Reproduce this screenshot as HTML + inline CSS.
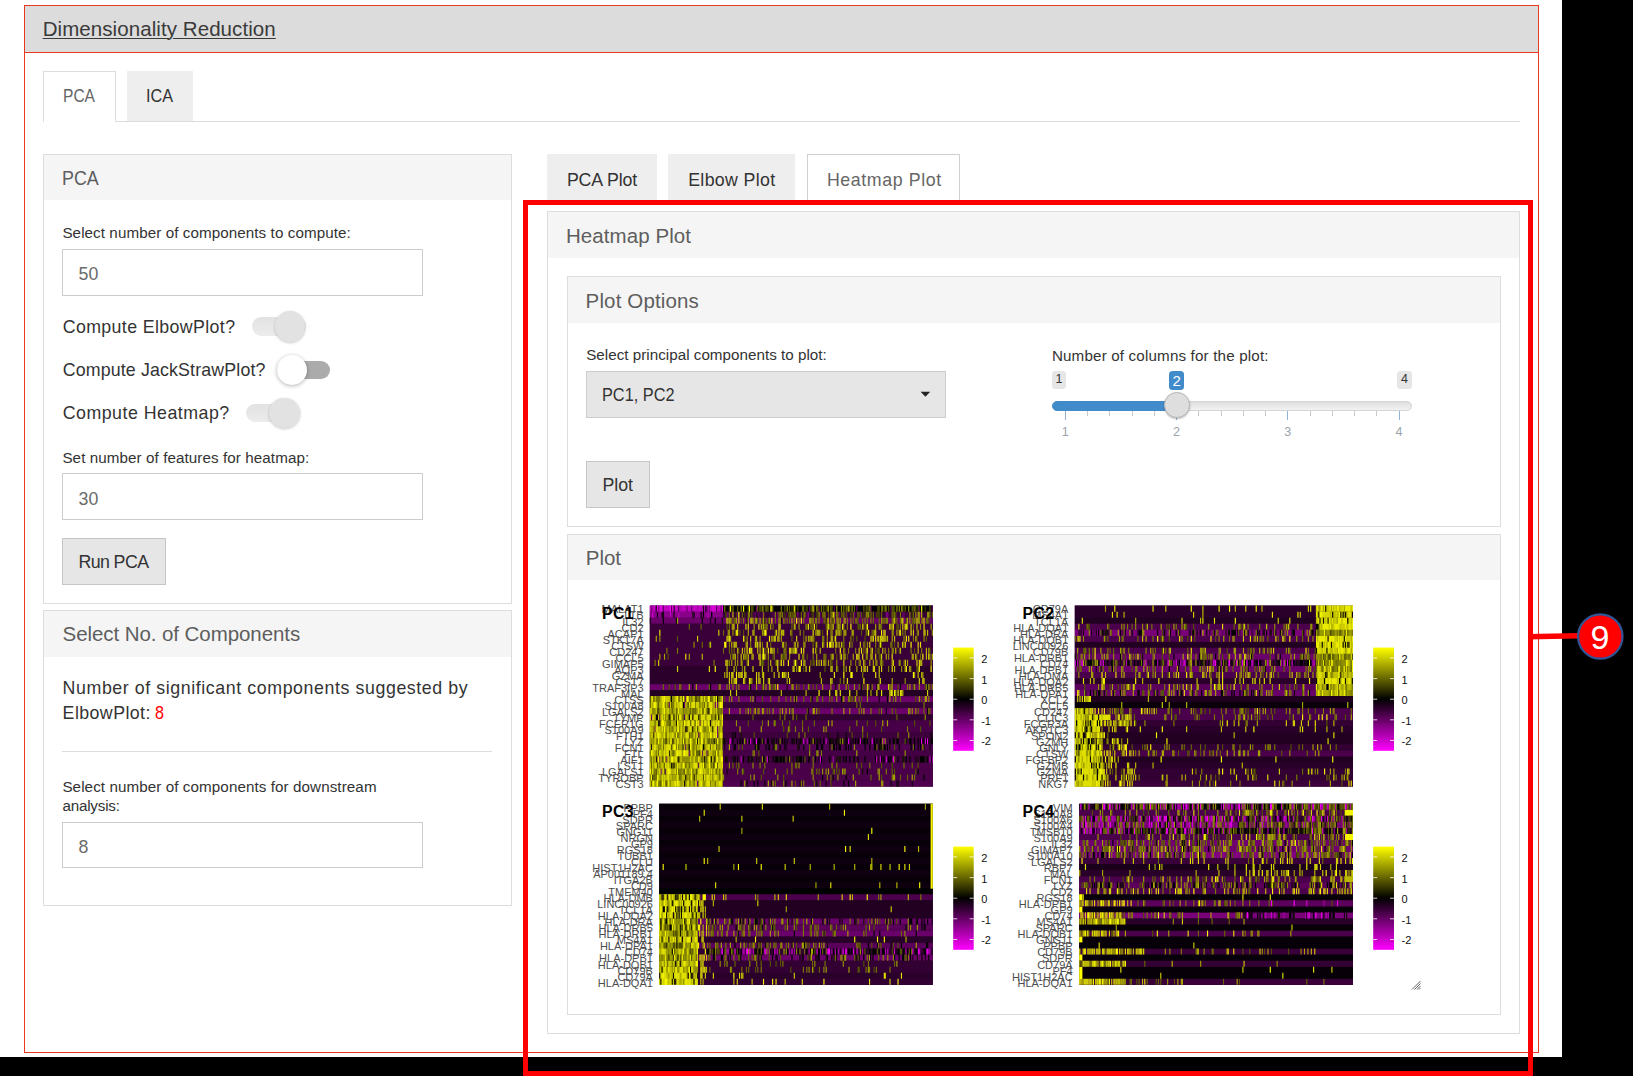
<!DOCTYPE html>
<html><head><meta charset="utf-8"><title>Dimensionality Reduction</title>
<style>
html,body{margin:0;padding:0;background:#fff;}
body{width:1633px;height:1076px;position:relative;overflow:hidden;font-family:"Liberation Sans",sans-serif;}
.a{position:absolute;box-sizing:border-box;}
.t{position:absolute;white-space:pre;margin:0;padding:0;}
.pn{border:1px solid #ddd;background:#fff;}
.ph{background:#f5f5f5;}
.in{border:1px solid #ccc;background:#fff;}
.bt{border:1px solid #c6c6c6;background:#e6e6e6;}
.tab{background:#eee;}
.tabA{background:#fff;border:1px solid #ddd;border-bottom:none;}
</style></head><body>
<div class="a" style="left:1562px;top:0px;width:71px;height:1076px;background:#000"></div>
<div class="a" style="left:0px;top:1057px;width:1633px;height:19px;background:#000"></div>
<div class="a" style="left:24px;top:5px;width:1515px;height:1048px;border:1px solid #e8391f;background:#fff"></div>
<div class="a" style="left:25px;top:6px;width:1513px;height:47px;background:#dcdcdc;border-bottom:1px solid #e8391f"></div>
<div class="a" style="left:43px;top:121px;width:1477px;height:1px;background:#ddd"></div>
<div class="a tabA" style="left:43px;top:71px;width:73px;height:51px;"></div>
<div class="a tab" style="left:127px;top:71px;width:66px;height:50px;"></div>
<div class="a pn" style="left:43px;top:154px;width:469px;height:450px;"></div>
<div class="a ph" style="left:44px;top:155px;width:467px;height:45px;"></div>
<div class="a in" style="left:62px;top:249px;width:361px;height:47px;"></div>
<div class="a" style="left:252px;top:317.3px;width:53.5px;height:18.399999999999977px;border-radius:9.2px;background:linear-gradient(#e2e2e2,#ececec);"></div><div class="a" style="left:275.1px;top:311.3px;width:30.399999999999977px;height:30.399999999999977px;border-radius:50%;background:#e2e2e2;box-shadow:0 1px 3px rgba(0,0,0,0.22);"></div>
<div class="a" style="left:276.5px;top:360.5px;width:53.5px;height:18.399999999999977px;border-radius:9.2px;background:#ababab;"></div><div class="a" style="left:276.5px;top:354.5px;width:30.399999999999977px;height:30.399999999999977px;border-radius:50%;background:#fff;box-shadow:0 1px 4px rgba(0,0,0,0.3);"></div>
<div class="a" style="left:246.2px;top:403.6px;width:53.5px;height:18.399999999999977px;border-radius:9.2px;background:linear-gradient(#e2e2e2,#ececec);"></div><div class="a" style="left:269.3px;top:397.6px;width:30.399999999999977px;height:30.399999999999977px;border-radius:50%;background:#e2e2e2;box-shadow:0 1px 3px rgba(0,0,0,0.22);"></div>
<div class="a in" style="left:62px;top:473px;width:361px;height:47px;"></div>
<div class="a bt" style="left:62px;top:538px;width:104px;height:47px;"></div>
<div class="a pn" style="left:43px;top:610px;width:469px;height:296px;"></div>
<div class="a ph" style="left:44px;top:611px;width:467px;height:46px;"></div>
<div class="a" style="left:62px;top:751px;width:430px;height:1px;background:#ddd"></div>
<div class="a in" style="left:62px;top:822px;width:361px;height:46px;"></div>
<div class="a tab" style="left:547px;top:154px;width:110px;height:48px;"></div>
<div class="a tab" style="left:668px;top:154px;width:127px;height:48px;"></div>
<div class="a tabA" style="left:807px;top:154px;width:153px;height:49px;border-color:#d0d0d0;"></div>
<div class="a pn" style="left:547px;top:211px;width:973px;height:823px;"></div>
<div class="a ph" style="left:548px;top:212px;width:971px;height:46px;"></div>
<div class="a pn" style="left:567px;top:276px;width:934px;height:251px;"></div>
<div class="a ph" style="left:568px;top:277px;width:932px;height:46px;"></div>
<div class="a" style="left:586px;top:371px;width:360px;height:47px;border:1px solid #ccc;background:#e6e6e6"></div>
<svg class="a" style="left:920px;top:391px" width="11" height="7" viewBox="0 0 11 7"><path d="M0.6 0.8 L10.2 0.8 L5.4 5.8 Z" fill="#222"/></svg>
<div class="a bt" style="left:586px;top:461px;width:64px;height:47px;"></div>
<div class="a" style="left:1051.7px;top:400.8px;width:360.0999999999999px;height:10.199999999999989px;border-radius:5px;background:linear-gradient(#dedede,#f2f2f2);border:1px solid #d4d4d4;"></div>
<div class="a" style="left:1051.7px;top:400.8px;width:126.29999999999995px;height:10.199999999999989px;border-radius:5px 0 0 5px;background:#428bca;border:1px solid #428bca;"></div>
<div class="a" style="left:1064.7px;top:411px;width:1.0px;height:9px;background:#8fb3d9"></div><div class="a" style="left:1087.0px;top:411px;width:1.0px;height:4.5px;background:#c8c8c8"></div><div class="a" style="left:1109.2px;top:411px;width:1.0px;height:4.5px;background:#c8c8c8"></div><div class="a" style="left:1131.5px;top:411px;width:1.0px;height:4.5px;background:#c8c8c8"></div><div class="a" style="left:1153.7px;top:411px;width:1.0px;height:4.5px;background:#c8c8c8"></div><div class="a" style="left:1176.0px;top:411px;width:1.0px;height:9px;background:#8fb3d9"></div><div class="a" style="left:1198.2px;top:411px;width:1.0px;height:4.5px;background:#c8c8c8"></div><div class="a" style="left:1220.5px;top:411px;width:1.0px;height:4.5px;background:#c8c8c8"></div><div class="a" style="left:1242.7px;top:411px;width:1.0px;height:4.5px;background:#c8c8c8"></div><div class="a" style="left:1265.0px;top:411px;width:1.0px;height:4.5px;background:#c8c8c8"></div><div class="a" style="left:1287.2px;top:411px;width:1.0px;height:9px;background:#8fb3d9"></div><div class="a" style="left:1309.5px;top:411px;width:1.0px;height:4.5px;background:#c8c8c8"></div><div class="a" style="left:1331.7px;top:411px;width:1.0px;height:4.5px;background:#c8c8c8"></div><div class="a" style="left:1354.0px;top:411px;width:1.0px;height:4.5px;background:#c8c8c8"></div><div class="a" style="left:1376.2px;top:411px;width:1.0px;height:4.5px;background:#c8c8c8"></div><div class="a" style="left:1398.5px;top:411px;width:1.0px;height:9px;background:#8fb3d9"></div>
<div class="a" style="left:1163.8px;top:392.2px;width:25.799999999999955px;height:25.80000000000001px;border-radius:50%;background:#dedede;border:1px solid #b8b8b8;box-shadow:0 1px 2px rgba(0,0,0,0.25);"></div>
<div class="a" style="left:1051.7px;top:371.0px;width:14.399999999999864px;height:17.80000000000001px;border-radius:3.5px;background:#e6e6e6;color:#333;font-size:12.5px;line-height:17.80000000000001px;text-align:center;">1</div>
<div class="a" style="left:1397.4px;top:371.0px;width:14.399999999999864px;height:17.80000000000001px;border-radius:3.5px;background:#e6e6e6;color:#333;font-size:12.5px;line-height:17.80000000000001px;text-align:center;">4</div>
<div class="a" style="left:1169.3px;top:371.1px;width:14.700000000000045px;height:19.0px;border-radius:3.5px;background:#428bca;color:#fff;font-size:15px;line-height:19.0px;text-align:center;">2</div>
<div class="t" style="left:1055.2px;top:425.5px;width:20px;text-align:center;font-size:12.5px;line-height:13px;color:#99a4ac">1</div>
<div class="t" style="left:1166.5px;top:425.5px;width:20px;text-align:center;font-size:12.5px;line-height:13px;color:#99a4ac">2</div>
<div class="t" style="left:1277.7px;top:425.5px;width:20px;text-align:center;font-size:12.5px;line-height:13px;color:#99a4ac">3</div>
<div class="t" style="left:1389.0px;top:425.5px;width:20px;text-align:center;font-size:12.5px;line-height:13px;color:#99a4ac">4</div>
<div class="a pn" style="left:567px;top:534px;width:934px;height:481px;"></div>
<div class="a ph" style="left:568px;top:535px;width:932px;height:45px;"></div>
<svg class="a" style="left:590px;top:596px" width="840" height="400" viewBox="590 596 840 400" font-family="Liberation Sans, sans-serif"><defs><linearGradient id="cb" x1="0" y1="0" x2="0" y2="1"><stop offset="0" stop-color="#ffff00"/><stop offset="0.5" stop-color="#000"/><stop offset="1" stop-color="#ff00ff"/></linearGradient></defs><g font-size="11" fill="#4d4d4d" text-anchor="end"><text x="643.6" y="613.4">MALAT1</text><text x="643.6" y="619.4">LTB</text><text x="643.6" y="625.5">IL32</text><text x="643.6" y="631.5">CD2</text><text x="643.6" y="637.5">ACAP1</text><text x="643.6" y="643.6">STK17A</text><text x="643.6" y="649.6">CTSW</text><text x="643.6" y="655.6">CD247</text><text x="643.6" y="661.7">CCL5</text><text x="643.6" y="667.7">GIMAP5</text><text x="643.6" y="673.7">AQP3</text><text x="643.6" y="679.7">GZMA</text><text x="643.6" y="685.8">CST7</text><text x="643.6" y="691.8">TRAF3IP3</text><text x="643.6" y="697.8">MAL</text><text x="643.6" y="703.9">CTSS</text><text x="643.6" y="709.9">S100A8</text><text x="643.6" y="715.9">LGALS2</text><text x="643.6" y="722.0">TYMP</text><text x="643.6" y="728.0">FCER1G</text><text x="643.6" y="734.0">S100A9</text><text x="643.6" y="740.0">FTH1</text><text x="643.6" y="746.1">LYZ</text><text x="643.6" y="752.1">FCN1</text><text x="643.6" y="758.1">FTL</text><text x="643.6" y="764.2">AIF1</text><text x="643.6" y="770.2">LST1</text><text x="643.6" y="776.2">LGALS1</text><text x="643.6" y="782.3">TYROBP</text><text x="643.6" y="788.3">CST3</text></g><rect x="649.8" y="605.6" width="283.1" height="180.9" fill="#2a0430"/><g transform="translate(649.8 605.6) scale(1.17958 6.03000)"><path fill="#c200c2" d="M0 0h62v1.03h-62z"/><path fill="#000000" d="M62 0h178v1.03h-178z"/><path fill="#8a008a" d="M0 1h62v1.03h-62z"/><path fill="#330033" d="M62 1h178v1.03h-178z"/><path fill="#6b006b" d="M0 2h62v1.03h-62zM0 13h62v1.03h-62zM62 15h178v1.03h-178zM62 17h178v1.03h-178z"/><path fill="#660066" d="M62 2h178v1.03h-178zM62 13h178v1.03h-178z"/><path fill="#3a003a" d="M0 3h62v1.03h-62zM62 3h178v1.03h-178zM0 4h62v1.03h-62zM62 4h178v1.03h-178zM0 5h62v1.03h-62zM62 5h178v1.03h-178zM0 6h62v1.03h-62zM62 6h178v1.03h-178zM0 7h62v1.03h-62zM62 7h178v1.03h-178zM0 8h62v1.03h-62zM62 8h178v1.03h-178zM0 9h62v1.03h-62zM62 9h178v1.03h-178z"/><path fill="#2b002b" d="M0 10h62v1.03h-62zM62 10h178v1.03h-178zM0 11h62v1.03h-62zM62 11h58v1.03h-58zM120 11h120v1.03h-120zM0 12h62v1.03h-62zM62 12h58v1.03h-58zM120 12h120v1.03h-120z"/><path fill="#240024" d="M0 14h62v1.03h-62zM62 14h178v1.03h-178z"/><path fill="#7a7a00" d="M0 15h62v1.03h-62z"/><path fill="#cccc00" d="M0 16h62v1.03h-62z"/><path fill="#380038" d="M62 16h178v1.03h-178z"/><path fill="#8f8f00" d="M0 17h62v1.03h-62zM0 22h62v1.03h-62zM0 25h62v1.03h-62z"/><path fill="#d6d600" d="M0 18h62v1.03h-62z"/><path fill="#300030" d="M62 18h178v1.03h-178z"/><path fill="#c2c200" d="M0 19h62v1.03h-62zM0 21h62v1.03h-62zM0 29h62v1.03h-62z"/><path fill="#470047" d="M62 19h178v1.03h-178zM62 20h178v1.03h-178z"/><path fill="#b8b800" d="M0 20h62v1.03h-62zM0 23h62v1.03h-62zM0 24h62v1.03h-62zM0 28h62v1.03h-62z"/><path fill="#3d003d" d="M62 21h178v1.03h-178z"/><path fill="#420042" d="M62 22h178v1.03h-178zM62 25h178v1.03h-178z"/><path fill="#500050" d="M62 23h178v1.03h-178z"/><path fill="#450045" d="M62 24h178v1.03h-178z"/><path fill="#adad00" d="M0 26h62v1.03h-62zM0 27h62v1.03h-62z"/><path fill="#490049" d="M62 26h178v1.03h-178zM62 27h178v1.03h-178zM62 28h178v1.03h-178z"/><path fill="#4e004e" d="M62 29h178v1.03h-178z"/><path fill="#7a007a" d="M1 0h1v1h-1zM7 0h1v1h-1zM50 0h1v1h-1zM90 0h1v1h-1zM204 0h1v1h-1zM108 1h1v1h-1zM125 1h1v1h-1zM134 1h1v1h-1zM160 1h1v1h-1zM173 1h1v1h-1zM178 1h1v1h-1zM200 1h2v1h-2zM215 1h1v1h-1zM57 16h1v1h-1zM57 21h1v1h-1zM8 25h1v1h-1zM14 25h1v1h-1zM9 27h1v1h-1zM40 29h1v1h-1z"/><path fill="#a300a3" d="M2 0h1v1h-1zM26 0h1v1h-1zM40 0h1v1h-1zM67 22h1v1h-1zM82 22h1v1h-1zM98 22h1v1h-1zM133 22h1v1h-1zM155 25h1v1h-1zM239 25h1v1h-1z"/><path fill="#000000" d="M5 0h1v1h-1zM20 0h1v1h-1zM10 1h1v1h-1zM43 1h1v1h-1zM45 1h1v1h-1zM52 1h1v1h-1zM11 2h1v1h-1zM22 2h1v1h-1zM44 2h1v1h-1zM55 2h1v1h-1zM82 2h1v1h-1zM111 2h1v1h-1zM149 2h1v1h-1zM36 13h1v1h-1zM51 13h1v1h-1zM85 13h1v1h-1zM179 13h1v1h-1zM187 13h1v1h-1zM192 13h1v1h-1zM18 15h1v1h-1zM57 15h1v1h-1zM137 15h1v1h-1zM162 15h1v1h-1zM201 15h1v1h-1zM28 16h1v1h-1zM32 16h1v1h-1zM235 17h1v1h-1zM5 18h2v1h-2zM16 18h1v1h-1zM20 18h1v1h-1zM33 18h1v1h-1zM58 18h1v1h-1zM22 19h1v1h-1zM36 20h1v1h-1zM53 20h1v1h-1zM70 21h1v1h-1zM72 21h1v1h-1zM159 21h1v1h-1zM166 21h1v1h-1zM238 21h1v1h-1zM54 22h1v1h-1zM63 22h1v1h-1zM70 22h1v1h-1zM76 22h1v1h-1zM78 22h1v1h-1zM81 22h1v1h-1zM84 22h1v1h-1zM88 22h1v1h-1zM91 22h3v1h-3zM99 22h2v1h-2zM104 22h1v1h-1zM109 22h1v1h-1zM112 22h1v1h-1zM114 22h1v1h-1zM124 22h1v1h-1zM127 22h1v1h-1zM135 22h1v1h-1zM139 22h1v1h-1zM142 22h1v1h-1zM144 22h1v1h-1zM147 22h1v1h-1zM152 22h2v1h-2zM155 22h1v1h-1zM158 22h1v1h-1zM160 22h1v1h-1zM166 22h1v1h-1zM172 22h1v1h-1zM174 22h1v1h-1zM176 22h2v1h-2zM181 22h2v1h-2zM184 22h1v1h-1zM187 22h1v1h-1zM190 22h1v1h-1zM192 22h1v1h-1zM195 22h1v1h-1zM203 22h1v1h-1zM206 22h1v1h-1zM209 22h2v1h-2zM220 22h2v1h-2zM224 22h1v1h-1zM227 22h1v1h-1zM229 22h1v1h-1zM234 22h1v1h-1zM238 22h2v1h-2zM33 23h1v1h-1zM45 23h1v1h-1zM71 23h2v1h-2zM89 23h1v1h-1zM91 23h2v1h-2zM98 23h1v1h-1zM101 23h1v1h-1zM110 23h1v1h-1zM115 23h1v1h-1zM126 23h1v1h-1zM130 23h1v1h-1zM141 23h2v1h-2zM145 23h2v1h-2zM155 23h2v1h-2zM158 23h1v1h-1zM160 23h2v1h-2zM166 23h1v1h-1zM168 23h1v1h-1zM170 23h1v1h-1zM182 23h1v1h-1zM186 23h1v1h-1zM190 23h2v1h-2zM194 23h1v1h-1zM198 23h2v1h-2zM201 23h1v1h-1zM211 23h1v1h-1zM221 23h1v1h-1zM224 23h1v1h-1zM227 23h1v1h-1zM229 23h1v1h-1zM42 24h1v1h-1zM52 25h1v1h-1zM54 25h1v1h-1zM64 25h1v1h-1zM71 25h1v1h-1zM74 25h1v1h-1zM79 25h1v1h-1zM83 25h1v1h-1zM86 25h1v1h-1zM96 25h1v1h-1zM100 25h1v1h-1zM104 25h1v1h-1zM106 25h3v1h-3zM110 25h2v1h-2zM113 25h1v1h-1zM124 25h1v1h-1zM126 25h3v1h-3zM130 25h1v1h-1zM140 25h1v1h-1zM145 25h1v1h-1zM152 25h1v1h-1zM164 25h1v1h-1zM166 25h1v1h-1zM169 25h1v1h-1zM176 25h1v1h-1zM182 25h1v1h-1zM191 25h1v1h-1zM196 25h1v1h-1zM198 25h1v1h-1zM202 25h1v1h-1zM204 25h1v1h-1zM210 25h1v1h-1zM217 25h1v1h-1zM220 25h1v1h-1zM229 25h4v1h-4zM235 25h1v1h-1zM238 25h1v1h-1zM20 26h1v1h-1zM54 26h1v1h-1zM184 27h1v1h-1zM227 27h1v1h-1zM2 28h1v1h-1zM30 28h1v1h-1zM37 28h1v1h-1zM146 28h1v1h-1zM155 28h1v1h-1zM166 28h1v1h-1zM232 28h1v1h-1zM9 29h1v1h-1zM77 29h1v1h-1zM82 29h1v1h-1zM88 29h1v1h-1zM91 29h1v1h-1zM103 29h1v1h-1zM115 29h1v1h-1zM164 29h1v1h-1zM168 29h1v1h-1zM210 29h1v1h-1z"/><path fill="#f500f5" d="M6 0h1v1h-1zM9 0h1v1h-1zM17 0h1v1h-1zM55 0h1v1h-1zM188 22h1v1h-1zM230 22h1v1h-1zM235 22h1v1h-1zM99 25h1v1h-1zM144 25h1v1h-1zM192 25h1v1h-1zM206 25h1v1h-1z"/><path fill="#660066" d="M11 0h1v1h-1zM31 0h1v1h-1zM35 0h1v1h-1zM48 0h1v1h-1zM135 0h1v1h-1zM143 0h1v1h-1zM175 0h1v1h-1zM187 0h1v1h-1zM228 0h1v1h-1zM239 0h1v1h-1zM65 1h2v1h-2zM74 1h1v1h-1zM89 1h1v1h-1zM92 1h1v1h-1zM95 1h1v1h-1zM105 1h1v1h-1zM115 1h1v1h-1zM133 1h1v1h-1zM144 1h1v1h-1zM214 1h1v1h-1zM226 1h1v1h-1zM229 1h1v1h-1zM30 15h1v1h-1zM16 16h1v1h-1zM29 16h1v1h-1zM55 16h1v1h-1zM1 18h1v1h-1zM4 20h1v1h-1zM57 20h1v1h-1zM41 21h1v1h-1zM30 23h1v1h-1zM33 24h1v1h-1zM44 24h1v1h-1zM48 24h1v1h-1z"/><path fill="#520052" d="M18 0h1v1h-1zM24 0h1v1h-1zM56 0h1v1h-1zM60 0h1v1h-1zM156 0h1v1h-1zM69 1h1v1h-1zM88 1h1v1h-1zM103 1h1v1h-1zM157 1h1v1h-1zM165 1h1v1h-1zM167 1h1v1h-1zM202 1h1v1h-1zM209 1h1v1h-1zM218 1h1v1h-1zM8 18h1v1h-1zM29 18h1v1h-1zM42 19h1v1h-1zM41 26h1v1h-1zM13 27h1v1h-1z"/><path fill="#e000e0" d="M19 0h1v1h-1zM53 0h1v1h-1zM61 0h1v1h-1zM90 22h1v1h-1zM178 22h1v1h-1zM233 22h1v1h-1z"/><path fill="#141400" d="M45 0h1v1h-1zM36 1h1v1h-1zM61 2h1v1h-1zM157 13h1v1h-1zM235 13h1v1h-1zM3 15h1v1h-1zM41 18h1v1h-1zM55 18h1v1h-1zM7 19h1v1h-1zM31 20h1v1h-1zM77 21h1v1h-1zM151 21h1v1h-1zM40 22h1v1h-1zM62 22h1v1h-1zM66 22h1v1h-1zM105 22h1v1h-1zM122 22h1v1h-1zM128 22h1v1h-1zM137 22h1v1h-1zM141 22h1v1h-1zM154 22h1v1h-1zM159 22h1v1h-1zM164 22h1v1h-1zM179 22h1v1h-1zM183 22h1v1h-1zM194 22h1v1h-1zM207 22h1v1h-1zM217 22h1v1h-1zM105 23h1v1h-1zM125 23h1v1h-1zM152 23h1v1h-1zM195 23h2v1h-2zM203 23h1v1h-1zM16 24h1v1h-1zM24 25h1v1h-1zM46 25h1v1h-1zM65 25h1v1h-1zM70 25h1v1h-1zM84 25h1v1h-1zM87 25h1v1h-1zM92 25h1v1h-1zM109 25h1v1h-1zM112 25h1v1h-1zM121 25h1v1h-1zM125 25h1v1h-1zM158 25h1v1h-1zM160 25h2v1h-2zM172 25h1v1h-1zM193 25h1v1h-1zM214 25h2v1h-2zM227 25h1v1h-1zM233 25h1v1h-1zM18 26h1v1h-1zM180 27h1v1h-1zM59 28h1v1h-1zM141 29h1v1h-1z"/><path fill="#140014" d="M47 0h1v1h-1zM6 1h1v1h-1zM11 1h1v1h-1zM20 1h1v1h-1zM37 1h1v1h-1zM0 2h1v1h-1zM51 2h1v1h-1zM97 2h1v1h-1zM116 13h1v1h-1zM212 13h1v1h-1zM89 15h1v1h-1zM123 15h1v1h-1zM194 15h1v1h-1zM49 17h1v1h-1zM134 17h1v1h-1zM200 17h1v1h-1zM36 18h1v1h-1zM8 19h1v1h-1zM51 19h1v1h-1zM30 20h1v1h-1zM3 21h1v1h-1zM19 22h1v1h-1zM74 22h1v1h-1zM96 22h1v1h-1zM103 22h1v1h-1zM107 22h1v1h-1zM116 22h1v1h-1zM120 22h2v1h-2zM126 22h1v1h-1zM157 22h1v1h-1zM162 22h1v1h-1zM167 22h1v1h-1zM170 22h1v1h-1zM231 22h2v1h-2zM236 22h1v1h-1zM1 23h1v1h-1zM63 23h1v1h-1zM100 23h1v1h-1zM104 23h1v1h-1zM114 23h1v1h-1zM165 23h1v1h-1zM232 23h1v1h-1zM237 23h1v1h-1zM5 25h1v1h-1zM72 25h1v1h-1zM90 25h1v1h-1zM97 25h1v1h-1zM114 25h1v1h-1zM117 25h1v1h-1zM134 25h2v1h-2zM143 25h1v1h-1zM173 25h1v1h-1zM203 25h1v1h-1zM225 25h1v1h-1zM65 27h1v1h-1zM29 29h1v1h-1zM97 29h1v1h-1zM127 29h1v1h-1zM149 29h1v1h-1zM204 29h1v1h-1zM209 29h1v1h-1zM222 29h1v1h-1z"/><path fill="#7a7a00" d="M63 0h1v1h-1zM70 0h1v1h-1zM93 0h1v1h-1zM95 0h1v1h-1zM98 0h1v1h-1zM111 0h1v1h-1zM137 0h1v1h-1zM141 0h1v1h-1zM145 0h1v1h-1zM153 0h1v1h-1zM164 0h1v1h-1zM166 0h1v1h-1zM83 1h2v1h-2zM96 1h1v1h-1zM106 1h1v1h-1zM112 1h1v1h-1zM119 1h1v1h-1zM122 1h1v1h-1zM147 1h1v1h-1zM156 1h1v1h-1zM164 1h1v1h-1zM176 1h1v1h-1zM184 1h1v1h-1zM187 1h1v1h-1zM205 1h1v1h-1zM207 1h1v1h-1zM212 1h1v1h-1zM69 2h1v1h-1zM79 2h1v1h-1zM113 2h1v1h-1zM122 2h1v1h-1zM126 2h1v1h-1zM130 2h1v1h-1zM137 2h1v1h-1zM140 2h2v1h-2zM143 2h1v1h-1zM148 2h1v1h-1zM158 2h1v1h-1zM164 2h1v1h-1zM167 2h1v1h-1zM170 2h1v1h-1zM175 2h1v1h-1zM182 2h1v1h-1zM187 2h1v1h-1zM198 2h1v1h-1zM200 2h2v1h-2zM224 2h1v1h-1zM99 3h1v1h-1zM123 3h1v1h-1zM137 3h1v1h-1zM153 3h1v1h-1zM161 3h1v1h-1zM164 3h1v1h-1zM167 3h1v1h-1zM183 3h1v1h-1zM195 3h1v1h-1zM212 3h1v1h-1zM96 4h1v1h-1zM106 4h1v1h-1zM140 4h1v1h-1zM153 4h1v1h-1zM161 4h1v1h-1zM183 4h1v1h-1zM188 4h1v1h-1zM206 4h1v1h-1zM214 4h1v1h-1zM216 4h1v1h-1zM104 5h1v1h-1zM135 5h1v1h-1zM146 5h2v1h-2zM153 5h1v1h-1zM164 5h1v1h-1zM170 5h1v1h-1zM223 5h1v1h-1zM67 6h1v1h-1zM81 6h1v1h-1zM85 6h1v1h-1zM95 6h1v1h-1zM115 6h1v1h-1zM164 6h1v1h-1zM171 6h1v1h-1zM191 6h1v1h-1zM14 7h1v1h-1zM23 7h1v1h-1zM95 7h1v1h-1zM168 7h1v1h-1zM174 7h1v1h-1zM202 7h1v1h-1zM206 7h1v1h-1zM221 7h1v1h-1zM230 7h1v1h-1zM68 8h1v1h-1zM74 8h1v1h-1zM80 8h1v1h-1zM105 8h1v1h-1zM114 8h1v1h-1zM129 8h1v1h-1zM138 8h1v1h-1zM183 8h2v1h-2zM4 9h1v1h-1zM54 9h1v1h-1zM67 9h1v1h-1zM153 9h1v1h-1zM174 9h1v1h-1zM177 9h1v1h-1zM191 9h1v1h-1zM195 9h1v1h-1zM73 10h1v1h-1zM78 10h1v1h-1zM100 10h1v1h-1zM202 10h1v1h-1zM227 10h1v1h-1zM180 11h1v1h-1zM65 13h1v1h-1zM70 13h1v1h-1zM75 13h1v1h-1zM84 13h1v1h-1zM102 13h1v1h-1zM185 13h1v1h-1zM188 13h1v1h-1zM194 13h1v1h-1zM218 13h1v1h-1zM234 13h1v1h-1zM239 13h1v1h-1zM67 15h1v1h-1zM75 15h1v1h-1zM85 15h1v1h-1zM109 15h1v1h-1zM119 15h1v1h-1zM168 15h2v1h-2zM13 16h1v1h-1zM19 16h2v1h-2zM38 16h1v1h-1zM44 16h1v1h-1zM48 16h2v1h-2zM232 16h1v1h-1zM2 17h1v1h-1zM28 17h1v1h-1zM37 17h1v1h-1zM42 17h1v1h-1zM44 17h2v1h-2zM57 17h1v1h-1zM88 17h1v1h-1zM110 17h1v1h-1zM154 17h1v1h-1zM177 17h1v1h-1zM179 17h1v1h-1zM187 17h1v1h-1zM196 17h1v1h-1zM236 17h1v1h-1zM13 18h1v1h-1zM27 18h1v1h-1zM32 18h1v1h-1zM47 18h1v1h-1zM53 18h1v1h-1zM60 18h1v1h-1zM114 18h1v1h-1zM14 19h2v1h-2zM28 19h1v1h-1zM59 19h1v1h-1zM175 19h1v1h-1zM3 20h1v1h-1zM22 20h1v1h-1zM46 20h2v1h-2zM49 20h1v1h-1zM59 20h1v1h-1zM123 20h1v1h-1zM129 20h1v1h-1zM218 20h1v1h-1zM13 21h2v1h-2zM23 21h2v1h-2zM27 21h1v1h-1zM35 21h1v1h-1zM38 21h1v1h-1zM126 21h1v1h-1zM131 21h1v1h-1zM6 22h1v1h-1zM11 22h1v1h-1zM37 22h1v1h-1zM46 22h1v1h-1zM53 22h1v1h-1zM110 22h1v1h-1zM7 23h1v1h-1zM22 23h1v1h-1zM37 23h1v1h-1zM39 23h1v1h-1zM58 23h1v1h-1zM106 23h2v1h-2zM154 23h1v1h-1zM0 24h1v1h-1zM5 24h1v1h-1zM27 24h1v1h-1zM37 24h1v1h-1zM87 24h1v1h-1zM141 24h1v1h-1zM145 24h1v1h-1zM1 25h1v1h-1zM13 25h1v1h-1zM23 25h1v1h-1zM43 25h1v1h-1zM47 25h1v1h-1zM118 25h1v1h-1zM138 25h1v1h-1zM3 26h1v1h-1zM8 26h1v1h-1zM47 26h1v1h-1zM75 26h1v1h-1zM93 26h1v1h-1zM97 26h1v1h-1zM120 26h1v1h-1zM138 26h1v1h-1zM158 26h1v1h-1zM175 26h1v1h-1zM186 26h1v1h-1zM215 26h1v1h-1zM1 27h1v1h-1zM4 27h1v1h-1zM22 27h1v1h-1zM25 27h1v1h-1zM28 27h1v1h-1zM32 27h1v1h-1zM49 27h1v1h-1zM74 27h1v1h-1zM78 27h1v1h-1zM120 27h1v1h-1zM200 27h1v1h-1zM26 28h1v1h-1zM31 28h1v1h-1zM33 28h1v1h-1zM39 28h1v1h-1zM85 28h1v1h-1zM150 28h1v1h-1zM205 28h1v1h-1zM224 28h1v1h-1zM7 29h2v1h-2zM30 29h1v1h-1zM41 29h1v1h-1zM51 29h1v1h-1zM113 29h1v1h-1zM128 29h1v1h-1zM130 29h1v1h-1z"/><path fill="#525200" d="M67 0h1v1h-1zM87 0h1v1h-1zM96 0h1v1h-1zM114 0h1v1h-1zM118 0h1v1h-1zM123 0h1v1h-1zM154 0h1v1h-1zM167 0h1v1h-1zM183 0h1v1h-1zM202 0h1v1h-1zM205 0h2v1h-2zM225 0h1v1h-1zM227 0h1v1h-1zM237 0h1v1h-1zM64 1h1v1h-1zM86 1h1v1h-1zM111 1h1v1h-1zM118 1h1v1h-1zM120 1h2v1h-2zM130 1h1v1h-1zM138 1h1v1h-1zM142 1h1v1h-1zM151 1h1v1h-1zM162 1h2v1h-2zM166 1h1v1h-1zM170 1h1v1h-1zM177 1h1v1h-1zM179 1h1v1h-1zM192 1h1v1h-1zM206 1h1v1h-1zM208 1h1v1h-1zM77 2h1v1h-1zM91 2h1v1h-1zM95 2h1v1h-1zM100 2h1v1h-1zM147 2h1v1h-1zM154 2h2v1h-2zM176 2h1v1h-1zM208 2h1v1h-1zM223 2h1v1h-1zM236 2h1v1h-1zM65 3h1v1h-1zM69 3h1v1h-1zM95 3h1v1h-1zM97 3h1v1h-1zM133 3h1v1h-1zM149 3h1v1h-1zM158 3h1v1h-1zM176 3h2v1h-2zM209 3h1v1h-1zM76 4h1v1h-1zM79 4h1v1h-1zM146 4h1v1h-1zM162 4h1v1h-1zM179 4h1v1h-1zM184 4h1v1h-1zM226 4h1v1h-1zM23 5h1v1h-1zM120 5h1v1h-1zM139 5h1v1h-1zM172 5h1v1h-1zM175 5h1v1h-1zM182 5h1v1h-1zM194 5h1v1h-1zM234 5h1v1h-1zM140 6h1v1h-1zM163 6h1v1h-1zM182 6h1v1h-1zM194 6h1v1h-1zM196 6h1v1h-1zM205 6h1v1h-1zM207 6h1v1h-1zM75 7h1v1h-1zM108 7h1v1h-1zM113 7h1v1h-1zM141 7h1v1h-1zM165 7h1v1h-1zM191 7h1v1h-1zM194 7h1v1h-1zM211 7h1v1h-1zM224 7h1v1h-1zM237 7h1v1h-1zM15 8h1v1h-1zM82 8h1v1h-1zM98 8h1v1h-1zM104 8h1v1h-1zM113 8h1v1h-1zM133 8h1v1h-1zM149 8h1v1h-1zM158 8h1v1h-1zM167 8h1v1h-1zM194 8h2v1h-2zM226 8h1v1h-1zM66 9h1v1h-1zM94 9h1v1h-1zM96 9h1v1h-1zM106 9h1v1h-1zM110 9h1v1h-1zM139 9h1v1h-1zM149 9h1v1h-1zM154 9h1v1h-1zM130 10h1v1h-1zM148 10h1v1h-1zM159 10h1v1h-1zM221 10h1v1h-1zM194 12h1v1h-1zM16 13h1v1h-1zM21 13h1v1h-1zM26 13h1v1h-1zM58 13h1v1h-1zM95 13h1v1h-1zM105 13h1v1h-1zM126 13h1v1h-1zM130 13h1v1h-1zM135 13h1v1h-1zM138 13h1v1h-1zM141 13h1v1h-1zM180 13h1v1h-1zM182 13h1v1h-1zM203 13h1v1h-1zM210 13h1v1h-1zM223 13h1v1h-1zM233 13h1v1h-1zM237 13h1v1h-1zM0 15h1v1h-1zM27 15h1v1h-1zM38 15h2v1h-2zM42 15h1v1h-1zM63 15h1v1h-1zM95 15h1v1h-1zM163 15h1v1h-1zM170 15h1v1h-1zM173 15h1v1h-1zM179 15h1v1h-1zM225 15h1v1h-1zM230 15h1v1h-1zM7 16h1v1h-1zM18 16h1v1h-1zM6 17h2v1h-2zM36 17h1v1h-1zM48 17h1v1h-1zM133 17h1v1h-1zM143 17h1v1h-1zM194 17h1v1h-1zM208 17h1v1h-1zM22 18h1v1h-1zM24 18h1v1h-1zM42 18h1v1h-1zM124 18h1v1h-1zM16 19h1v1h-1zM38 19h1v1h-1zM83 19h1v1h-1zM118 19h1v1h-1zM184 19h1v1h-1zM191 19h1v1h-1zM224 19h1v1h-1zM237 19h1v1h-1zM40 20h1v1h-1zM113 20h1v1h-1zM134 20h1v1h-1zM196 20h1v1h-1zM229 20h1v1h-1zM33 21h1v1h-1zM53 21h1v1h-1zM88 21h1v1h-1zM116 21h1v1h-1zM171 21h1v1h-1zM184 21h1v1h-1zM13 22h2v1h-2zM27 22h1v1h-1zM59 22h1v1h-1zM95 22h1v1h-1zM216 22h1v1h-1zM18 23h1v1h-1zM32 23h1v1h-1zM75 23h1v1h-1zM78 23h1v1h-1zM207 23h1v1h-1zM49 24h1v1h-1zM55 24h1v1h-1zM92 24h1v1h-1zM10 25h1v1h-1zM48 25h1v1h-1zM55 25h1v1h-1zM98 25h1v1h-1zM115 25h1v1h-1zM131 25h1v1h-1zM19 26h1v1h-1zM30 26h1v1h-1zM46 26h1v1h-1zM57 26h1v1h-1zM73 26h1v1h-1zM179 26h1v1h-1zM196 26h1v1h-1zM205 26h1v1h-1zM227 26h1v1h-1zM5 27h1v1h-1zM36 27h1v1h-1zM39 27h1v1h-1zM59 27h1v1h-1zM79 27h1v1h-1zM96 27h1v1h-1zM138 27h1v1h-1zM155 27h1v1h-1zM158 27h1v1h-1zM160 27h1v1h-1zM207 27h1v1h-1zM225 27h1v1h-1zM5 28h1v1h-1zM25 28h1v1h-1zM45 28h1v1h-1zM53 28h1v1h-1zM94 28h1v1h-1zM113 28h1v1h-1zM196 28h1v1h-1zM37 29h1v1h-1zM123 29h1v1h-1zM153 29h1v1h-1z"/><path fill="#f5f500" d="M68 0h1v1h-1zM79 0h1v1h-1zM84 0h1v1h-1zM122 0h1v1h-1zM138 0h1v1h-1zM230 0h1v1h-1zM75 1h1v1h-1zM155 1h1v1h-1zM65 2h1v1h-1zM124 2h1v1h-1zM139 3h1v1h-1zM163 3h1v1h-1zM170 3h1v1h-1zM184 3h1v1h-1zM203 3h1v1h-1zM216 3h1v1h-1zM97 4h2v1h-2zM142 4h1v1h-1zM150 4h1v1h-1zM185 4h1v1h-1zM196 4h1v1h-1zM101 5h1v1h-1zM137 5h1v1h-1zM154 5h1v1h-1zM193 5h1v1h-1zM199 5h1v1h-1zM217 5h1v1h-1zM63 6h2v1h-2zM91 6h1v1h-1zM93 6h1v1h-1zM99 6h1v1h-1zM150 6h1v1h-1zM152 6h2v1h-2zM214 6h1v1h-1zM216 6h1v1h-1zM221 6h1v1h-1zM84 7h1v1h-1zM96 7h1v1h-1zM100 7h1v1h-1zM128 7h1v1h-1zM138 7h1v1h-1zM161 7h1v1h-1zM188 7h1v1h-1zM96 8h1v1h-1zM175 8h1v1h-1zM231 8h1v1h-1zM117 9h1v1h-1zM123 9h1v1h-1zM128 9h1v1h-1zM181 9h1v1h-1zM216 9h1v1h-1zM55 10h1v1h-1zM126 10h2v1h-2zM182 10h1v1h-1zM217 10h1v1h-1zM228 10h1v1h-1zM70 11h1v1h-1zM73 11h1v1h-1zM112 11h1v1h-1zM164 11h1v1h-1zM170 11h2v1h-2zM223 11h1v1h-1zM153 12h1v1h-1zM181 12h1v1h-1zM108 13h1v1h-1zM143 14h1v1h-1zM169 14h1v1h-1zM207 14h1v1h-1zM2 15h1v1h-1zM12 15h1v1h-1zM14 15h1v1h-1zM23 15h1v1h-1zM26 15h1v1h-1zM28 15h1v1h-1zM31 15h2v1h-2zM43 15h1v1h-1zM49 15h2v1h-2zM54 15h1v1h-1zM56 15h1v1h-1zM3 16h2v1h-2zM11 16h1v1h-1zM26 16h1v1h-1zM37 16h1v1h-1zM47 16h1v1h-1zM59 16h2v1h-2zM12 17h1v1h-1zM24 17h1v1h-1zM41 17h1v1h-1zM43 17h1v1h-1zM52 17h1v1h-1zM10 18h1v1h-1zM25 18h1v1h-1zM61 18h1v1h-1zM10 19h2v1h-2zM23 19h1v1h-1zM29 19h1v1h-1zM32 19h1v1h-1zM36 19h1v1h-1zM39 19h1v1h-1zM44 19h1v1h-1zM49 19h1v1h-1zM54 19h1v1h-1zM58 19h1v1h-1zM12 20h1v1h-1zM24 20h1v1h-1zM42 20h2v1h-2zM50 20h1v1h-1zM7 21h1v1h-1zM15 21h1v1h-1zM22 21h1v1h-1zM26 21h1v1h-1zM31 21h1v1h-1zM37 21h1v1h-1zM43 21h1v1h-1zM51 21h1v1h-1zM54 21h1v1h-1zM56 21h1v1h-1zM59 21h1v1h-1zM7 22h1v1h-1zM28 22h1v1h-1zM34 22h1v1h-1zM43 22h2v1h-2zM57 22h1v1h-1zM4 23h1v1h-1zM10 23h1v1h-1zM16 23h1v1h-1zM20 23h2v1h-2zM34 23h1v1h-1zM43 23h1v1h-1zM55 23h1v1h-1zM1 24h1v1h-1zM15 24h1v1h-1zM23 24h1v1h-1zM29 24h1v1h-1zM31 24h1v1h-1zM56 24h1v1h-1zM7 25h1v1h-1zM18 25h2v1h-2zM21 25h1v1h-1zM37 25h1v1h-1zM41 25h1v1h-1zM50 25h1v1h-1zM57 25h1v1h-1zM60 25h2v1h-2zM4 26h1v1h-1zM13 26h1v1h-1zM15 26h1v1h-1zM28 26h1v1h-1zM43 26h1v1h-1zM45 26h1v1h-1zM50 26h1v1h-1zM55 26h2v1h-2zM0 27h1v1h-1zM15 27h2v1h-2zM23 27h1v1h-1zM35 27h1v1h-1zM42 27h2v1h-2zM60 27h1v1h-1zM1 28h1v1h-1zM6 28h1v1h-1zM15 28h1v1h-1zM35 28h1v1h-1zM2 29h2v1h-2zM6 29h1v1h-1zM10 29h1v1h-1zM15 29h1v1h-1zM21 29h1v1h-1zM23 29h1v1h-1zM43 29h1v1h-1zM49 29h1v1h-1zM59 29h1v1h-1z"/><path fill="#666600" d="M74 0h1v1h-1zM83 0h1v1h-1zM86 0h1v1h-1zM91 0h1v1h-1zM99 0h1v1h-1zM129 0h2v1h-2zM142 0h1v1h-1zM147 0h1v1h-1zM150 0h1v1h-1zM169 0h1v1h-1zM173 0h1v1h-1zM181 0h1v1h-1zM193 0h1v1h-1zM196 0h2v1h-2zM200 0h1v1h-1zM214 0h1v1h-1zM216 0h1v1h-1zM222 0h1v1h-1zM224 0h1v1h-1zM67 1h1v1h-1zM78 1h1v1h-1zM109 1h1v1h-1zM123 1h1v1h-1zM128 1h1v1h-1zM146 1h1v1h-1zM153 1h1v1h-1zM159 1h1v1h-1zM172 1h1v1h-1zM189 1h1v1h-1zM196 1h1v1h-1zM223 1h1v1h-1zM237 1h1v1h-1zM239 1h1v1h-1zM71 2h2v1h-2zM98 2h1v1h-1zM106 2h1v1h-1zM114 2h1v1h-1zM116 2h1v1h-1zM118 2h1v1h-1zM160 2h1v1h-1zM172 2h1v1h-1zM174 2h1v1h-1zM180 2h1v1h-1zM184 2h1v1h-1zM189 2h1v1h-1zM194 2h1v1h-1zM197 2h1v1h-1zM199 2h1v1h-1zM205 2h1v1h-1zM209 2h1v1h-1zM212 2h1v1h-1zM217 2h1v1h-1zM222 2h1v1h-1zM225 2h1v1h-1zM230 2h1v1h-1zM234 2h2v1h-2zM33 3h1v1h-1zM43 3h1v1h-1zM67 3h1v1h-1zM104 3h1v1h-1zM120 3h1v1h-1zM136 3h1v1h-1zM138 3h1v1h-1zM141 3h1v1h-1zM152 3h1v1h-1zM178 3h1v1h-1zM181 3h1v1h-1zM196 3h1v1h-1zM210 3h1v1h-1zM223 3h1v1h-1zM62 4h1v1h-1zM72 4h1v1h-1zM120 4h1v1h-1zM130 4h1v1h-1zM144 4h1v1h-1zM157 4h1v1h-1zM166 4h1v1h-1zM189 4h1v1h-1zM80 5h1v1h-1zM130 5h1v1h-1zM156 5h1v1h-1zM200 5h1v1h-1zM226 5h1v1h-1zM44 6h1v1h-1zM50 6h1v1h-1zM102 6h1v1h-1zM138 6h1v1h-1zM215 6h1v1h-1zM62 7h1v1h-1zM67 7h1v1h-1zM69 7h1v1h-1zM71 7h1v1h-1zM98 7h1v1h-1zM115 7h1v1h-1zM120 7h1v1h-1zM157 7h1v1h-1zM181 7h1v1h-1zM193 7h1v1h-1zM112 8h1v1h-1zM147 8h1v1h-1zM153 8h1v1h-1zM229 8h1v1h-1zM78 9h1v1h-1zM82 9h1v1h-1zM95 9h1v1h-1zM100 9h1v1h-1zM124 9h1v1h-1zM136 9h1v1h-1zM138 9h1v1h-1zM182 9h1v1h-1zM197 9h1v1h-1zM212 9h1v1h-1zM215 9h1v1h-1zM226 10h1v1h-1zM161 12h1v1h-1zM11 13h1v1h-1zM50 13h1v1h-1zM73 13h1v1h-1zM104 13h1v1h-1zM124 13h1v1h-1zM168 13h1v1h-1zM177 13h1v1h-1zM51 15h1v1h-1zM58 15h1v1h-1zM102 15h1v1h-1zM115 15h1v1h-1zM130 15h1v1h-1zM136 15h1v1h-1zM141 15h2v1h-2zM146 15h1v1h-1zM152 15h1v1h-1zM154 15h1v1h-1zM171 15h1v1h-1zM177 15h1v1h-1zM206 15h1v1h-1zM212 15h1v1h-1zM0 16h1v1h-1zM15 16h1v1h-1zM42 16h1v1h-1zM46 16h1v1h-1zM175 16h1v1h-1zM178 16h1v1h-1zM19 17h1v1h-1zM22 17h1v1h-1zM34 17h1v1h-1zM38 17h1v1h-1zM50 17h1v1h-1zM58 17h1v1h-1zM60 17h1v1h-1zM81 17h1v1h-1zM85 17h1v1h-1zM91 17h1v1h-1zM99 17h1v1h-1zM101 17h1v1h-1zM120 17h1v1h-1zM205 17h1v1h-1zM227 17h1v1h-1zM232 17h1v1h-1zM237 17h1v1h-1zM15 18h1v1h-1zM17 18h1v1h-1zM28 18h1v1h-1zM52 18h1v1h-1zM87 18h1v1h-1zM110 18h1v1h-1zM132 18h1v1h-1zM209 18h1v1h-1zM4 19h1v1h-1zM17 19h1v1h-1zM34 19h1v1h-1zM95 19h1v1h-1zM106 19h1v1h-1zM112 19h1v1h-1zM129 19h1v1h-1zM139 19h1v1h-1zM16 20h1v1h-1zM19 20h1v1h-1zM25 20h1v1h-1zM61 20h1v1h-1zM118 20h1v1h-1zM169 20h1v1h-1zM21 21h1v1h-1zM36 21h1v1h-1zM42 21h1v1h-1zM58 21h1v1h-1zM180 21h1v1h-1zM210 21h1v1h-1zM16 22h1v1h-1zM29 22h1v1h-1zM42 22h1v1h-1zM49 22h2v1h-2zM52 22h1v1h-1zM56 22h1v1h-1zM61 22h1v1h-1zM161 22h1v1h-1zM11 23h1v1h-1zM24 23h1v1h-1zM27 23h2v1h-2zM36 23h1v1h-1zM46 23h1v1h-1zM51 23h1v1h-1zM56 23h1v1h-1zM59 23h1v1h-1zM61 23h1v1h-1zM90 23h1v1h-1zM135 23h1v1h-1zM192 23h1v1h-1zM197 23h1v1h-1zM223 23h1v1h-1zM7 24h1v1h-1zM19 24h2v1h-2zM36 24h1v1h-1zM39 24h3v1h-3zM58 24h1v1h-1zM3 25h1v1h-1zM44 25h1v1h-1zM207 25h1v1h-1zM1 26h1v1h-1zM6 26h1v1h-1zM12 26h1v1h-1zM33 26h1v1h-1zM52 26h1v1h-1zM70 26h1v1h-1zM123 26h2v1h-2zM222 26h1v1h-1zM3 27h1v1h-1zM12 27h1v1h-1zM24 27h1v1h-1zM26 27h1v1h-1zM29 27h1v1h-1zM53 27h1v1h-1zM56 27h1v1h-1zM116 27h1v1h-1zM141 27h1v1h-1zM143 27h1v1h-1zM156 27h1v1h-1zM164 27h1v1h-1zM177 27h1v1h-1zM205 27h1v1h-1zM3 28h2v1h-2zM9 28h1v1h-1zM153 28h1v1h-1zM187 28h1v1h-1zM212 28h1v1h-1zM218 28h1v1h-1zM1 29h1v1h-1zM13 29h2v1h-2zM55 29h1v1h-1zM106 29h1v1h-1zM139 29h1v1h-1zM144 29h1v1h-1z"/><path fill="#8f8f00" d="M77 0h1v1h-1zM116 0h1v1h-1zM151 0h1v1h-1zM158 0h1v1h-1zM162 0h1v1h-1zM171 0h1v1h-1zM186 0h1v1h-1zM199 0h1v1h-1zM209 0h1v1h-1zM211 0h1v1h-1zM213 0h1v1h-1zM219 0h1v1h-1zM110 1h1v1h-1zM131 1h1v1h-1zM143 1h1v1h-1zM148 1h1v1h-1zM154 1h1v1h-1zM158 1h1v1h-1zM183 1h1v1h-1zM185 1h1v1h-1zM220 1h1v1h-1zM225 1h1v1h-1zM227 1h2v1h-2zM235 1h2v1h-2zM66 2h1v1h-1zM68 2h1v1h-1zM89 2h1v1h-1zM101 2h1v1h-1zM109 2h1v1h-1zM135 2h2v1h-2zM138 2h1v1h-1zM150 2h1v1h-1zM153 2h1v1h-1zM156 2h1v1h-1zM161 2h1v1h-1zM196 2h1v1h-1zM206 2h1v1h-1zM220 2h1v1h-1zM227 2h2v1h-2zM231 2h1v1h-1zM88 3h1v1h-1zM98 3h1v1h-1zM126 3h1v1h-1zM132 3h1v1h-1zM154 3h1v1h-1zM205 3h1v1h-1zM229 3h1v1h-1zM67 4h1v1h-1zM70 4h1v1h-1zM88 4h1v1h-1zM95 4h1v1h-1zM127 4h1v1h-1zM141 4h1v1h-1zM159 4h1v1h-1zM164 4h1v1h-1zM239 4h1v1h-1zM8 5h1v1h-1zM82 5h1v1h-1zM89 5h1v1h-1zM93 5h1v1h-1zM138 5h1v1h-1zM150 5h1v1h-1zM188 5h1v1h-1zM215 5h1v1h-1zM232 5h1v1h-1zM37 6h1v1h-1zM90 6h1v1h-1zM122 6h1v1h-1zM130 6h1v1h-1zM147 6h1v1h-1zM181 6h1v1h-1zM184 6h1v1h-1zM204 6h1v1h-1zM104 7h1v1h-1zM114 7h1v1h-1zM187 7h1v1h-1zM199 7h1v1h-1zM205 7h1v1h-1zM70 8h2v1h-2zM86 8h1v1h-1zM100 8h1v1h-1zM111 8h1v1h-1zM115 8h1v1h-1zM118 8h1v1h-1zM130 8h1v1h-1zM148 8h1v1h-1zM161 8h1v1h-1zM202 8h1v1h-1zM223 8h1v1h-1zM237 8h1v1h-1zM74 9h1v1h-1zM107 9h1v1h-1zM158 9h1v1h-1zM170 9h1v1h-1zM178 9h1v1h-1zM196 9h1v1h-1zM238 9h1v1h-1zM124 10h1v1h-1zM213 10h1v1h-1zM164 12h1v1h-1zM216 12h1v1h-1zM25 13h1v1h-1zM67 13h1v1h-1zM90 13h1v1h-1zM96 13h1v1h-1zM98 13h1v1h-1zM106 13h1v1h-1zM120 13h2v1h-2zM134 13h1v1h-1zM146 13h1v1h-1zM153 13h1v1h-1zM160 13h1v1h-1zM166 13h1v1h-1zM173 13h1v1h-1zM204 13h1v1h-1zM224 13h1v1h-1zM228 13h1v1h-1zM236 13h1v1h-1zM45 15h1v1h-1zM47 15h1v1h-1zM69 15h1v1h-1zM122 15h1v1h-1zM124 15h1v1h-1zM158 15h1v1h-1zM184 15h1v1h-1zM208 15h1v1h-1zM236 15h1v1h-1zM6 16h1v1h-1zM31 16h1v1h-1zM34 16h1v1h-1zM53 16h1v1h-1zM58 16h1v1h-1zM76 17h1v1h-1zM96 17h1v1h-1zM104 17h1v1h-1zM118 17h1v1h-1zM141 17h1v1h-1zM169 17h1v1h-1zM220 17h1v1h-1zM222 17h1v1h-1zM225 17h1v1h-1zM4 18h1v1h-1zM54 18h1v1h-1zM121 18h1v1h-1zM233 18h1v1h-1zM20 19h1v1h-1zM45 19h1v1h-1zM60 19h1v1h-1zM73 19h1v1h-1zM105 19h1v1h-1zM9 20h1v1h-1zM14 20h1v1h-1zM18 20h1v1h-1zM37 20h1v1h-1zM45 20h1v1h-1zM117 20h1v1h-1zM149 20h1v1h-1zM180 20h1v1h-1zM25 21h1v1h-1zM34 21h1v1h-1zM48 21h1v1h-1zM219 21h1v1h-1zM138 22h1v1h-1zM163 22h1v1h-1zM199 22h1v1h-1zM8 23h2v1h-2zM57 23h1v1h-1zM173 23h1v1h-1zM231 23h1v1h-1zM34 24h1v1h-1zM53 24h2v1h-2zM88 24h1v1h-1zM135 24h1v1h-1zM216 24h1v1h-1zM95 25h1v1h-1zM22 26h1v1h-1zM26 26h1v1h-1zM67 26h1v1h-1zM87 26h1v1h-1zM126 26h1v1h-1zM154 26h1v1h-1zM27 27h1v1h-1zM31 27h1v1h-1zM40 27h1v1h-1zM61 27h1v1h-1zM106 27h1v1h-1zM146 27h1v1h-1zM149 27h1v1h-1zM193 27h1v1h-1zM0 28h1v1h-1zM19 28h1v1h-1zM21 28h1v1h-1zM36 28h1v1h-1zM47 28h1v1h-1zM62 28h1v1h-1zM108 28h1v1h-1zM138 28h1v1h-1zM159 28h1v1h-1zM4 29h1v1h-1zM17 29h1v1h-1zM26 29h1v1h-1zM33 29h2v1h-2zM45 29h2v1h-2zM61 29h1v1h-1zM196 29h1v1h-1z"/><path fill="#3d3d00" d="M94 0h1v1h-1zM100 0h1v1h-1zM104 0h1v1h-1zM120 0h1v1h-1zM125 0h1v1h-1zM132 0h2v1h-2zM136 0h1v1h-1zM139 0h1v1h-1zM149 0h1v1h-1zM184 0h2v1h-2zM194 0h1v1h-1zM207 0h1v1h-1zM223 0h1v1h-1zM233 0h1v1h-1zM73 1h1v1h-1zM80 1h1v1h-1zM114 1h1v1h-1zM117 1h1v1h-1zM137 1h1v1h-1zM141 1h1v1h-1zM181 1h1v1h-1zM186 1h1v1h-1zM193 1h2v1h-2zM222 1h1v1h-1z"/><path fill="#cccc00" d="M102 0h2v1h-2zM75 2h1v1h-1zM86 2h1v1h-1zM226 2h1v1h-1zM232 2h1v1h-1zM74 3h1v1h-1zM81 3h1v1h-1zM110 3h1v1h-1zM151 3h1v1h-1zM180 3h1v1h-1zM214 3h1v1h-1zM221 3h1v1h-1zM58 4h1v1h-1zM87 4h1v1h-1zM107 4h1v1h-1zM111 4h1v1h-1zM113 4h1v1h-1zM143 4h1v1h-1zM158 4h1v1h-1zM160 4h1v1h-1zM165 4h1v1h-1zM191 4h1v1h-1zM199 4h1v1h-1zM211 4h1v1h-1zM223 4h1v1h-1zM40 5h1v1h-1zM109 5h1v1h-1zM124 5h1v1h-1zM187 5h1v1h-1zM195 5h1v1h-1zM198 5h1v1h-1zM89 6h1v1h-1zM155 6h1v1h-1zM158 6h1v1h-1zM169 6h1v1h-1zM178 6h1v1h-1zM78 7h1v1h-1zM85 7h2v1h-2zM102 7h1v1h-1zM118 7h1v1h-1zM177 7h1v1h-1zM184 7h1v1h-1zM77 8h1v1h-1zM87 8h1v1h-1zM92 8h1v1h-1zM162 8h1v1h-1zM187 8h1v1h-1zM191 8h1v1h-1zM196 8h1v1h-1zM225 8h1v1h-1zM7 9h1v1h-1zM64 9h1v1h-1zM113 9h1v1h-1zM141 9h1v1h-1zM145 9h1v1h-1zM164 9h1v1h-1zM206 9h1v1h-1zM226 9h1v1h-1zM23 10h1v1h-1zM87 10h1v1h-1zM132 10h1v1h-1zM179 10h1v1h-1zM184 10h1v1h-1zM189 10h2v1h-2zM194 10h1v1h-1zM196 10h1v1h-1zM81 11h1v1h-1zM90 11h1v1h-1zM96 11h1v1h-1zM67 12h1v1h-1zM69 12h1v1h-1zM72 12h1v1h-1zM79 12h1v1h-1zM96 12h1v1h-1zM101 12h1v1h-1zM195 12h1v1h-1zM228 12h1v1h-1zM232 12h1v1h-1zM184 13h1v1h-1zM68 14h1v1h-1zM73 14h1v1h-1zM203 14h1v1h-1zM213 14h1v1h-1zM235 14h1v1h-1zM1 15h1v1h-1zM4 15h1v1h-1zM9 15h1v1h-1zM13 15h1v1h-1zM16 15h1v1h-1zM21 15h1v1h-1zM44 15h1v1h-1zM0 17h2v1h-2zM5 17h1v1h-1zM10 17h2v1h-2zM14 17h1v1h-1zM21 17h1v1h-1zM26 17h1v1h-1zM47 17h1v1h-1zM54 17h1v1h-1zM56 17h1v1h-1zM0 20h1v1h-1zM8 20h1v1h-1zM15 20h1v1h-1zM21 20h1v1h-1zM33 20h1v1h-1zM54 20h1v1h-1zM60 20h1v1h-1zM15 22h1v1h-1zM18 22h1v1h-1zM21 22h1v1h-1zM24 22h1v1h-1zM35 22h1v1h-1zM60 22h1v1h-1zM2 23h1v1h-1zM12 23h1v1h-1zM17 23h1v1h-1zM35 23h1v1h-1zM50 23h1v1h-1zM54 23h1v1h-1zM60 23h1v1h-1zM9 24h1v1h-1zM50 24h1v1h-1zM60 24h1v1h-1zM2 25h1v1h-1zM4 25h1v1h-1zM9 25h1v1h-1zM20 25h1v1h-1zM26 25h1v1h-1zM34 25h1v1h-1zM42 25h1v1h-1zM59 25h1v1h-1zM0 26h1v1h-1zM2 26h1v1h-1zM5 26h1v1h-1zM10 26h1v1h-1zM14 26h1v1h-1zM25 26h1v1h-1zM29 26h1v1h-1zM59 26h2v1h-2zM11 27h1v1h-1zM46 27h1v1h-1zM7 28h1v1h-1zM12 28h1v1h-1zM40 28h5v1h-5zM50 28h1v1h-1zM52 28h1v1h-1zM54 28h1v1h-1zM56 28h1v1h-1z"/><path fill="#a3a300" d="M168 0h1v1h-1zM23 2h1v1h-1zM67 2h1v1h-1zM73 2h1v1h-1zM83 2h1v1h-1zM85 2h1v1h-1zM87 2h1v1h-1zM90 2h1v1h-1zM93 2h1v1h-1zM96 2h1v1h-1zM110 2h1v1h-1zM120 2h1v1h-1zM151 2h1v1h-1zM159 2h1v1h-1zM213 2h1v1h-1zM218 2h1v1h-1zM71 3h1v1h-1zM102 3h1v1h-1zM150 3h1v1h-1zM159 3h2v1h-2zM191 3h1v1h-1zM194 3h1v1h-1zM204 3h1v1h-1zM218 3h1v1h-1zM238 3h1v1h-1zM66 4h1v1h-1zM83 4h1v1h-1zM112 4h1v1h-1zM119 4h1v1h-1zM154 4h1v1h-1zM171 4h2v1h-2zM190 4h1v1h-1zM205 4h1v1h-1zM209 4h1v1h-1zM233 4h1v1h-1zM5 5h1v1h-1zM68 5h1v1h-1zM111 5h1v1h-1zM132 5h1v1h-1zM134 5h1v1h-1zM136 5h1v1h-1zM205 5h1v1h-1zM225 5h1v1h-1zM72 6h2v1h-2zM112 6h1v1h-1zM123 6h1v1h-1zM131 6h1v1h-1zM157 6h1v1h-1zM210 6h1v1h-1zM80 7h1v1h-1zM93 7h1v1h-1zM105 7h1v1h-1zM122 7h1v1h-1zM140 7h1v1h-1zM164 7h1v1h-1zM183 7h1v1h-1zM236 7h1v1h-1zM8 8h1v1h-1zM12 8h1v1h-1zM33 8h1v1h-1zM79 8h1v1h-1zM81 8h1v1h-1zM141 8h1v1h-1zM154 8h2v1h-2zM164 8h1v1h-1zM172 8h1v1h-1zM177 8h1v1h-1zM200 8h1v1h-1zM69 9h1v1h-1zM72 9h1v1h-1zM122 9h1v1h-1zM130 9h1v1h-1zM143 9h1v1h-1zM147 9h1v1h-1zM151 9h1v1h-1zM186 9h1v1h-1zM189 9h1v1h-1zM192 9h1v1h-1zM211 9h1v1h-1zM218 9h1v1h-1zM229 9h1v1h-1zM103 10h1v1h-1zM122 10h1v1h-1zM164 10h1v1h-1zM166 10h1v1h-1zM175 10h1v1h-1zM63 11h1v1h-1zM78 11h1v1h-1zM95 11h1v1h-1zM115 11h1v1h-1zM144 11h1v1h-1zM224 11h1v1h-1zM231 11h1v1h-1zM86 12h1v1h-1zM100 12h1v1h-1zM116 12h1v1h-1zM205 12h1v1h-1zM33 13h1v1h-1zM39 13h1v1h-1zM59 13h1v1h-1zM101 13h1v1h-1zM205 13h1v1h-1zM220 13h1v1h-1zM175 14h1v1h-1zM187 14h1v1h-1zM19 15h1v1h-1zM34 15h1v1h-1zM36 15h1v1h-1zM48 15h1v1h-1zM60 15h1v1h-1zM87 15h1v1h-1zM164 15h1v1h-1zM174 15h1v1h-1zM203 15h1v1h-1zM228 15h1v1h-1zM233 15h2v1h-2zM2 16h1v1h-1zM9 16h1v1h-1zM22 16h1v1h-1zM45 16h1v1h-1zM9 17h1v1h-1zM13 17h1v1h-1zM17 17h1v1h-1zM20 17h1v1h-1zM27 17h1v1h-1zM32 17h1v1h-1zM35 17h1v1h-1zM40 17h1v1h-1zM53 17h1v1h-1zM67 17h1v1h-1zM83 17h1v1h-1zM89 17h1v1h-1zM92 17h1v1h-1zM95 17h1v1h-1zM112 17h1v1h-1zM115 17h1v1h-1zM121 17h1v1h-1zM138 17h2v1h-2zM164 17h1v1h-1zM181 17h1v1h-1zM219 17h1v1h-1zM9 18h1v1h-1zM11 18h1v1h-1zM30 18h1v1h-1zM56 18h1v1h-1zM21 19h1v1h-1zM25 19h1v1h-1zM48 19h1v1h-1zM55 19h1v1h-1zM100 19h1v1h-1zM151 19h1v1h-1zM154 19h1v1h-1zM197 19h1v1h-1zM201 19h1v1h-1zM11 20h1v1h-1zM13 20h1v1h-1zM17 20h1v1h-1zM27 20h2v1h-2zM38 20h1v1h-1zM41 20h1v1h-1zM76 20h1v1h-1zM94 20h1v1h-1zM147 20h1v1h-1zM0 21h1v1h-1zM5 21h1v1h-1zM10 21h1v1h-1zM16 21h1v1h-1zM20 21h1v1h-1zM28 21h2v1h-2zM46 21h1v1h-1zM50 21h1v1h-1zM0 22h1v1h-1zM2 22h1v1h-1zM9 22h1v1h-1zM58 22h1v1h-1zM80 22h1v1h-1zM197 22h1v1h-1zM25 23h2v1h-2zM31 23h1v1h-1zM53 23h1v1h-1zM67 23h1v1h-1zM10 24h1v1h-1zM18 24h1v1h-1zM21 24h1v1h-1zM57 24h1v1h-1zM61 24h1v1h-1zM142 24h1v1h-1zM175 24h1v1h-1zM17 25h1v1h-1zM35 25h2v1h-2zM137 27h1v1h-1zM151 27h1v1h-1zM163 27h1v1h-1zM165 27h1v1h-1zM194 27h1v1h-1zM8 28h1v1h-1zM58 28h1v1h-1zM61 28h1v1h-1zM88 28h1v1h-1zM172 28h1v1h-1zM194 28h1v1h-1zM206 28h2v1h-2zM222 28h1v1h-1zM27 29h1v1h-1zM36 29h1v1h-1zM53 29h1v1h-1zM80 29h1v1h-1zM100 29h1v1h-1zM104 29h1v1h-1zM120 29h1v1h-1zM174 29h1v1h-1zM197 29h1v1h-1z"/><path fill="#cc00cc" d="M2 1h1v1h-1zM85 22h1v1h-1zM130 22h1v1h-1zM149 22h1v1h-1zM168 22h1v1h-1zM195 25h1v1h-1zM200 25h1v1h-1zM237 25h1v1h-1z"/><path fill="#b800b8" d="M17 1h1v1h-1zM24 1h1v1h-1zM49 1h1v1h-1zM68 22h1v1h-1zM198 22h1v1h-1zM77 25h1v1h-1z"/><path fill="#b8b800" d="M70 1h1v1h-1zM230 1h1v1h-1zM165 2h1v1h-1zM207 2h1v1h-1zM94 3h1v1h-1zM96 3h1v1h-1zM122 3h1v1h-1zM155 3h1v1h-1zM226 3h1v1h-1zM227 4h1v1h-1zM235 4h1v1h-1zM66 5h1v1h-1zM85 5h1v1h-1zM90 5h1v1h-1zM103 5h1v1h-1zM105 5h2v1h-2zM108 5h1v1h-1zM196 5h1v1h-1zM201 5h1v1h-1zM207 5h1v1h-1zM51 6h1v1h-1zM69 6h1v1h-1zM113 6h1v1h-1zM125 6h1v1h-1zM141 6h1v1h-1zM146 6h1v1h-1zM154 6h1v1h-1zM160 6h1v1h-1zM162 6h1v1h-1zM74 7h1v1h-1zM91 7h1v1h-1zM121 7h1v1h-1zM124 7h1v1h-1zM144 7h1v1h-1zM197 7h1v1h-1zM208 7h1v1h-1zM212 7h1v1h-1zM227 7h1v1h-1zM234 7h1v1h-1zM44 8h1v1h-1zM72 8h1v1h-1zM83 8h1v1h-1zM95 8h1v1h-1zM165 8h1v1h-1zM188 8h1v1h-1zM222 8h1v1h-1zM234 8h1v1h-1zM239 8h1v1h-1zM77 9h1v1h-1zM102 9h1v1h-1zM131 9h1v1h-1zM148 9h1v1h-1zM205 9h1v1h-1zM230 9h1v1h-1zM65 10h1v1h-1zM71 10h1v1h-1zM80 10h1v1h-1zM95 10h1v1h-1zM153 10h1v1h-1zM158 10h1v1h-1zM181 10h1v1h-1zM207 10h1v1h-1zM216 10h1v1h-1zM67 11h1v1h-1zM76 11h1v1h-1zM105 11h1v1h-1zM113 11h2v1h-2zM194 11h1v1h-1zM227 11h1v1h-1zM230 11h1v1h-1zM80 12h1v1h-1zM85 12h1v1h-1zM93 12h1v1h-1zM145 12h1v1h-1zM154 12h1v1h-1zM111 14h1v1h-1zM132 14h1v1h-1zM157 14h1v1h-1zM184 14h1v1h-1zM208 14h1v1h-1zM214 14h1v1h-1z"/><path fill="#e0e000" d="M103 2h1v1h-1zM128 2h1v1h-1zM214 2h1v1h-1zM70 3h1v1h-1zM83 3h1v1h-1zM92 3h1v1h-1zM109 3h1v1h-1zM134 3h1v1h-1zM206 3h1v1h-1zM217 3h1v1h-1zM232 3h1v1h-1zM8 4h1v1h-1zM73 4h2v1h-2zM109 4h1v1h-1zM138 4h1v1h-1zM198 4h1v1h-1zM212 4h1v1h-1zM221 4h1v1h-1zM232 4h1v1h-1zM65 5h1v1h-1zM67 5h1v1h-1zM79 5h1v1h-1zM157 5h1v1h-1zM189 5h1v1h-1zM191 5h1v1h-1zM197 5h1v1h-1zM219 5h1v1h-1zM71 6h1v1h-1zM82 6h1v1h-1zM186 6h1v1h-1zM195 6h1v1h-1zM227 6h1v1h-1zM229 6h1v1h-1zM82 7h1v1h-1zM103 7h1v1h-1zM119 7h1v1h-1zM123 7h1v1h-1zM130 7h1v1h-1zM179 7h1v1h-1zM30 8h1v1h-1zM93 8h1v1h-1zM97 8h1v1h-1zM126 8h1v1h-1zM176 8h1v1h-1zM180 8h1v1h-1zM205 8h1v1h-1zM236 8h1v1h-1zM65 9h1v1h-1zM83 9h1v1h-1zM93 9h1v1h-1zM108 9h1v1h-1zM111 9h1v1h-1zM228 9h1v1h-1zM50 10h1v1h-1zM108 10h1v1h-1zM121 10h1v1h-1zM135 10h1v1h-1zM154 10h1v1h-1zM169 10h1v1h-1zM205 10h1v1h-1zM220 10h1v1h-1zM238 10h1v1h-1zM65 11h1v1h-1zM69 11h1v1h-1zM75 11h1v1h-1zM77 11h1v1h-1zM80 11h1v1h-1zM92 11h1v1h-1zM109 11h1v1h-1zM117 11h1v1h-1zM156 11h1v1h-1zM191 11h1v1h-1zM71 12h1v1h-1zM73 12h1v1h-1zM84 12h1v1h-1zM90 12h1v1h-1zM92 12h1v1h-1zM118 12h1v1h-1zM167 12h1v1h-1zM231 12h1v1h-1zM193 13h1v1h-1zM202 13h1v1h-1zM152 14h1v1h-1zM158 14h1v1h-1zM161 14h1v1h-1zM192 14h1v1h-1zM196 14h1v1h-1zM204 14h2v1h-2zM210 14h1v1h-1zM212 14h1v1h-1zM10 15h2v1h-2zM15 15h1v1h-1zM22 15h1v1h-1zM37 15h1v1h-1zM46 15h1v1h-1zM61 15h1v1h-1zM21 16h1v1h-1zM33 16h1v1h-1zM36 16h1v1h-1zM50 16h3v1h-3zM61 16h1v1h-1zM15 17h1v1h-1zM46 17h1v1h-1zM51 17h1v1h-1zM33 19h1v1h-1zM41 19h1v1h-1zM46 19h2v1h-2zM56 19h1v1h-1zM61 19h1v1h-1zM5 20h2v1h-2zM10 20h1v1h-1zM23 20h1v1h-1zM26 20h1v1h-1zM34 20h1v1h-1zM39 20h1v1h-1zM55 20h2v1h-2zM4 21h1v1h-1zM6 21h1v1h-1zM8 21h1v1h-1zM12 21h1v1h-1zM19 21h1v1h-1zM32 21h1v1h-1zM44 21h1v1h-1zM52 21h1v1h-1zM60 21h1v1h-1zM4 22h1v1h-1zM10 22h1v1h-1zM17 22h1v1h-1zM23 22h1v1h-1zM26 22h1v1h-1zM31 22h1v1h-1zM39 22h1v1h-1zM41 22h1v1h-1zM47 22h1v1h-1zM14 23h2v1h-2zM23 23h1v1h-1zM49 23h1v1h-1zM52 23h1v1h-1zM2 24h1v1h-1zM8 24h1v1h-1zM12 24h1v1h-1zM14 24h1v1h-1zM22 24h1v1h-1zM24 24h3v1h-3zM28 24h1v1h-1zM30 24h1v1h-1zM35 24h1v1h-1zM38 24h1v1h-1zM43 24h1v1h-1zM59 24h1v1h-1zM12 25h1v1h-1zM15 25h1v1h-1zM22 25h1v1h-1zM49 25h1v1h-1zM53 25h1v1h-1zM56 25h1v1h-1zM23 26h1v1h-1zM37 26h3v1h-3zM42 26h1v1h-1zM58 26h1v1h-1zM61 26h1v1h-1zM2 27h1v1h-1zM8 27h1v1h-1zM14 27h1v1h-1zM17 27h1v1h-1zM21 27h1v1h-1zM30 27h1v1h-1zM41 27h1v1h-1zM44 27h1v1h-1zM50 27h1v1h-1zM52 27h1v1h-1zM54 27h1v1h-1zM10 28h1v1h-1zM23 28h1v1h-1zM46 28h1v1h-1zM48 28h2v1h-2zM55 28h1v1h-1zM60 28h1v1h-1zM12 29h1v1h-1zM24 29h1v1h-1zM32 29h1v1h-1zM42 29h1v1h-1zM48 29h1v1h-1zM50 29h1v1h-1zM60 29h1v1h-1z"/></g><rect x="953.2" y="647.6" width="20.5" height="103.19999999999993" fill="url(#cb)"/><path d="M953.2 657.9h4M969.7 657.9h4" stroke="#fff" stroke-width="0.8"/><text x="981.2" y="662.8" font-size="11" fill="#111">2</text><path d="M953.2 678.6h4M969.7 678.6h4" stroke="#fff" stroke-width="0.8"/><text x="981.2" y="683.5" font-size="11" fill="#111">1</text><path d="M953.2 699.2h4M969.7 699.2h4" stroke="#fff" stroke-width="0.8"/><text x="981.2" y="704.1" font-size="11" fill="#111">0</text><path d="M953.2 719.8h4M969.7 719.8h4" stroke="#fff" stroke-width="0.8"/><text x="981.2" y="724.7" font-size="11" fill="#111">-1</text><path d="M953.2 740.5h4M969.7 740.5h4" stroke="#fff" stroke-width="0.8"/><text x="981.2" y="745.4" font-size="11" fill="#111">-2</text><g font-size="11" fill="#4d4d4d" text-anchor="end"><text x="1068.3" y="613.4">CD79A</text><text x="1068.3" y="619.4">MS4A1</text><text x="1068.3" y="625.5">TCL1A</text><text x="1068.3" y="631.5">HLA-DQA1</text><text x="1068.3" y="637.5">HLA-DRA</text><text x="1068.3" y="643.6">HLA-DQB1</text><text x="1068.3" y="649.6">LINC00926</text><text x="1068.3" y="655.6">CD79B</text><text x="1068.3" y="661.7">HLA-DRB1</text><text x="1068.3" y="667.7">CD74</text><text x="1068.3" y="673.7">HLA-DPB1</text><text x="1068.3" y="679.7">HLA-DMA</text><text x="1068.3" y="685.8">HLA-DQA2</text><text x="1068.3" y="691.8">HLA-DRB5</text><text x="1068.3" y="697.8">HLA-DPA1</text><text x="1068.3" y="703.9">XCL2</text><text x="1068.3" y="709.9">CCL5</text><text x="1068.3" y="715.9">CD247</text><text x="1068.3" y="722.0">CLIC3</text><text x="1068.3" y="728.0">FCGR3A</text><text x="1068.3" y="734.0">AKR1C3</text><text x="1068.3" y="740.0">SPON2</text><text x="1068.3" y="746.1">GZMH</text><text x="1068.3" y="752.1">GNLY</text><text x="1068.3" y="758.1">CTSW</text><text x="1068.3" y="764.2">FGFBP2</text><text x="1068.3" y="770.2">GZMB</text><text x="1068.3" y="776.2">GZMA</text><text x="1068.3" y="782.3">PRF1</text><text x="1068.3" y="788.3">NKG7</text></g><rect x="1074.8" y="605.6" width="278.2" height="180.9" fill="#2a0430"/><g transform="translate(1074.8 605.6) scale(1.15917 6.03000)"><path fill="#2a002a" d="M0 0h208v1.03h-208zM0 1h208v1.03h-208zM0 12h208v1.03h-208z"/><path fill="#ebeb00" d="M208 0h32v1.03h-32zM208 2h32v1.03h-32zM208 3h32v1.03h-32zM208 5h32v1.03h-32zM208 6h32v1.03h-32zM208 12h32v1.03h-32z"/><path fill="#e0e000" d="M208 1h32v1.03h-32zM208 7h32v1.03h-32zM0 17h12v1.03h-12zM0 18h31v1.03h-31zM0 19h24v1.03h-24zM0 20h22v1.03h-22zM0 21h14v1.03h-14zM0 22h24v1.03h-24zM0 23h22v1.03h-22zM0 24h24v1.03h-24zM0 25h24v1.03h-24zM0 26h24v1.03h-24zM0 27h26v1.03h-26zM0 28h26v1.03h-26zM0 29h24v1.03h-24z"/><path fill="#220022" d="M0 2h208v1.03h-208zM0 6h208v1.03h-208zM14 21h15v1.03h-15zM29 21h211v1.03h-211zM24 22h17v1.03h-17zM41 22h199v1.03h-199zM24 25h14v1.03h-14zM38 25h202v1.03h-202z"/><path fill="#4a004a" d="M0 3h208v1.03h-208zM0 5h208v1.03h-208zM0 7h208v1.03h-208zM0 11h208v1.03h-208zM12 17h19v1.03h-19zM31 17h209v1.03h-209zM31 18h22v1.03h-22zM53 18h187v1.03h-187zM24 24h29v1.03h-29zM53 24h187v1.03h-187z"/><path fill="#7a007a" d="M0 4h208v1.03h-208z"/><path fill="#999900" d="M208 4h32v1.03h-32zM208 10h32v1.03h-32z"/><path fill="#6a006a" d="M0 8h208v1.03h-208zM0 10h208v1.03h-208zM0 14h208v1.03h-208z"/><path fill="#8f8f00" d="M208 8h32v1.03h-32zM208 9h32v1.03h-32z"/><path fill="#3d003d" d="M0 9h208v1.03h-208z"/><path fill="#c2c200" d="M208 11h32v1.03h-32z"/><path fill="#5a005a" d="M0 13h208v1.03h-208z"/><path fill="#b8b800" d="M208 13h32v1.03h-32z"/><path fill="#adad00" d="M208 14h32v1.03h-32z"/><path fill="#1f001f" d="M0 15h14v1.03h-14zM14 15h226v1.03h-226z"/><path fill="#0a000a" d="M0 16h240v1.03h-240z"/><path fill="#330033" d="M24 19h29v1.03h-29zM53 19h187v1.03h-187zM22 23h26v1.03h-26zM48 23h192v1.03h-192zM26 27h27v1.03h-27zM53 27h187v1.03h-187zM26 28h27v1.03h-27zM53 28h187v1.03h-187z"/><path fill="#290029" d="M22 20h16v1.03h-16zM38 20h202v1.03h-202zM24 26h14v1.03h-14zM38 26h202v1.03h-202z"/><path fill="#3a003a" d="M24 29h29v1.03h-29zM53 29h187v1.03h-187z"/><path fill="#a3a300" d="M26 0h1v1h-1zM210 0h2v1h-2zM214 0h1v1h-1zM221 0h1v1h-1zM232 0h1v1h-1zM232 1h1v1h-1zM234 1h1v1h-1zM52 2h1v1h-1zM223 2h1v1h-1zM226 2h1v1h-1zM28 3h1v1h-1zM74 3h1v1h-1zM85 3h1v1h-1zM92 3h1v1h-1zM94 3h1v1h-1zM141 3h1v1h-1zM212 3h1v1h-1zM30 4h1v1h-1zM37 4h1v1h-1zM42 4h1v1h-1zM59 4h1v1h-1zM148 4h1v1h-1zM172 4h1v1h-1zM2 5h1v1h-1zM25 5h1v1h-1zM38 5h1v1h-1zM41 5h1v1h-1zM61 5h1v1h-1zM128 5h1v1h-1zM180 5h1v1h-1zM201 5h1v1h-1zM238 5h1v1h-1zM211 6h1v1h-1zM217 6h1v1h-1zM2 7h1v1h-1zM22 7h1v1h-1zM39 7h1v1h-1zM65 7h1v1h-1zM81 7h1v1h-1zM109 7h1v1h-1zM125 7h1v1h-1zM137 7h2v1h-2zM145 7h1v1h-1zM159 7h1v1h-1zM169 7h1v1h-1zM184 7h1v1h-1zM226 7h1v1h-1zM233 7h1v1h-1zM238 7h1v1h-1zM8 8h1v1h-1zM23 8h1v1h-1zM25 8h1v1h-1zM28 8h1v1h-1zM68 8h1v1h-1zM93 8h1v1h-1zM100 8h1v1h-1zM117 8h1v1h-1zM133 8h1v1h-1zM151 8h1v1h-1zM189 8h1v1h-1zM7 9h1v1h-1zM19 9h1v1h-1zM60 9h1v1h-1zM67 9h1v1h-1zM99 9h1v1h-1zM111 9h1v1h-1zM128 9h1v1h-1zM140 9h1v1h-1zM181 9h1v1h-1zM185 9h1v1h-1zM12 10h1v1h-1zM14 10h1v1h-1zM40 10h1v1h-1zM59 10h1v1h-1zM62 10h1v1h-1zM117 10h1v1h-1zM143 10h1v1h-1zM159 10h1v1h-1zM161 10h1v1h-1zM172 10h1v1h-1zM203 10h1v1h-1zM14 11h2v1h-2zM40 11h1v1h-1zM69 11h1v1h-1zM111 11h1v1h-1zM113 11h1v1h-1zM156 11h1v1h-1zM160 11h1v1h-1zM165 11h1v1h-1zM185 11h1v1h-1zM198 11h1v1h-1zM201 11h1v1h-1zM205 11h1v1h-1zM220 11h1v1h-1zM238 11h1v1h-1zM229 12h1v1h-1zM238 12h1v1h-1zM24 13h1v1h-1zM32 13h1v1h-1zM45 13h1v1h-1zM51 13h1v1h-1zM65 13h1v1h-1zM85 13h1v1h-1zM88 13h1v1h-1zM105 13h2v1h-2zM117 13h1v1h-1zM121 13h1v1h-1zM123 13h3v1h-3zM214 13h2v1h-2zM230 13h2v1h-2zM238 13h1v1h-1zM31 14h1v1h-1zM50 14h1v1h-1zM85 14h1v1h-1zM99 14h1v1h-1zM104 14h1v1h-1zM112 14h2v1h-2zM121 14h1v1h-1zM146 14h1v1h-1zM165 14h1v1h-1zM167 14h1v1h-1zM169 14h1v1h-1zM197 14h1v1h-1zM201 14h1v1h-1zM81 16h1v1h-1zM196 16h1v1h-1zM4 17h1v1h-1zM34 17h1v1h-1zM47 17h1v1h-1zM66 17h1v1h-1zM100 17h1v1h-1zM143 17h1v1h-1zM155 17h1v1h-1zM162 17h1v1h-1zM164 17h1v1h-1zM185 17h1v1h-1zM220 17h1v1h-1zM1 18h1v1h-1zM5 18h1v1h-1zM10 18h1v1h-1zM35 18h1v1h-1zM46 18h1v1h-1zM78 18h1v1h-1zM105 18h1v1h-1zM141 18h1v1h-1zM152 18h1v1h-1zM238 18h1v1h-1zM14 19h1v1h-1zM31 19h1v1h-1zM46 19h1v1h-1zM157 19h1v1h-1zM44 20h1v1h-1zM230 20h1v1h-1zM13 21h1v1h-1zM15 21h1v1h-1zM1 22h3v1h-3zM10 23h1v1h-1zM19 23h1v1h-1zM33 23h1v1h-1zM37 23h1v1h-1zM62 23h1v1h-1zM79 23h1v1h-1zM123 23h1v1h-1zM136 23h1v1h-1zM151 23h1v1h-1zM168 23h1v1h-1zM205 23h1v1h-1zM212 23h1v1h-1zM12 24h1v1h-1zM21 24h1v1h-1zM48 24h1v1h-1zM55 24h1v1h-1zM63 24h1v1h-1zM68 24h1v1h-1zM76 24h1v1h-1zM85 24h1v1h-1zM103 24h1v1h-1zM137 24h1v1h-1zM141 24h2v1h-2zM149 24h1v1h-1zM158 24h2v1h-2zM210 24h1v1h-1zM6 25h1v1h-1zM37 25h1v1h-1zM2 26h1v1h-1zM5 26h1v1h-1zM7 26h1v1h-1zM27 26h1v1h-1zM17 27h1v1h-1zM20 27h1v1h-1zM45 27h1v1h-1zM220 27h1v1h-1zM223 27h1v1h-1zM15 28h1v1h-1zM26 28h1v1h-1zM95 28h1v1h-1zM230 28h1v1h-1zM2 29h2v1h-2zM5 29h1v1h-1zM116 29h1v1h-1zM176 29h1v1h-1zM220 29h1v1h-1z"/><path fill="#f5f500" d="M34 0h1v1h-1zM100 0h1v1h-1zM133 0h1v1h-1zM156 0h1v1h-1zM211 1h2v1h-2zM228 1h1v1h-1zM236 1h1v1h-1zM138 2h1v1h-1zM215 4h1v1h-1zM234 4h1v1h-1zM71 5h1v1h-1zM90 5h1v1h-1zM100 5h1v1h-1zM179 5h1v1h-1zM185 5h1v1h-1zM17 7h1v1h-1zM199 7h1v1h-1zM223 7h1v1h-1zM227 7h1v1h-1zM230 7h1v1h-1zM236 7h1v1h-1zM17 8h1v1h-1zM47 8h1v1h-1zM54 8h1v1h-1zM97 8h1v1h-1zM217 8h1v1h-1zM228 8h1v1h-1zM238 8h1v1h-1zM210 9h1v1h-1zM219 9h1v1h-1zM234 9h1v1h-1zM239 9h1v1h-1zM124 10h1v1h-1zM210 10h1v1h-1zM220 10h1v1h-1zM228 10h1v1h-1zM232 10h1v1h-1zM239 10h1v1h-1zM23 11h1v1h-1zM96 11h1v1h-1zM110 11h1v1h-1zM149 11h1v1h-1zM211 11h1v1h-1zM24 12h2v1h-2zM52 12h1v1h-1zM72 12h1v1h-1zM155 12h1v1h-1zM190 12h1v1h-1zM202 12h1v1h-1zM23 13h1v1h-1zM120 13h1v1h-1zM127 13h1v1h-1zM137 13h1v1h-1zM208 13h1v1h-1zM219 13h1v1h-1zM2 14h1v1h-1zM156 14h1v1h-1zM210 14h1v1h-1zM213 14h1v1h-1zM221 14h1v1h-1zM226 14h1v1h-1zM232 14h1v1h-1zM8 15h1v1h-1zM11 15h1v1h-1zM2 17h1v1h-1zM15 17h1v1h-1zM17 17h1v1h-1zM25 17h1v1h-1zM57 17h1v1h-1zM62 17h1v1h-1zM157 17h1v1h-1zM37 18h1v1h-1zM196 18h1v1h-1zM213 18h1v1h-1zM217 18h1v1h-1zM3 19h1v1h-1zM17 19h1v1h-1zM22 19h1v1h-1zM28 19h1v1h-1zM30 19h1v1h-1zM48 19h1v1h-1zM131 19h1v1h-1zM7 20h1v1h-1zM45 20h1v1h-1zM75 20h1v1h-1zM154 20h1v1h-1zM5 21h1v1h-1zM10 21h2v1h-2zM16 21h1v1h-1zM20 21h1v1h-1zM25 21h1v1h-1zM70 21h1v1h-1zM32 22h1v1h-1zM79 22h1v1h-1zM16 23h1v1h-1zM21 23h1v1h-1zM22 23h1v1h-1zM38 23h1v1h-1zM40 23h1v1h-1zM43 23h2v1h-2zM65 23h1v1h-1zM15 24h1v1h-1zM28 24h1v1h-1zM30 24h1v1h-1zM44 24h1v1h-1zM26 25h1v1h-1zM74 25h1v1h-1zM126 25h1v1h-1zM222 25h1v1h-1zM4 26h1v1h-1zM29 26h1v1h-1zM31 26h1v1h-1zM35 26h1v1h-1zM6 27h1v1h-1zM22 27h1v1h-1zM49 27h1v1h-1zM124 27h1v1h-1zM127 27h1v1h-1zM204 27h1v1h-1zM215 27h1v1h-1zM235 27h1v1h-1zM17 28h1v1h-1zM44 28h1v1h-1zM18 29h1v1h-1zM28 29h1v1h-1zM39 29h1v1h-1zM47 29h1v1h-1zM121 29h1v1h-1z"/><path fill="#e0e000" d="M67 0h1v1h-1zM124 0h1v1h-1zM203 0h1v1h-1zM32 1h1v1h-1zM36 1h1v1h-1zM170 1h1v1h-1zM192 1h1v1h-1zM6 2h1v1h-1zM110 2h1v1h-1zM120 2h1v1h-1zM185 2h1v1h-1zM127 3h1v1h-1zM184 3h1v1h-1zM3 5h1v1h-1zM117 5h1v1h-1zM151 5h1v1h-1zM173 5h1v1h-1zM100 7h1v1h-1zM112 7h1v1h-1zM142 8h1v1h-1zM146 8h1v1h-1zM231 8h1v1h-1zM17 9h1v1h-1zM202 9h1v1h-1zM214 9h1v1h-1zM221 9h2v1h-2zM235 9h1v1h-1zM116 10h1v1h-1zM211 10h1v1h-1zM215 10h1v1h-1zM218 10h1v1h-1zM234 10h1v1h-1zM236 10h1v1h-1zM35 11h1v1h-1zM55 11h1v1h-1zM63 11h1v1h-1zM81 11h1v1h-1zM87 11h1v1h-1zM89 11h1v1h-1zM124 11h1v1h-1zM127 11h1v1h-1zM169 11h1v1h-1zM210 11h1v1h-1zM212 11h1v1h-1zM218 11h2v1h-2zM227 11h1v1h-1zM230 11h1v1h-1zM7 12h1v1h-1zM117 12h1v1h-1zM124 12h1v1h-1zM127 12h1v1h-1zM163 12h1v1h-1zM168 12h1v1h-1zM46 13h1v1h-1zM50 13h1v1h-1zM81 13h1v1h-1zM96 13h1v1h-1zM212 13h1v1h-1zM226 13h1v1h-1zM228 13h1v1h-1zM232 13h1v1h-1zM3 14h1v1h-1zM94 14h1v1h-1zM224 14h1v1h-1zM229 14h1v1h-1zM4 15h1v1h-1zM6 15h1v1h-1zM10 15h1v1h-1zM12 15h2v1h-2zM78 15h1v1h-1zM20 17h1v1h-1zM68 17h1v1h-1zM41 18h1v1h-1zM43 18h1v1h-1zM45 18h1v1h-1zM47 18h1v1h-1zM210 18h1v1h-1zM35 19h1v1h-1zM39 19h1v1h-1zM42 19h2v1h-2zM207 19h1v1h-1zM34 20h1v1h-1zM56 20h1v1h-1zM196 20h1v1h-1zM14 21h1v1h-1zM19 21h1v1h-1zM22 21h2v1h-2zM223 21h1v1h-1zM218 22h1v1h-1zM42 23h1v1h-1zM41 24h1v1h-1zM47 24h1v1h-1zM29 25h1v1h-1zM34 25h1v1h-1zM173 25h1v1h-1zM46 26h1v1h-1zM48 27h1v1h-1zM137 27h1v1h-1zM147 27h1v1h-1zM28 28h1v1h-1zM35 28h1v1h-1zM40 28h1v1h-1zM42 28h1v1h-1zM48 28h1v1h-1zM75 28h1v1h-1zM139 28h1v1h-1zM166 28h1v1h-1zM223 28h1v1h-1zM26 29h1v1h-1zM45 29h1v1h-1zM79 29h1v1h-1zM172 29h1v1h-1zM236 29h1v1h-1zM238 29h1v1h-1z"/><path fill="#cccc00" d="M78 0h1v1h-1zM110 0h1v1h-1zM147 0h1v1h-1zM201 0h1v1h-1zM208 0h1v1h-1zM217 0h3v1h-3zM229 0h2v1h-2zM102 1h1v1h-1zM194 1h1v1h-1zM216 1h1v1h-1zM218 1h1v1h-1zM221 1h1v1h-1zM223 1h1v1h-1zM227 1h1v1h-1zM230 1h1v1h-1zM235 1h1v1h-1zM238 1h1v1h-1zM92 2h1v1h-1zM175 2h1v1h-1zM209 2h1v1h-1zM212 2h1v1h-1zM215 2h1v1h-1zM220 2h1v1h-1zM224 2h1v1h-1zM3 3h1v1h-1zM62 3h1v1h-1zM146 3h1v1h-1zM165 3h1v1h-1zM213 3h1v1h-1zM219 3h1v1h-1zM223 3h1v1h-1zM228 3h1v1h-1zM230 3h3v1h-3zM234 3h1v1h-1zM238 3h1v1h-1zM231 4h1v1h-1zM4 5h1v1h-1zM58 5h1v1h-1zM145 5h1v1h-1zM155 5h1v1h-1zM216 5h1v1h-1zM224 5h2v1h-2zM228 5h1v1h-1zM230 5h1v1h-1zM234 5h4v1h-4zM212 6h1v1h-1zM214 6h1v1h-1zM220 6h1v1h-1zM224 6h1v1h-1zM228 6h1v1h-1zM232 6h1v1h-1zM234 6h1v1h-1zM239 6h1v1h-1zM76 7h1v1h-1zM171 7h1v1h-1zM212 7h1v1h-1zM215 7h1v1h-1zM225 7h1v1h-1zM109 8h1v1h-1zM147 8h1v1h-1zM213 8h1v1h-1zM221 8h1v1h-1zM168 9h1v1h-1zM236 9h1v1h-1zM114 10h1v1h-1zM209 10h1v1h-1zM216 10h1v1h-1zM227 10h1v1h-1zM139 11h1v1h-1zM187 11h1v1h-1zM191 11h1v1h-1zM16 12h1v1h-1zM105 12h1v1h-1zM138 12h1v1h-1zM145 12h1v1h-1zM153 12h1v1h-1zM209 12h1v1h-1zM211 12h1v1h-1zM213 12h1v1h-1zM218 12h1v1h-1zM221 12h1v1h-1zM227 12h1v1h-1zM234 12h2v1h-2zM100 13h1v1h-1zM176 13h1v1h-1zM197 13h1v1h-1zM182 14h1v1h-1zM2 15h1v1h-1zM75 16h1v1h-1zM6 17h1v1h-1zM13 17h1v1h-1zM23 17h1v1h-1zM60 17h1v1h-1zM2 18h1v1h-1zM14 18h1v1h-1zM38 18h1v1h-1zM25 19h2v1h-2zM33 19h1v1h-1zM40 19h1v1h-1zM51 19h1v1h-1zM141 19h1v1h-1zM182 19h1v1h-1zM188 19h2v1h-2zM195 19h1v1h-1zM201 19h1v1h-1zM2 20h1v1h-1zM11 20h1v1h-1zM15 20h1v1h-1zM17 20h1v1h-1zM32 20h1v1h-1zM96 20h1v1h-1zM147 20h1v1h-1zM194 20h1v1h-1zM207 20h1v1h-1zM17 21h1v1h-1zM21 21h1v1h-1zM8 22h1v1h-1zM13 22h1v1h-1zM36 22h2v1h-2zM9 23h1v1h-1zM23 23h1v1h-1zM5 24h1v1h-1zM16 24h1v1h-1zM25 24h1v1h-1zM34 24h1v1h-1zM42 24h1v1h-1zM2 25h1v1h-1zM19 25h1v1h-1zM23 25h1v1h-1zM31 25h2v1h-2zM6 26h1v1h-1zM10 26h1v1h-1zM12 26h1v1h-1zM17 26h1v1h-1zM22 26h1v1h-1zM45 26h1v1h-1zM4 27h1v1h-1zM7 27h1v1h-1zM12 27h1v1h-1zM24 27h1v1h-1zM27 27h1v1h-1zM42 27h1v1h-1zM46 27h1v1h-1zM101 27h1v1h-1zM176 27h1v1h-1zM201 27h1v1h-1zM236 27h1v1h-1zM8 28h1v1h-1zM11 28h1v1h-1zM52 28h1v1h-1zM79 28h1v1h-1zM149 28h1v1h-1zM153 28h1v1h-1zM235 28h1v1h-1zM40 29h1v1h-1zM42 29h1v1h-1zM49 29h1v1h-1z"/><path fill="#b8b800" d="M138 0h1v1h-1zM161 0h1v1h-1zM223 0h1v1h-1zM225 0h1v1h-1zM228 0h1v1h-1zM238 0h1v1h-1zM42 1h1v1h-1zM110 1h1v1h-1zM209 1h1v1h-1zM220 1h1v1h-1zM224 1h1v1h-1zM226 1h1v1h-1zM108 2h1v1h-1zM208 2h1v1h-1zM216 2h1v1h-1zM221 2h1v1h-1zM225 2h1v1h-1zM230 2h1v1h-1zM236 2h1v1h-1zM238 2h1v1h-1zM142 3h1v1h-1zM182 3h1v1h-1zM221 3h2v1h-2zM229 3h1v1h-1zM235 3h1v1h-1zM110 4h1v1h-1zM75 5h1v1h-1zM136 5h1v1h-1zM157 5h1v1h-1zM209 5h1v1h-1zM226 5h1v1h-1zM215 6h1v1h-1zM223 6h1v1h-1zM238 6h1v1h-1zM42 7h1v1h-1zM82 7h1v1h-1zM213 7h1v1h-1zM220 7h3v1h-3zM224 7h1v1h-1zM234 7h1v1h-1zM138 8h1v1h-1zM198 8h1v1h-1zM81 9h1v1h-1zM100 9h1v1h-1zM146 9h1v1h-1zM75 10h1v1h-1zM88 10h1v1h-1zM26 11h1v1h-1zM42 11h1v1h-1zM75 11h1v1h-1zM99 11h2v1h-2zM116 11h1v1h-1zM143 11h1v1h-1zM147 11h1v1h-1zM150 11h1v1h-1zM168 11h1v1h-1zM13 12h1v1h-1zM23 12h1v1h-1zM58 12h1v1h-1zM142 12h1v1h-1zM159 12h1v1h-1zM212 12h1v1h-1zM214 12h1v1h-1zM226 12h1v1h-1zM93 13h1v1h-1zM42 14h1v1h-1zM81 14h1v1h-1zM117 14h1v1h-1zM9 15h1v1h-1zM63 15h1v1h-1zM40 16h1v1h-1zM96 16h1v1h-1zM235 16h1v1h-1zM10 17h1v1h-1zM12 17h1v1h-1zM14 17h1v1h-1zM223 17h1v1h-1zM7 18h2v1h-2zM23 18h1v1h-1zM44 18h1v1h-1zM48 18h1v1h-1zM146 18h1v1h-1zM2 19h1v1h-1zM6 19h1v1h-1zM15 19h1v1h-1zM34 19h1v1h-1zM38 19h1v1h-1zM45 19h1v1h-1zM127 19h1v1h-1zM137 19h1v1h-1zM148 19h1v1h-1zM223 19h1v1h-1zM0 20h1v1h-1zM12 20h1v1h-1zM18 20h1v1h-1zM29 20h1v1h-1zM35 20h1v1h-1zM126 20h1v1h-1zM217 20h1v1h-1zM2 21h1v1h-1zM4 21h1v1h-1zM6 21h1v1h-1zM18 21h1v1h-1zM24 21h1v1h-1zM137 21h1v1h-1zM9 22h1v1h-1zM17 22h1v1h-1zM20 22h1v1h-1zM28 22h1v1h-1zM34 22h1v1h-1zM45 22h1v1h-1zM0 23h1v1h-1zM14 23h1v1h-1zM209 23h1v1h-1zM18 24h1v1h-1zM27 24h1v1h-1zM50 24h1v1h-1zM75 24h1v1h-1zM131 24h1v1h-1zM10 25h1v1h-1zM21 25h1v1h-1zM1 26h1v1h-1zM8 26h1v1h-1zM20 26h1v1h-1zM23 26h1v1h-1zM24 26h1v1h-1zM52 26h1v1h-1zM67 26h1v1h-1zM144 26h1v1h-1zM47 27h1v1h-1zM51 27h1v1h-1zM134 27h1v1h-1zM152 27h1v1h-1zM1 28h2v1h-2zM16 28h1v1h-1zM18 28h1v1h-1zM46 28h1v1h-1zM50 28h1v1h-1zM92 28h1v1h-1zM113 28h1v1h-1zM232 28h1v1h-1zM1 29h1v1h-1zM6 29h1v1h-1zM15 29h1v1h-1zM17 29h1v1h-1zM24 29h1v1h-1zM38 29h1v1h-1z"/><path fill="#000000" d="M216 0h1v1h-1zM222 1h1v1h-1zM231 1h1v1h-1zM235 2h1v1h-1zM208 3h2v1h-2zM20 4h1v1h-1zM23 4h2v1h-2zM28 4h1v1h-1zM39 4h1v1h-1zM43 4h1v1h-1zM49 4h1v1h-1zM55 4h2v1h-2zM71 4h1v1h-1zM77 4h1v1h-1zM82 4h1v1h-1zM87 4h1v1h-1zM99 4h1v1h-1zM102 4h1v1h-1zM105 4h1v1h-1zM133 4h1v1h-1zM135 4h4v1h-4zM149 4h1v1h-1zM157 4h1v1h-1zM162 4h1v1h-1zM165 4h1v1h-1zM168 4h1v1h-1zM173 4h1v1h-1zM188 4h2v1h-2zM197 4h1v1h-1zM204 4h2v1h-2zM207 4h1v1h-1zM232 5h1v1h-1zM213 6h1v1h-1zM221 6h1v1h-1zM231 6h1v1h-1zM233 6h1v1h-1zM236 6h1v1h-1zM208 7h1v1h-1zM217 7h1v1h-1zM39 8h1v1h-1zM85 8h1v1h-1zM107 8h1v1h-1zM121 8h1v1h-1zM152 8h1v1h-1zM197 8h1v1h-1zM1 9h1v1h-1zM11 9h4v1h-4zM23 9h1v1h-1zM28 9h1v1h-1zM31 9h1v1h-1zM46 9h1v1h-1zM51 9h1v1h-1zM54 9h1v1h-1zM56 9h1v1h-1zM58 9h1v1h-1zM69 9h2v1h-2zM84 9h1v1h-1zM90 9h1v1h-1zM97 9h1v1h-1zM106 9h1v1h-1zM112 9h1v1h-1zM122 9h1v1h-1zM124 9h1v1h-1zM129 9h1v1h-1zM131 9h1v1h-1zM135 9h1v1h-1zM141 9h1v1h-1zM147 9h1v1h-1zM149 9h1v1h-1zM151 9h1v1h-1zM156 9h2v1h-2zM159 9h2v1h-2zM174 9h1v1h-1zM176 9h1v1h-1zM179 9h1v1h-1zM182 9h1v1h-1zM184 9h1v1h-1zM186 9h1v1h-1zM194 9h3v1h-3zM198 9h1v1h-1zM200 9h2v1h-2zM203 9h1v1h-1zM22 10h1v1h-1zM32 10h1v1h-1zM81 10h1v1h-1zM123 10h1v1h-1zM128 10h1v1h-1zM216 11h1v1h-1zM208 12h1v1h-1zM215 12h1v1h-1zM228 12h1v1h-1zM217 13h2v1h-2zM13 14h1v1h-1zM16 14h1v1h-1zM20 14h2v1h-2zM39 14h1v1h-1zM54 14h2v1h-2zM68 14h1v1h-1zM88 14h1v1h-1zM91 14h2v1h-2zM109 14h1v1h-1zM126 14h2v1h-2zM135 14h1v1h-1zM137 14h1v1h-1zM142 14h1v1h-1zM148 14h1v1h-1zM152 14h1v1h-1zM154 14h1v1h-1zM159 14h1v1h-1zM202 14h1v1h-1zM8 17h1v1h-1zM15 18h1v1h-1zM1 19h1v1h-1zM9 19h1v1h-1zM11 19h1v1h-1zM13 19h1v1h-1zM19 19h1v1h-1zM21 19h1v1h-1zM9 20h2v1h-2zM14 20h1v1h-1zM0 21h1v1h-1zM7 22h1v1h-1zM11 22h2v1h-2zM14 22h1v1h-1zM1 23h1v1h-1zM3 23h2v1h-2zM11 23h1v1h-1zM18 23h1v1h-1zM0 25h1v1h-1zM13 25h1v1h-1zM22 25h1v1h-1zM18 26h1v1h-1zM21 26h1v1h-1zM0 27h1v1h-1zM5 27h1v1h-1zM19 27h1v1h-1zM7 28h1v1h-1zM19 28h1v1h-1zM23 28h1v1h-1zM22 29h1v1h-1z"/><path fill="#141400" d="M210 1h1v1h-1zM229 1h1v1h-1zM233 1h1v1h-1zM211 2h1v1h-1zM214 2h1v1h-1zM218 2h1v1h-1zM210 3h1v1h-1zM26 4h2v1h-2zM101 4h1v1h-1zM113 4h1v1h-1zM130 4h1v1h-1zM132 4h1v1h-1zM163 4h1v1h-1zM169 4h1v1h-1zM179 4h1v1h-1zM187 4h1v1h-1zM235 6h1v1h-1zM0 8h1v1h-1zM58 8h1v1h-1zM10 9h1v1h-1zM16 9h1v1h-1zM25 9h1v1h-1zM32 9h1v1h-1zM39 9h1v1h-1zM43 9h1v1h-1zM45 9h1v1h-1zM73 9h1v1h-1zM109 9h2v1h-2zM171 9h1v1h-1zM192 9h1v1h-1zM199 9h1v1h-1zM125 10h1v1h-1zM217 11h1v1h-1zM229 11h1v1h-1zM233 12h1v1h-1zM239 12h1v1h-1zM18 14h1v1h-1zM71 14h1v1h-1zM101 14h1v1h-1zM145 14h1v1h-1zM9 21h1v1h-1zM15 22h1v1h-1zM13 23h1v1h-1zM20 23h1v1h-1zM3 24h1v1h-1zM16 26h1v1h-1z"/><path fill="#140014" d="M239 1h1v1h-1zM5 4h1v1h-1zM7 4h1v1h-1zM14 4h1v1h-1zM18 4h1v1h-1zM54 4h1v1h-1zM57 4h1v1h-1zM90 4h1v1h-1zM108 4h1v1h-1zM120 4h1v1h-1zM140 4h1v1h-1zM146 4h1v1h-1zM159 4h1v1h-1zM177 4h1v1h-1zM218 5h1v1h-1zM173 8h1v1h-1zM177 8h1v1h-1zM20 9h1v1h-1zM72 9h1v1h-1zM96 9h1v1h-1zM102 9h1v1h-1zM105 9h1v1h-1zM108 9h1v1h-1zM115 9h1v1h-1zM123 9h1v1h-1zM127 9h1v1h-1zM134 9h1v1h-1zM155 9h1v1h-1zM175 9h1v1h-1zM188 9h2v1h-2zM191 9h1v1h-1zM18 10h1v1h-1zM89 10h1v1h-1zM149 10h1v1h-1zM164 10h1v1h-1zM9 14h1v1h-1zM25 14h1v1h-1zM33 14h1v1h-1zM189 14h1v1h-1zM20 18h1v1h-1zM3 21h1v1h-1zM7 21h2v1h-2zM5 22h1v1h-1zM16 22h1v1h-1zM18 22h1v1h-1zM14 26h1v1h-1zM0 28h1v1h-1z"/><path fill="#666600" d="M10 3h2v1h-2zM49 3h1v1h-1zM95 3h1v1h-1zM137 3h1v1h-1zM22 4h1v1h-1zM31 4h1v1h-1zM141 4h1v1h-1zM203 4h1v1h-1zM209 4h1v1h-1zM221 4h1v1h-1zM223 4h1v1h-1zM228 4h2v1h-2zM235 4h1v1h-1zM0 5h1v1h-1zM28 5h1v1h-1zM54 5h1v1h-1zM76 5h1v1h-1zM133 5h1v1h-1zM154 5h1v1h-1zM166 5h1v1h-1zM175 5h1v1h-1zM181 5h1v1h-1zM196 5h1v1h-1zM8 7h2v1h-2zM15 7h1v1h-1zM30 7h1v1h-1zM33 7h1v1h-1zM40 7h1v1h-1zM69 7h1v1h-1zM78 7h1v1h-1zM97 7h1v1h-1zM151 7h2v1h-2zM50 8h1v1h-1zM52 8h1v1h-1zM112 8h2v1h-2zM115 8h1v1h-1zM118 8h1v1h-1zM132 8h1v1h-1zM143 8h1v1h-1zM153 8h1v1h-1zM195 8h1v1h-1zM212 8h1v1h-1zM216 8h1v1h-1zM223 8h1v1h-1zM227 8h1v1h-1zM232 8h2v1h-2zM236 8h1v1h-1zM15 9h1v1h-1zM33 9h1v1h-1zM76 9h1v1h-1zM83 9h1v1h-1zM98 9h1v1h-1zM117 9h1v1h-1zM209 9h1v1h-1zM218 9h1v1h-1zM225 9h1v1h-1zM5 10h1v1h-1zM30 10h1v1h-1zM69 10h1v1h-1zM95 10h1v1h-1zM107 10h1v1h-1zM112 10h1v1h-1zM118 10h1v1h-1zM136 10h1v1h-1zM146 10h1v1h-1zM155 10h1v1h-1zM163 10h1v1h-1zM169 10h2v1h-2zM180 10h1v1h-1zM202 10h1v1h-1zM208 10h1v1h-1zM213 10h1v1h-1zM222 10h2v1h-2zM226 10h1v1h-1zM230 10h1v1h-1zM238 10h1v1h-1zM117 11h1v1h-1zM151 11h1v1h-1zM175 11h1v1h-1zM40 13h1v1h-1zM63 13h1v1h-1zM90 13h1v1h-1zM131 13h1v1h-1zM159 13h1v1h-1zM185 13h1v1h-1zM189 13h1v1h-1zM196 13h1v1h-1zM17 14h1v1h-1zM23 14h1v1h-1zM43 14h1v1h-1zM59 14h1v1h-1zM64 14h1v1h-1zM74 14h1v1h-1zM155 14h1v1h-1zM160 14h1v1h-1zM227 14h1v1h-1zM37 17h1v1h-1zM39 17h1v1h-1zM41 17h1v1h-1zM81 17h1v1h-1zM83 17h1v1h-1zM90 17h1v1h-1zM109 17h1v1h-1zM126 17h1v1h-1zM137 17h1v1h-1zM145 17h1v1h-1zM147 17h1v1h-1zM169 17h1v1h-1zM201 17h1v1h-1zM238 17h1v1h-1zM11 18h1v1h-1zM51 18h1v1h-1zM155 18h1v1h-1zM159 18h1v1h-1zM170 18h1v1h-1zM203 18h1v1h-1zM29 19h1v1h-1zM52 19h1v1h-1zM8 20h1v1h-1zM13 20h1v1h-1zM28 21h1v1h-1zM94 23h1v1h-1zM100 23h1v1h-1zM108 23h1v1h-1zM142 23h1v1h-1zM193 23h1v1h-1zM196 23h1v1h-1zM225 23h1v1h-1zM10 24h1v1h-1zM70 24h1v1h-1zM98 24h1v1h-1zM125 24h1v1h-1zM200 24h1v1h-1zM2 27h2v1h-2zM16 27h1v1h-1zM149 27h1v1h-1zM196 27h1v1h-1zM27 28h1v1h-1zM47 28h1v1h-1zM156 28h1v1h-1zM217 28h1v1h-1zM219 28h1v1h-1z"/><path fill="#525200" d="M12 3h1v1h-1zM29 3h1v1h-1zM61 3h1v1h-1zM79 3h1v1h-1zM81 3h1v1h-1zM96 3h1v1h-1zM102 3h1v1h-1zM143 3h1v1h-1zM183 3h1v1h-1zM75 4h1v1h-1zM103 4h1v1h-1zM119 4h1v1h-1zM123 4h1v1h-1zM196 4h1v1h-1zM210 4h1v1h-1zM220 4h1v1h-1zM26 5h1v1h-1zM40 5h1v1h-1zM74 5h1v1h-1zM81 5h1v1h-1zM97 5h1v1h-1zM103 5h1v1h-1zM121 5h1v1h-1zM159 5h1v1h-1zM7 7h1v1h-1zM75 7h1v1h-1zM131 7h1v1h-1zM149 7h1v1h-1zM207 7h1v1h-1zM2 8h1v1h-1zM15 8h1v1h-1zM43 8h1v1h-1zM56 8h1v1h-1zM75 8h1v1h-1zM81 8h1v1h-1zM110 8h1v1h-1zM127 8h1v1h-1zM168 8h1v1h-1zM194 8h1v1h-1zM202 8h1v1h-1zM214 8h1v1h-1zM218 8h3v1h-3zM222 8h1v1h-1zM239 8h1v1h-1zM36 9h1v1h-1zM75 9h1v1h-1zM82 9h1v1h-1zM125 9h1v1h-1zM130 9h1v1h-1zM165 9h1v1h-1zM211 9h1v1h-1zM215 9h1v1h-1zM2 10h1v1h-1zM29 10h1v1h-1zM49 10h1v1h-1zM64 10h1v1h-1zM131 10h1v1h-1zM157 10h1v1h-1zM162 10h1v1h-1zM206 10h1v1h-1zM80 11h1v1h-1zM162 11h1v1h-1zM194 11h1v1h-1zM8 13h1v1h-1zM30 13h1v1h-1zM37 13h1v1h-1zM86 13h1v1h-1zM98 13h1v1h-1zM148 13h1v1h-1zM181 13h1v1h-1zM191 13h1v1h-1zM27 14h1v1h-1zM58 14h1v1h-1zM75 14h2v1h-2zM105 14h1v1h-1zM115 14h1v1h-1zM130 14h1v1h-1zM170 14h1v1h-1zM183 14h1v1h-1zM196 14h1v1h-1zM28 17h1v1h-1zM36 17h1v1h-1zM104 17h1v1h-1zM108 17h1v1h-1zM112 17h1v1h-1zM116 17h1v1h-1zM149 17h1v1h-1zM172 17h1v1h-1zM207 17h1v1h-1zM222 17h1v1h-1zM42 18h1v1h-1zM86 18h2v1h-2zM103 18h1v1h-1zM107 18h1v1h-1zM166 18h1v1h-1zM185 18h1v1h-1zM233 18h1v1h-1zM147 19h1v1h-1zM217 19h1v1h-1zM27 22h1v1h-1zM32 23h1v1h-1zM39 23h1v1h-1zM49 23h1v1h-1zM58 23h1v1h-1zM112 23h1v1h-1zM127 23h1v1h-1zM186 23h1v1h-1zM32 24h1v1h-1zM40 24h1v1h-1zM64 24h1v1h-1zM89 24h1v1h-1zM97 24h1v1h-1zM108 24h1v1h-1zM118 24h1v1h-1zM178 24h1v1h-1zM25 26h1v1h-1zM32 27h1v1h-1zM40 27h1v1h-1zM154 27h2v1h-2zM202 27h1v1h-1zM41 28h1v1h-1zM43 28h1v1h-1zM76 28h1v1h-1zM121 28h1v1h-1zM124 28h1v1h-1zM234 28h1v1h-1zM112 29h1v1h-1zM119 29h1v1h-1zM180 29h1v1h-1zM230 29h1v1h-1z"/><path fill="#8f8f00" d="M40 3h1v1h-1zM42 3h1v1h-1zM52 3h1v1h-1zM58 3h1v1h-1zM115 3h1v1h-1zM145 3h1v1h-1zM172 3h1v1h-1zM192 3h1v1h-1zM203 3h2v1h-2zM12 4h1v1h-1zM47 4h1v1h-1zM58 4h1v1h-1zM81 4h1v1h-1zM145 4h1v1h-1zM147 4h1v1h-1zM178 4h1v1h-1zM183 4h1v1h-1zM200 4h1v1h-1zM202 4h1v1h-1zM7 5h1v1h-1zM92 5h1v1h-1zM137 5h1v1h-1zM160 5h1v1h-1zM162 5h1v1h-1zM191 5h1v1h-1zM205 5h1v1h-1zM61 7h1v1h-1zM108 7h1v1h-1zM110 7h1v1h-1zM124 7h1v1h-1zM154 7h1v1h-1zM163 7h1v1h-1zM166 7h1v1h-1zM182 7h1v1h-1zM5 8h1v1h-1zM12 8h1v1h-1zM33 8h1v1h-1zM99 8h1v1h-1zM124 8h1v1h-1zM186 8h1v1h-1zM196 8h1v1h-1zM4 9h1v1h-1zM9 9h1v1h-1zM35 9h1v1h-1zM42 9h1v1h-1zM104 9h1v1h-1zM164 9h1v1h-1zM33 10h1v1h-1zM41 10h1v1h-1zM53 10h1v1h-1zM100 10h1v1h-1zM110 10h1v1h-1zM119 10h1v1h-1zM127 10h1v1h-1zM130 10h1v1h-1zM201 10h1v1h-1zM3 11h1v1h-1zM52 11h1v1h-1zM62 11h1v1h-1zM67 11h1v1h-1zM85 11h1v1h-1zM122 11h1v1h-1zM142 11h1v1h-1zM171 11h1v1h-1zM193 11h1v1h-1zM208 11h1v1h-1zM221 11h2v1h-2zM231 11h1v1h-1zM235 11h1v1h-1zM20 13h1v1h-1zM25 13h1v1h-1zM42 13h1v1h-1zM149 13h1v1h-1zM161 13h1v1h-1zM170 13h1v1h-1zM220 13h2v1h-2zM233 13h1v1h-1zM8 14h1v1h-1zM40 14h1v1h-1zM63 14h1v1h-1zM83 14h1v1h-1zM116 14h1v1h-1zM128 14h1v1h-1zM181 14h1v1h-1zM185 14h1v1h-1zM212 14h1v1h-1zM219 14h1v1h-1zM223 14h1v1h-1zM236 14h2v1h-2zM239 14h1v1h-1zM30 17h1v1h-1zM58 17h1v1h-1zM64 17h1v1h-1zM80 17h1v1h-1zM130 17h1v1h-1zM144 17h1v1h-1zM193 17h1v1h-1zM16 18h1v1h-1zM83 18h1v1h-1zM142 18h1v1h-1zM145 18h1v1h-1zM188 18h1v1h-1zM202 18h1v1h-1zM225 18h1v1h-1zM7 19h1v1h-1zM12 19h1v1h-1zM41 19h1v1h-1zM44 19h1v1h-1zM60 19h1v1h-1zM125 19h1v1h-1zM1 20h1v1h-1zM6 20h1v1h-1zM23 20h1v1h-1zM21 22h1v1h-1zM23 22h1v1h-1zM33 22h1v1h-1zM40 22h1v1h-1zM92 23h1v1h-1zM220 23h1v1h-1zM2 24h1v1h-1zM67 24h1v1h-1zM84 24h1v1h-1zM111 24h1v1h-1zM122 24h1v1h-1zM145 24h2v1h-2zM185 24h1v1h-1zM207 24h1v1h-1zM18 25h1v1h-1zM20 25h1v1h-1zM30 25h1v1h-1zM30 27h1v1h-1zM35 27h1v1h-1zM209 27h1v1h-1zM108 28h1v1h-1zM117 28h1v1h-1zM30 29h1v1h-1zM101 29h1v1h-1zM107 29h1v1h-1zM179 29h1v1h-1zM187 29h1v1h-1zM202 29h1v1h-1z"/><path fill="#7a7a00" d="M45 3h1v1h-1zM66 3h1v1h-1zM87 3h1v1h-1zM149 3h1v1h-1zM159 3h1v1h-1zM180 3h1v1h-1zM89 4h1v1h-1zM122 4h1v1h-1zM156 4h1v1h-1zM181 4h1v1h-1zM216 4h1v1h-1zM222 4h1v1h-1zM226 4h1v1h-1zM230 4h1v1h-1zM232 4h2v1h-2zM239 4h1v1h-1zM67 5h1v1h-1zM124 5h1v1h-1zM12 7h1v1h-1zM28 7h1v1h-1zM46 7h1v1h-1zM67 7h1v1h-1zM111 7h1v1h-1zM162 7h1v1h-1zM168 7h1v1h-1zM185 7h1v1h-1zM201 7h1v1h-1zM6 8h1v1h-1zM27 8h1v1h-1zM40 8h1v1h-1zM48 8h1v1h-1zM67 8h1v1h-1zM104 8h1v1h-1zM108 8h1v1h-1zM111 8h1v1h-1zM149 8h1v1h-1zM175 8h1v1h-1zM200 8h2v1h-2zM206 8h1v1h-1zM215 8h1v1h-1zM234 8h1v1h-1zM237 8h1v1h-1zM18 9h1v1h-1zM48 9h1v1h-1zM57 9h1v1h-1zM137 9h1v1h-1zM142 9h1v1h-1zM145 9h1v1h-1zM177 9h1v1h-1zM208 9h1v1h-1zM213 9h1v1h-1zM220 9h1v1h-1zM223 9h1v1h-1zM226 9h2v1h-2zM229 9h1v1h-1zM238 9h1v1h-1zM4 10h1v1h-1zM21 10h1v1h-1zM24 10h1v1h-1zM35 10h1v1h-1zM52 10h1v1h-1zM67 10h1v1h-1zM99 10h1v1h-1zM108 10h1v1h-1zM145 10h1v1h-1zM148 10h1v1h-1zM185 10h1v1h-1zM199 10h1v1h-1zM217 10h1v1h-1zM224 10h1v1h-1zM229 10h1v1h-1zM233 10h1v1h-1zM235 10h1v1h-1zM237 10h1v1h-1zM56 11h1v1h-1zM101 11h1v1h-1zM123 11h1v1h-1zM145 11h1v1h-1zM199 11h1v1h-1zM44 13h1v1h-1zM47 13h1v1h-1zM77 13h1v1h-1zM134 13h1v1h-1zM143 13h1v1h-1zM209 13h1v1h-1zM213 13h1v1h-1zM223 13h1v1h-1zM227 13h1v1h-1zM234 13h1v1h-1zM239 13h1v1h-1zM34 14h1v1h-1zM69 14h1v1h-1zM80 14h1v1h-1zM90 14h1v1h-1zM100 14h1v1h-1zM147 14h1v1h-1zM149 14h1v1h-1zM161 14h1v1h-1zM186 14h1v1h-1zM220 14h1v1h-1zM234 14h1v1h-1zM238 14h1v1h-1zM1 17h1v1h-1zM3 17h1v1h-1zM7 17h1v1h-1zM32 17h1v1h-1zM35 17h1v1h-1zM40 17h1v1h-1zM48 17h1v1h-1zM70 17h1v1h-1zM102 17h1v1h-1zM142 17h1v1h-1zM159 17h1v1h-1zM182 17h1v1h-1zM192 17h1v1h-1zM196 17h1v1h-1zM214 17h1v1h-1zM9 18h1v1h-1zM40 18h1v1h-1zM77 18h1v1h-1zM120 18h1v1h-1zM127 18h1v1h-1zM138 18h1v1h-1zM149 18h1v1h-1zM157 18h1v1h-1zM224 18h1v1h-1zM10 19h1v1h-1zM37 19h1v1h-1zM85 19h1v1h-1zM10 22h1v1h-1zM22 22h1v1h-1zM2 23h1v1h-1zM6 23h1v1h-1zM30 23h1v1h-1zM60 23h1v1h-1zM77 23h1v1h-1zM81 23h1v1h-1zM137 23h1v1h-1zM153 23h1v1h-1zM164 23h1v1h-1zM166 23h2v1h-2zM172 23h1v1h-1zM1 24h1v1h-1zM13 24h1v1h-1zM17 24h1v1h-1zM52 24h1v1h-1zM104 24h1v1h-1zM116 24h1v1h-1zM119 24h1v1h-1zM3 25h1v1h-1zM16 25h1v1h-1zM15 26h1v1h-1zM18 27h1v1h-1zM104 27h1v1h-1zM109 27h1v1h-1zM207 27h1v1h-1zM233 27h1v1h-1zM10 28h1v1h-1zM55 28h1v1h-1zM154 28h1v1h-1zM182 28h1v1h-1zM191 28h1v1h-1zM225 28h1v1h-1zM23 29h1v1h-1zM78 29h1v1h-1zM134 29h1v1h-1zM142 29h1v1h-1z"/><path fill="#3d003d" d="M3 4h2v1h-2zM16 4h1v1h-1zM25 4h1v1h-1zM29 4h1v1h-1zM41 4h1v1h-1zM78 4h1v1h-1zM98 4h1v1h-1zM107 4h1v1h-1zM116 4h1v1h-1zM142 4h1v1h-1zM153 4h1v1h-1zM158 4h1v1h-1zM171 4h1v1h-1z"/><path fill="#520052" d="M76 4h1v1h-1zM114 4h1v1h-1zM127 4h1v1h-1zM152 4h1v1h-1zM176 4h1v1h-1z"/><path fill="#b800b8" d="M0 9h1v1h-1zM2 9h1v1h-1zM5 9h1v1h-1zM44 9h1v1h-1zM85 9h1v1h-1zM93 9h1v1h-1zM178 9h1v1h-1zM205 9h1v1h-1z"/><path fill="#e000e0" d="M6 9h1v1h-1zM22 9h1v1h-1zM87 9h1v1h-1zM139 9h1v1h-1zM183 9h1v1h-1z"/><path fill="#f500f5" d="M24 9h1v1h-1zM80 9h1v1h-1zM121 9h1v1h-1zM133 9h1v1h-1zM144 9h1v1h-1zM148 9h1v1h-1zM166 9h1v1h-1zM180 9h1v1h-1z"/><path fill="#a300a3" d="M59 9h1v1h-1zM71 9h1v1h-1zM95 9h1v1h-1zM120 9h1v1h-1zM126 9h1v1h-1zM132 9h1v1h-1zM152 9h1v1h-1zM158 9h1v1h-1z"/><path fill="#cc00cc" d="M61 9h1v1h-1zM91 9h1v1h-1zM94 9h1v1h-1zM119 9h1v1h-1zM153 9h1v1h-1zM187 9h1v1h-1zM206 9h1v1h-1z"/></g><rect x="1373.2" y="647.6" width="20.799999999999955" height="103.19999999999993" fill="url(#cb)"/><path d="M1373.2 657.9h4M1390.0 657.9h4" stroke="#fff" stroke-width="0.8"/><text x="1401.5" y="662.8" font-size="11" fill="#111">2</text><path d="M1373.2 678.6h4M1390.0 678.6h4" stroke="#fff" stroke-width="0.8"/><text x="1401.5" y="683.5" font-size="11" fill="#111">1</text><path d="M1373.2 699.2h4M1390.0 699.2h4" stroke="#fff" stroke-width="0.8"/><text x="1401.5" y="704.1" font-size="11" fill="#111">0</text><path d="M1373.2 719.8h4M1390.0 719.8h4" stroke="#fff" stroke-width="0.8"/><text x="1401.5" y="724.7" font-size="11" fill="#111">-1</text><path d="M1373.2 740.5h4M1390.0 740.5h4" stroke="#fff" stroke-width="0.8"/><text x="1401.5" y="745.4" font-size="11" fill="#111">-2</text><g font-size="11" fill="#4d4d4d" text-anchor="end"><text x="652.9" y="811.5">PPBP</text><text x="652.9" y="817.6">PF4</text><text x="652.9" y="823.6">SDPR</text><text x="652.9" y="829.6">SPARC</text><text x="652.9" y="835.7">GNG11</text><text x="652.9" y="841.7">NRGN</text><text x="652.9" y="847.7">GP9</text><text x="652.9" y="853.8">RGS18</text><text x="652.9" y="859.8">TUBB1</text><text x="652.9" y="865.8">CLU</text><text x="652.9" y="871.9">HIST1H2AC</text><text x="652.9" y="877.9">AP001189.4</text><text x="652.9" y="884.0">ITGA2B</text><text x="652.9" y="890.0">CD9</text><text x="652.9" y="896.0">TMEM40</text><text x="652.9" y="902.1">HLA-DMB</text><text x="652.9" y="908.1">LINC00926</text><text x="652.9" y="914.1">TCL1A</text><text x="652.9" y="920.2">HLA-DQA2</text><text x="652.9" y="926.2">HLA-DRA</text><text x="652.9" y="932.3">HLA-DRB5</text><text x="652.9" y="938.3">HLA-DRB1</text><text x="652.9" y="944.3">MS4A1</text><text x="652.9" y="950.4">HLA-DPA1</text><text x="652.9" y="956.4">CD74</text><text x="652.9" y="962.4">HLA-DPB1</text><text x="652.9" y="968.5">HLA-DQB1</text><text x="652.9" y="974.5">CD79B</text><text x="652.9" y="980.5">CD79A</text><text x="652.9" y="986.6">HLA-DQA1</text></g><rect x="659.2" y="803.7" width="273.6" height="181.1" fill="#0a000c"/><g transform="translate(659.2 803.7) scale(1.14000 6.03667)"><path fill="#080008" d="M0 0h240v1.03h-240zM0 2h240v1.03h-240zM0 4h240v1.03h-240zM0 6h240v1.03h-240zM0 8h240v1.03h-240zM0 10h240v1.03h-240zM0 12h240v1.03h-240z"/><path fill="#0e000e" d="M0 1h240v1.03h-240zM0 3h240v1.03h-240zM0 5h240v1.03h-240zM0 7h240v1.03h-240zM0 9h240v1.03h-240zM0 11h240v1.03h-240z"/><path fill="#0f000f" d="M0 13h240v1.03h-240z"/><path fill="#000000" d="M0 14h240v1.03h-240z"/><path fill="#e0e000" d="M0 15h34v1.03h-34zM0 16h34v1.03h-34zM0 17h34v1.03h-34zM0 18h34v1.03h-34zM0 28h34v1.03h-34zM0 29h34v1.03h-34z"/><path fill="#4a004a" d="M34 15h8v1.03h-8zM42 15h198v1.03h-198z"/><path fill="#220022" d="M34 16h8v1.03h-8zM42 16h198v1.03h-198zM34 17h8v1.03h-8zM42 17h198v1.03h-198zM34 18h8v1.03h-8zM42 18h198v1.03h-198z"/><path fill="#999900" d="M0 19h34v1.03h-34zM0 20h34v1.03h-34zM0 21h34v1.03h-34zM0 23h34v1.03h-34zM0 24h34v1.03h-34zM0 25h34v1.03h-34z"/><path fill="#6a006a" d="M34 19h8v1.03h-8zM42 19h198v1.03h-198zM34 21h8v1.03h-8zM42 21h198v1.03h-198zM34 25h8v1.03h-8zM42 25h198v1.03h-198z"/><path fill="#5a005a" d="M34 20h8v1.03h-8zM42 20h198v1.03h-198zM34 23h8v1.03h-8zM42 23h198v1.03h-198z"/><path fill="#ebeb00" d="M0 22h34v1.03h-34z"/><path fill="#290029" d="M34 22h8v1.03h-8zM42 22h198v1.03h-198zM34 28h8v1.03h-8zM42 28h198v1.03h-198z"/><path fill="#330033" d="M34 24h8v1.03h-8zM42 24h198v1.03h-198zM34 26h8v1.03h-8zM42 26h198v1.03h-198zM34 27h8v1.03h-8zM42 27h198v1.03h-198zM34 29h8v1.03h-8zM42 29h198v1.03h-198z"/><path fill="#c2c200" d="M0 26h34v1.03h-34z"/><path fill="#cccc00" d="M0 27h34v1.03h-34z"/><path fill="#cccc00" d="M53 0h1v1h-1zM72 2h1v1h-1zM117 2h1v1h-1zM52 7h1v1h-1zM85 9h1v1h-1zM118 9h1v1h-1zM23 10h1v1h-1zM110 10h1v1h-1zM202 10h1v1h-1zM219 10h1v1h-1zM19 15h1v1h-1zM34 15h1v1h-1zM56 15h1v1h-1zM104 15h1v1h-1zM160 15h1v1h-1zM1 16h1v1h-1zM5 16h2v1h-2zM10 16h1v1h-1zM16 16h1v1h-1zM18 16h1v1h-1zM22 16h1v1h-1zM29 16h1v1h-1zM35 16h1v1h-1zM86 16h1v1h-1zM10 17h1v1h-1zM12 17h1v1h-1zM21 17h1v1h-1zM24 17h1v1h-1zM36 17h1v1h-1zM203 17h1v1h-1zM11 18h1v1h-1zM21 18h1v1h-1zM24 18h3v1h-3zM30 18h1v1h-1zM33 18h1v1h-1zM35 18h1v1h-1zM0 19h1v1h-1zM10 19h1v1h-1zM2 20h2v1h-2zM13 20h1v1h-1zM17 20h1v1h-1zM31 20h1v1h-1zM1 21h1v1h-1zM7 21h1v1h-1zM21 21h1v1h-1zM35 21h1v1h-1zM41 21h1v1h-1zM7 22h1v1h-1zM9 22h1v1h-1zM22 22h1v1h-1zM27 22h1v1h-1zM37 22h1v1h-1zM2 23h1v1h-1zM8 23h1v1h-1zM30 23h1v1h-1zM32 23h1v1h-1zM0 24h1v1h-1zM5 24h1v1h-1zM9 24h1v1h-1zM18 24h1v1h-1zM20 24h1v1h-1zM25 24h1v1h-1zM24 25h1v1h-1zM29 25h1v1h-1zM31 25h1v1h-1zM33 25h1v1h-1zM38 25h1v1h-1zM41 25h1v1h-1zM37 26h1v1h-1zM36 27h2v1h-2zM6 28h1v1h-1zM11 28h1v1h-1zM19 28h1v1h-1zM40 28h1v1h-1zM47 28h1v1h-1zM118 28h1v1h-1zM0 29h1v1h-1zM3 29h1v1h-1zM7 29h1v1h-1zM10 29h1v1h-1zM12 29h1v1h-1zM20 29h1v1h-1zM22 29h1v1h-1zM33 29h1v1h-1zM68 29h1v1h-1zM125 29h1v1h-1zM202 29h1v1h-1z"/><path fill="#e0e000" d="M90 0h1v1h-1zM39 1h1v1h-1zM183 5h1v1h-1zM167 7h1v1h-1zM186 10h1v1h-1zM194 10h1v1h-1zM215 10h1v1h-1zM49 13h1v1h-1zM150 13h1v1h-1zM46 15h1v1h-1zM111 15h1v1h-1zM38 18h1v1h-1zM24 19h2v1h-2zM29 20h2v1h-2zM41 20h1v1h-1zM0 21h1v1h-1zM23 21h1v1h-1zM32 21h1v1h-1zM38 21h1v1h-1zM21 23h2v1h-2zM29 23h1v1h-1zM33 23h1v1h-1zM39 23h1v1h-1zM3 24h2v1h-2zM17 24h1v1h-1zM24 24h1v1h-1zM30 24h1v1h-1zM5 25h1v1h-1zM20 25h1v1h-1zM27 25h1v1h-1zM36 25h1v1h-1zM39 25h1v1h-1zM3 26h1v1h-1zM5 26h1v1h-1zM8 26h1v1h-1zM16 26h1v1h-1zM21 26h1v1h-1zM38 26h1v1h-1zM4 27h2v1h-2zM15 27h1v1h-1zM18 27h3v1h-3zM38 27h1v1h-1zM36 28h1v1h-1zM70 28h1v1h-1zM212 28h1v1h-1zM102 29h1v1h-1zM184 29h1v1h-1z"/><path fill="#b8b800" d="M149 0h1v1h-1zM35 2h1v1h-1zM227 7h1v1h-1zM42 9h1v1h-1zM186 9h1v1h-1zM132 10h1v1h-1zM153 10h1v1h-1zM171 10h1v1h-1zM193 13h1v1h-1zM208 13h1v1h-1zM4 15h1v1h-1zM12 15h1v1h-1zM29 15h2v1h-2zM33 15h1v1h-1zM48 15h1v1h-1zM58 15h1v1h-1zM101 15h1v1h-1zM169 15h1v1h-1zM218 15h1v1h-1zM32 16h1v1h-1zM38 16h1v1h-1zM47 16h1v1h-1zM0 17h1v1h-1zM9 17h1v1h-1zM37 17h1v1h-1zM40 17h1v1h-1zM34 18h1v1h-1zM41 19h1v1h-1zM38 20h1v1h-1zM5 22h2v1h-2zM10 22h2v1h-2zM17 22h1v1h-1zM33 22h1v1h-1zM67 22h1v1h-1zM216 22h1v1h-1zM37 25h1v1h-1zM36 26h1v1h-1zM9 27h1v1h-1zM17 27h1v1h-1zM41 27h1v1h-1zM7 28h1v1h-1zM10 28h1v1h-1zM198 28h1v1h-1zM8 29h1v1h-1zM17 29h1v1h-1zM19 29h1v1h-1zM28 29h1v1h-1zM36 29h1v1h-1zM38 29h1v1h-1zM65 29h1v1h-1zM81 29h1v1h-1zM110 29h1v1h-1z"/><path fill="#a3a300" d="M233 0h1v1h-1zM72 4h1v1h-1zM65 10h1v1h-1zM185 10h1v1h-1zM137 13h1v1h-1zM6 15h1v1h-1zM13 15h1v1h-1zM35 15h1v1h-1zM84 15h1v1h-1zM139 15h1v1h-1zM194 15h1v1h-1zM2 16h2v1h-2zM19 16h1v1h-1zM27 16h1v1h-1zM31 16h1v1h-1zM36 16h1v1h-1zM18 17h1v1h-1zM20 17h1v1h-1zM30 17h1v1h-1zM33 17h1v1h-1zM111 17h1v1h-1zM8 18h1v1h-1zM13 18h1v1h-1zM16 18h1v1h-1zM40 18h1v1h-1zM44 19h1v1h-1zM48 19h1v1h-1zM57 19h1v1h-1zM69 19h1v1h-1zM79 19h1v1h-1zM97 19h1v1h-1zM129 19h1v1h-1zM134 19h1v1h-1zM189 19h1v1h-1zM201 19h1v1h-1zM218 19h1v1h-1zM53 20h1v1h-1zM55 20h1v1h-1zM83 20h1v1h-1zM85 20h1v1h-1zM163 20h1v1h-1zM184 20h1v1h-1zM37 21h1v1h-1zM43 21h1v1h-1zM59 21h1v1h-1zM65 21h1v1h-1zM74 21h1v1h-1zM97 21h1v1h-1zM101 21h1v1h-1zM138 21h1v1h-1zM165 21h1v1h-1zM0 22h1v1h-1zM3 22h1v1h-1zM13 22h1v1h-1zM16 22h1v1h-1zM23 22h1v1h-1zM30 22h1v1h-1zM38 23h1v1h-1zM54 23h1v1h-1zM62 23h1v1h-1zM71 23h1v1h-1zM74 23h1v1h-1zM82 23h1v1h-1zM107 23h1v1h-1zM117 23h1v1h-1zM125 23h2v1h-2zM140 23h1v1h-1zM144 23h1v1h-1zM225 23h1v1h-1zM44 24h1v1h-1zM89 24h1v1h-1zM94 24h1v1h-1zM109 24h1v1h-1zM111 24h1v1h-1zM133 24h2v1h-2zM180 24h1v1h-1zM35 25h1v1h-1zM133 25h1v1h-1zM159 25h1v1h-1zM163 25h1v1h-1zM184 25h1v1h-1zM13 26h1v1h-1zM19 26h1v1h-1zM25 26h1v1h-1zM30 26h2v1h-2zM208 26h1v1h-1zM0 27h1v1h-1zM6 27h2v1h-2zM22 27h1v1h-1zM40 27h1v1h-1zM134 27h1v1h-1zM146 27h1v1h-1zM166 27h1v1h-1zM183 27h1v1h-1zM18 28h1v1h-1zM73 28h1v1h-1zM18 29h1v1h-1z"/><path fill="#f5f500" d="M162 1h1v1h-1zM186 4h1v1h-1zM163 7h1v1h-1zM215 7h1v1h-1zM39 9h1v1h-1zM3 10h1v1h-1zM69 10h1v1h-1zM89 10h1v1h-1zM210 10h1v1h-1zM228 13h1v1h-1zM8 15h1v1h-1zM21 15h1v1h-1zM27 15h2v1h-2zM38 15h3v1h-3zM167 15h1v1h-1zM182 15h1v1h-1zM4 16h1v1h-1zM15 16h1v1h-1zM30 16h1v1h-1zM33 16h1v1h-1zM37 16h1v1h-1zM1 17h1v1h-1zM5 17h1v1h-1zM11 17h1v1h-1zM13 17h1v1h-1zM38 17h1v1h-1zM1 18h1v1h-1zM5 18h1v1h-1zM23 18h1v1h-1zM3 19h1v1h-1zM8 19h1v1h-1zM12 19h1v1h-1zM21 19h1v1h-1zM26 19h1v1h-1zM36 19h1v1h-1zM0 20h1v1h-1zM11 20h1v1h-1zM21 20h1v1h-1zM25 20h1v1h-1zM34 20h2v1h-2zM5 21h1v1h-1zM17 21h1v1h-1zM30 21h1v1h-1zM38 22h1v1h-1zM84 22h1v1h-1zM171 22h1v1h-1zM191 22h1v1h-1zM197 22h1v1h-1zM28 23h1v1h-1zM34 23h1v1h-1zM2 24h1v1h-1zM12 24h1v1h-1zM21 24h1v1h-1zM33 24h1v1h-1zM40 24h1v1h-1zM13 25h1v1h-1zM17 25h1v1h-1zM22 26h1v1h-1zM32 26h2v1h-2zM8 27h1v1h-1zM14 27h1v1h-1zM26 27h1v1h-1zM28 27h1v1h-1zM39 27h1v1h-1zM3 28h1v1h-1zM26 28h1v1h-1zM32 28h1v1h-1zM37 28h1v1h-1zM65 28h1v1h-1zM72 28h1v1h-1zM197 28h1v1h-1zM2 29h1v1h-1zM5 29h2v1h-2zM23 29h1v1h-1zM91 29h1v1h-1zM99 29h1v1h-1zM144 29h1v1h-1zM209 29h1v1h-1z"/><path fill="#8f8f00" d="M1 15h1v1h-1zM10 15h1v1h-1zM18 15h1v1h-1zM32 15h1v1h-1zM7 16h2v1h-2zM12 16h1v1h-1zM17 16h1v1h-1zM6 17h1v1h-1zM8 17h1v1h-1zM23 17h1v1h-1zM2 18h1v1h-1zM28 18h1v1h-1zM51 19h1v1h-1zM61 19h1v1h-1zM72 19h1v1h-1zM75 19h1v1h-1zM101 19h1v1h-1zM107 19h2v1h-2zM145 19h1v1h-1zM43 20h1v1h-1zM60 20h1v1h-1zM69 20h1v1h-1zM74 20h1v1h-1zM78 20h1v1h-1zM93 20h1v1h-1zM112 20h1v1h-1zM118 20h1v1h-1zM150 20h1v1h-1zM161 20h1v1h-1zM200 20h1v1h-1zM218 20h1v1h-1zM220 20h1v1h-1zM226 20h1v1h-1zM51 21h1v1h-1zM73 21h1v1h-1zM89 21h1v1h-1zM104 21h1v1h-1zM215 21h1v1h-1zM19 22h1v1h-1zM49 23h1v1h-1zM128 23h1v1h-1zM135 23h1v1h-1zM173 23h1v1h-1zM49 24h1v1h-1zM58 24h1v1h-1zM78 24h1v1h-1zM143 24h1v1h-1zM176 24h1v1h-1zM58 25h1v1h-1zM84 25h1v1h-1zM160 25h1v1h-1zM196 25h1v1h-1zM200 25h1v1h-1zM205 25h1v1h-1zM218 25h1v1h-1zM1 26h1v1h-1zM4 26h1v1h-1zM15 26h1v1h-1zM26 26h1v1h-1zM53 26h1v1h-1zM59 26h1v1h-1zM79 26h1v1h-1zM136 26h1v1h-1zM161 26h1v1h-1zM11 27h1v1h-1zM13 27h1v1h-1zM21 27h1v1h-1zM30 27h4v1h-4zM62 27h1v1h-1zM131 27h1v1h-1zM144 27h1v1h-1zM8 28h1v1h-1zM24 28h1v1h-1zM27 28h1v1h-1zM31 28h1v1h-1zM21 29h1v1h-1z"/><path fill="#000000" d="M2 15h1v1h-1zM14 15h1v1h-1zM16 15h1v1h-1zM23 15h1v1h-1zM26 15h1v1h-1zM31 15h1v1h-1zM11 16h1v1h-1zM21 16h1v1h-1zM28 16h1v1h-1zM3 17h2v1h-2zM7 17h1v1h-1zM14 17h1v1h-1zM19 17h1v1h-1zM22 17h1v1h-1zM15 18h1v1h-1zM17 18h1v1h-1zM19 18h1v1h-1zM29 18h1v1h-1zM32 18h1v1h-1zM1 19h1v1h-1zM6 19h1v1h-1zM22 19h1v1h-1zM43 19h1v1h-1zM46 19h1v1h-1zM64 19h1v1h-1zM71 19h1v1h-1zM73 19h1v1h-1zM78 19h1v1h-1zM84 19h2v1h-2zM88 19h1v1h-1zM92 19h1v1h-1zM133 19h1v1h-1zM143 19h1v1h-1zM147 19h1v1h-1zM158 19h1v1h-1zM171 19h1v1h-1zM199 19h1v1h-1zM202 19h1v1h-1zM205 19h1v1h-1zM211 19h1v1h-1zM220 19h2v1h-2zM226 19h1v1h-1zM230 19h1v1h-1zM232 19h1v1h-1zM235 19h1v1h-1zM1 20h1v1h-1zM9 20h2v1h-2zM18 20h1v1h-1zM23 20h1v1h-1zM67 20h1v1h-1zM90 20h1v1h-1zM99 20h1v1h-1zM216 20h1v1h-1zM230 20h1v1h-1zM232 20h1v1h-1zM18 21h1v1h-1zM24 21h1v1h-1zM118 21h1v1h-1zM144 21h1v1h-1zM188 21h1v1h-1zM193 21h1v1h-1zM225 21h1v1h-1zM2 22h1v1h-1zM8 22h1v1h-1zM15 22h1v1h-1zM15 23h1v1h-1zM66 23h1v1h-1zM93 23h1v1h-1zM127 23h1v1h-1zM183 23h1v1h-1zM203 23h1v1h-1zM212 23h1v1h-1zM234 23h2v1h-2zM11 24h1v1h-1zM42 24h2v1h-2zM48 24h1v1h-1zM56 24h1v1h-1zM62 24h1v1h-1zM67 24h1v1h-1zM69 24h1v1h-1zM72 24h1v1h-1zM85 24h1v1h-1zM87 24h2v1h-2zM90 24h1v1h-1zM100 24h1v1h-1zM112 24h1v1h-1zM115 24h1v1h-1zM117 24h1v1h-1zM122 24h1v1h-1zM129 24h1v1h-1zM132 24h1v1h-1zM135 24h1v1h-1zM139 24h2v1h-2zM142 24h1v1h-1zM145 24h1v1h-1zM150 24h1v1h-1zM152 24h2v1h-2zM155 24h1v1h-1zM159 24h1v1h-1zM165 24h2v1h-2zM168 24h1v1h-1zM179 24h1v1h-1zM184 24h1v1h-1zM187 24h3v1h-3zM193 24h1v1h-1zM195 24h3v1h-3zM207 24h1v1h-1zM209 24h2v1h-2zM214 24h1v1h-1zM217 24h1v1h-1zM220 24h1v1h-1zM225 24h1v1h-1zM232 24h2v1h-2zM47 25h1v1h-1zM54 25h2v1h-2zM60 25h1v1h-1zM71 25h1v1h-1zM87 25h1v1h-1zM89 25h1v1h-1zM99 25h1v1h-1zM102 25h1v1h-1zM116 25h1v1h-1zM123 25h1v1h-1zM125 25h1v1h-1zM131 25h1v1h-1zM137 25h1v1h-1zM139 25h1v1h-1zM147 25h1v1h-1zM151 25h1v1h-1zM153 25h1v1h-1zM173 25h1v1h-1zM179 25h1v1h-1zM185 25h1v1h-1zM187 25h1v1h-1zM206 25h1v1h-1zM210 25h1v1h-1zM213 25h2v1h-2zM217 25h1v1h-1zM220 25h1v1h-1zM230 25h1v1h-1zM236 25h1v1h-1zM14 26h1v1h-1zM2 27h1v1h-1zM27 27h1v1h-1zM0 28h1v1h-1zM12 28h1v1h-1zM28 28h1v1h-1zM1 29h1v1h-1zM30 29h1v1h-1z"/><path fill="#140014" d="M3 15h1v1h-1zM7 15h1v1h-1zM20 15h1v1h-1zM17 17h1v1h-1zM26 17h1v1h-1zM28 17h1v1h-1zM12 18h1v1h-1zM49 19h1v1h-1zM63 19h1v1h-1zM116 19h1v1h-1zM160 19h1v1h-1zM219 19h1v1h-1zM239 19h1v1h-1zM233 20h1v1h-1zM69 21h1v1h-1zM20 22h1v1h-1zM28 22h1v1h-1zM191 23h1v1h-1zM84 24h1v1h-1zM97 24h1v1h-1zM137 24h1v1h-1zM144 24h1v1h-1zM181 24h1v1h-1zM203 24h1v1h-1zM48 25h1v1h-1zM103 25h1v1h-1zM126 25h1v1h-1zM138 25h1v1h-1zM140 25h1v1h-1zM155 25h1v1h-1zM172 25h1v1h-1zM222 25h1v1h-1zM233 25h1v1h-1zM18 26h1v1h-1zM25 28h1v1h-1zM29 28h1v1h-1zM14 29h1v1h-1z"/><path fill="#141400" d="M15 15h1v1h-1zM16 17h1v1h-1zM31 17h1v1h-1zM6 18h1v1h-1zM86 19h1v1h-1zM96 19h1v1h-1zM113 19h1v1h-1zM149 19h1v1h-1zM172 19h1v1h-1zM179 19h1v1h-1zM188 19h1v1h-1zM225 19h1v1h-1zM28 20h1v1h-1zM81 20h1v1h-1zM86 23h1v1h-1zM88 23h1v1h-1zM116 23h1v1h-1zM147 23h1v1h-1zM47 24h1v1h-1zM65 24h1v1h-1zM83 24h1v1h-1zM172 24h1v1h-1zM185 24h1v1h-1zM192 24h1v1h-1zM215 24h1v1h-1zM224 24h1v1h-1zM16 25h1v1h-1zM62 25h1v1h-1zM146 25h1v1h-1zM161 25h1v1h-1zM175 25h1v1h-1zM226 25h1v1h-1zM33 28h1v1h-1zM11 29h1v1h-1zM13 29h1v1h-1z"/><path fill="#7a7a00" d="M86 15h1v1h-1zM192 15h1v1h-1zM229 15h1v1h-1zM15 19h1v1h-1zM17 19h1v1h-1zM42 19h1v1h-1zM67 19h1v1h-1zM90 19h1v1h-1zM112 19h1v1h-1zM120 19h2v1h-2zM167 19h1v1h-1zM186 19h1v1h-1zM191 19h1v1h-1zM4 20h1v1h-1zM6 20h1v1h-1zM26 20h1v1h-1zM46 20h1v1h-1zM71 20h1v1h-1zM98 20h1v1h-1zM126 20h1v1h-1zM137 20h1v1h-1zM139 20h1v1h-1zM13 21h1v1h-1zM16 21h1v1h-1zM25 21h1v1h-1zM28 21h1v1h-1zM45 21h2v1h-2zM54 21h1v1h-1zM79 21h1v1h-1zM85 21h1v1h-1zM87 21h1v1h-1zM126 21h1v1h-1zM133 21h1v1h-1zM136 21h1v1h-1zM143 21h1v1h-1zM153 21h2v1h-2zM179 21h1v1h-1zM7 23h1v1h-1zM9 23h1v1h-1zM23 23h1v1h-1zM42 23h1v1h-1zM58 23h1v1h-1zM83 23h1v1h-1zM87 23h1v1h-1zM89 23h1v1h-1zM94 23h1v1h-1zM97 23h1v1h-1zM101 23h1v1h-1zM106 23h1v1h-1zM113 23h1v1h-1zM142 23h1v1h-1zM192 23h1v1h-1zM8 24h1v1h-1zM10 24h1v1h-1zM22 24h2v1h-2zM26 24h1v1h-1zM28 24h1v1h-1zM63 24h1v1h-1zM96 24h1v1h-1zM120 24h1v1h-1zM123 24h1v1h-1zM146 24h1v1h-1zM221 24h1v1h-1zM2 25h1v1h-1zM7 25h1v1h-1zM21 25h1v1h-1zM23 25h1v1h-1zM43 25h1v1h-1zM65 25h1v1h-1zM83 25h1v1h-1zM154 25h1v1h-1zM162 25h1v1h-1zM182 25h1v1h-1zM216 25h1v1h-1zM11 26h1v1h-1zM57 26h1v1h-1zM85 26h1v1h-1zM108 26h1v1h-1zM145 26h1v1h-1zM183 26h1v1h-1zM16 27h1v1h-1zM24 27h1v1h-1zM63 27h1v1h-1zM72 27h1v1h-1zM89 27h1v1h-1zM126 27h1v1h-1zM129 27h1v1h-1zM181 27h1v1h-1zM184 27h1v1h-1zM190 27h1v1h-1zM202 27h1v1h-1z"/><path fill="#3d3d00" d="M5 19h1v1h-1zM32 19h1v1h-1zM32 20h1v1h-1zM6 23h1v1h-1zM8 25h1v1h-1zM12 25h1v1h-1z"/><path fill="#666600" d="M9 19h1v1h-1zM23 19h1v1h-1zM28 19h1v1h-1zM99 19h1v1h-1zM118 19h1v1h-1zM126 19h1v1h-1zM174 19h1v1h-1zM198 19h1v1h-1zM15 20h1v1h-1zM19 20h1v1h-1zM33 20h1v1h-1zM70 20h1v1h-1zM110 20h1v1h-1zM132 20h2v1h-2zM136 20h1v1h-1zM151 20h1v1h-1zM155 20h1v1h-1zM181 20h1v1h-1zM29 21h1v1h-1zM47 21h1v1h-1zM55 21h1v1h-1zM78 21h1v1h-1zM132 21h1v1h-1zM181 21h1v1h-1zM212 21h1v1h-1zM4 23h2v1h-2zM20 23h1v1h-1zM27 23h1v1h-1zM44 23h1v1h-1zM50 23h2v1h-2zM79 23h1v1h-1zM81 23h1v1h-1zM95 23h1v1h-1zM100 23h1v1h-1zM102 23h1v1h-1zM111 23h1v1h-1zM129 23h1v1h-1zM137 23h1v1h-1zM174 23h1v1h-1zM194 23h1v1h-1zM13 24h1v1h-1zM51 24h1v1h-1zM105 24h1v1h-1zM127 24h1v1h-1zM32 25h1v1h-1zM44 25h1v1h-1zM49 25h1v1h-1zM57 25h1v1h-1zM78 25h1v1h-1zM81 25h1v1h-1zM132 25h1v1h-1zM171 25h1v1h-1zM192 25h1v1h-1zM7 26h1v1h-1zM66 26h1v1h-1zM89 26h1v1h-1zM134 26h1v1h-1zM206 26h1v1h-1zM44 27h1v1h-1zM76 27h1v1h-1zM78 27h1v1h-1zM86 27h1v1h-1zM140 27h1v1h-1z"/><path fill="#525200" d="M27 19h1v1h-1zM58 19h1v1h-1zM62 19h1v1h-1zM83 19h1v1h-1zM89 19h1v1h-1zM183 19h1v1h-1zM193 19h1v1h-1zM203 19h1v1h-1zM208 19h1v1h-1zM5 20h1v1h-1zM7 20h1v1h-1zM20 20h1v1h-1zM44 20h1v1h-1zM47 20h1v1h-1zM49 20h1v1h-1zM72 20h1v1h-1zM79 20h1v1h-1zM88 20h2v1h-2zM100 20h2v1h-2zM120 20h1v1h-1zM159 20h1v1h-1zM188 20h1v1h-1zM12 21h1v1h-1zM14 21h2v1h-2zM68 21h1v1h-1zM72 21h1v1h-1zM90 21h1v1h-1zM102 21h1v1h-1zM139 21h1v1h-1zM145 21h1v1h-1zM152 21h1v1h-1zM12 23h2v1h-2zM17 23h3v1h-3zM76 23h1v1h-1zM120 23h1v1h-1zM131 23h1v1h-1zM175 23h2v1h-2zM186 23h1v1h-1zM205 23h1v1h-1zM209 23h1v1h-1zM27 24h1v1h-1zM29 24h1v1h-1zM46 24h1v1h-1zM52 24h1v1h-1zM57 24h1v1h-1zM64 24h1v1h-1zM68 24h1v1h-1zM86 24h1v1h-1zM136 24h1v1h-1zM191 24h1v1h-1zM204 24h1v1h-1zM211 24h2v1h-2zM219 24h1v1h-1zM18 25h1v1h-1zM28 25h1v1h-1zM69 25h2v1h-2zM85 25h1v1h-1zM88 25h1v1h-1zM96 25h1v1h-1zM106 25h1v1h-1zM130 25h1v1h-1zM174 25h1v1h-1zM215 25h1v1h-1zM97 26h1v1h-1zM102 26h1v1h-1zM106 26h1v1h-1zM179 26h1v1h-1zM84 27h1v1h-1zM115 27h1v1h-1zM135 27h1v1h-1zM174 27h2v1h-2zM188 27h1v1h-1z"/><path fill="#a300a3" d="M54 24h1v1h-1zM59 24h1v1h-1zM80 24h1v1h-1zM95 24h1v1h-1zM131 24h1v1h-1zM141 24h1v1h-1zM147 24h1v1h-1zM160 24h1v1h-1zM194 24h1v1h-1zM234 24h1v1h-1zM236 24h1v1h-1z"/><path fill="#e000e0" d="M55 24h1v1h-1zM76 24h1v1h-1zM138 24h1v1h-1zM170 24h1v1h-1zM222 24h1v1h-1zM227 24h1v1h-1z"/><path fill="#b800b8" d="M60 24h1v1h-1zM74 24h1v1h-1zM114 24h1v1h-1zM118 24h1v1h-1zM151 24h1v1h-1zM154 24h1v1h-1zM157 24h1v1h-1zM178 24h1v1h-1zM198 24h1v1h-1zM200 24h1v1h-1zM216 24h1v1h-1zM237 24h1v1h-1z"/><path fill="#f500f5" d="M66 24h1v1h-1zM77 24h1v1h-1zM79 24h1v1h-1zM101 24h1v1h-1zM116 24h1v1h-1zM148 24h2v1h-2zM235 24h1v1h-1z"/><path fill="#cc00cc" d="M73 24h1v1h-1zM82 24h1v1h-1zM92 24h2v1h-2zM103 24h1v1h-1zM161 24h1v1h-1zM163 24h2v1h-2zM173 24h1v1h-1zM206 24h1v1h-1zM228 24h1v1h-1z"/></g><rect x="930.6" y="803.7" width="2.2" height="85" fill="#f4f400"/><rect x="953.2" y="846.6" width="20.5" height="103.19999999999993" fill="url(#cb)"/><path d="M953.2 856.9h4M969.7 856.9h4" stroke="#fff" stroke-width="0.8"/><text x="981.2" y="861.8" font-size="11" fill="#111">2</text><path d="M953.2 877.6h4M969.7 877.6h4" stroke="#fff" stroke-width="0.8"/><text x="981.2" y="882.5" font-size="11" fill="#111">1</text><path d="M953.2 898.2h4M969.7 898.2h4" stroke="#fff" stroke-width="0.8"/><text x="981.2" y="903.1" font-size="11" fill="#111">0</text><path d="M953.2 918.8h4M969.7 918.8h4" stroke="#fff" stroke-width="0.8"/><text x="981.2" y="923.7" font-size="11" fill="#111">-1</text><path d="M953.2 939.5h4M969.7 939.5h4" stroke="#fff" stroke-width="0.8"/><text x="981.2" y="944.4" font-size="11" fill="#111">-2</text><g font-size="11" fill="#4d4d4d" text-anchor="end"><text x="1072.6" y="811.5">VIM</text><text x="1072.6" y="817.6">S100A8</text><text x="1072.6" y="823.6">S100A6</text><text x="1072.6" y="829.6">S100A4</text><text x="1072.6" y="835.7">TMSB10</text><text x="1072.6" y="841.7">S100A9</text><text x="1072.6" y="847.7">IL32</text><text x="1072.6" y="853.8">GIMAP7</text><text x="1072.6" y="859.8">S100A10</text><text x="1072.6" y="865.8">LGALS2</text><text x="1072.6" y="871.9">RBP7</text><text x="1072.6" y="877.9">MAL</text><text x="1072.6" y="884.0">FCN1</text><text x="1072.6" y="890.0">LYZ</text><text x="1072.6" y="896.0">CD2</text><text x="1072.6" y="902.1">RGS18</text><text x="1072.6" y="908.1">HLA-DPB1</text><text x="1072.6" y="914.1">GP9</text><text x="1072.6" y="920.2">CD74</text><text x="1072.6" y="926.2">MS4A1</text><text x="1072.6" y="932.3">SPARC</text><text x="1072.6" y="938.3">HLA-DQB1</text><text x="1072.6" y="944.3">GNG11</text><text x="1072.6" y="950.4">PPBP</text><text x="1072.6" y="956.4">CD79B</text><text x="1072.6" y="962.4">SDPR</text><text x="1072.6" y="968.5">CD79A</text><text x="1072.6" y="974.5">PF4</text><text x="1072.6" y="980.5">HIST1H2AC</text><text x="1072.6" y="986.6">HLA-DQA1</text></g><rect x="1079.2" y="803.7" width="273.8" height="181.1" fill="#1a0220"/><g transform="translate(1079.2 803.7) scale(1.14083 6.03667)"><path fill="#1f001f" d="M0 0h240v1.03h-240zM0 4h240v1.03h-240z"/><path fill="#4a004a" d="M0 1h233v1.03h-233zM0 5h233v1.03h-233zM0 12h233v1.03h-233zM0 14h240v1.03h-240zM0 21h36v1.03h-36zM36 21h156v1.03h-156zM192 21h48v1.03h-48z"/><path fill="#f5f500" d="M233 1h7v1.03h-7zM233 5h7v1.03h-7z"/><path fill="#3d003d" d="M0 2h240v1.03h-240z"/><path fill="#7a007a" d="M0 3h240v1.03h-240zM0 18h38v1.03h-38zM38 18h106v1.03h-106zM144 18h96v1.03h-96z"/><path fill="#700070" d="M0 6h240v1.03h-240zM0 7h240v1.03h-240z"/><path fill="#800080" d="M0 8h240v1.03h-240z"/><path fill="#3a003a" d="M0 9h240v1.03h-240zM0 24h58v1.03h-58zM58 24h158v1.03h-158zM216 24h24v1.03h-24zM0 29h41v1.03h-41zM41 29h55v1.03h-55zM96 29h144v1.03h-144z"/><path fill="#1a001a" d="M0 10h240v1.03h-240z"/><path fill="#290029" d="M0 11h132v1.03h-132zM132 11h108v1.03h-108zM0 19h41v1.03h-41zM41 19h127v1.03h-127zM168 19h72v1.03h-72z"/><path fill="#b8b800" d="M233 12h7v1.03h-7z"/><path fill="#5c005c" d="M0 13h240v1.03h-240z"/><path fill="#ffff00" d="M0 15h3v1.03h-3zM0 17h3v1.03h-3zM0 22h3v1.03h-3zM0 25h3v1.03h-3zM0 27h3v1.03h-3zM0 28h3v1.03h-3z"/><path fill="#080008" d="M3 15h237v1.03h-237zM3 17h237v1.03h-237zM0 20h240v1.03h-240zM3 22h237v1.03h-237zM0 23h240v1.03h-240zM3 25h237v1.03h-237zM3 27h237v1.03h-237zM3 28h237v1.03h-237z"/><path fill="#5a005a" d="M0 16h43v1.03h-43zM43 16h115v1.03h-115zM158 16h82v1.03h-82z"/><path fill="#330033" d="M0 26h41v1.03h-41zM41 26h151v1.03h-151zM192 26h48v1.03h-48z"/><path fill="#f500f5" d="M1 0h1v1h-1zM8 0h1v1h-1zM26 0h1v1h-1zM29 0h1v1h-1zM45 0h1v1h-1zM56 0h1v1h-1zM62 0h1v1h-1zM67 0h1v1h-1zM91 0h1v1h-1zM99 0h1v1h-1zM106 0h1v1h-1zM114 0h1v1h-1zM124 0h1v1h-1zM126 0h1v1h-1zM140 0h1v1h-1zM144 0h1v1h-1zM167 0h2v1h-2zM177 0h1v1h-1zM195 0h1v1h-1zM237 0h1v1h-1zM3 2h1v1h-1zM53 2h1v1h-1zM61 2h1v1h-1zM68 2h1v1h-1zM76 2h1v1h-1zM92 2h1v1h-1zM106 2h1v1h-1zM112 2h1v1h-1zM115 2h1v1h-1zM120 2h1v1h-1zM127 2h1v1h-1zM164 2h1v1h-1zM173 2h1v1h-1zM204 2h1v1h-1zM217 2h1v1h-1zM230 2h1v1h-1zM4 4h1v1h-1zM10 4h1v1h-1zM18 4h1v1h-1zM48 4h1v1h-1zM76 4h1v1h-1zM80 4h1v1h-1zM84 4h1v1h-1zM95 4h1v1h-1zM158 4h1v1h-1zM204 4h1v1h-1zM213 4h1v1h-1zM168 16h1v1h-1zM188 16h1v1h-1zM147 18h1v1h-1zM201 18h1v1h-1zM207 18h1v1h-1z"/><path fill="#000000" d="M3 0h1v1h-1zM13 0h1v1h-1zM30 0h1v1h-1zM36 0h3v1h-3zM44 0h1v1h-1zM68 0h1v1h-1zM77 0h2v1h-2zM97 0h1v1h-1zM109 0h2v1h-2zM115 0h2v1h-2zM121 0h3v1h-3zM125 0h1v1h-1zM146 0h1v1h-1zM153 0h1v1h-1zM158 0h1v1h-1zM162 0h1v1h-1zM166 0h1v1h-1zM173 0h4v1h-4zM179 0h1v1h-1zM183 0h1v1h-1zM193 0h1v1h-1zM227 0h1v1h-1zM9 2h1v1h-1zM12 2h2v1h-2zM49 2h1v1h-1zM56 2h1v1h-1zM77 2h1v1h-1zM82 2h1v1h-1zM88 2h1v1h-1zM98 2h1v1h-1zM103 2h1v1h-1zM109 2h1v1h-1zM119 2h1v1h-1zM138 2h1v1h-1zM148 2h1v1h-1zM166 2h1v1h-1zM172 2h1v1h-1zM176 2h1v1h-1zM182 2h1v1h-1zM185 2h1v1h-1zM214 2h1v1h-1zM216 2h1v1h-1zM234 2h1v1h-1zM238 2h1v1h-1zM4 3h1v1h-1zM31 3h1v1h-1zM71 3h1v1h-1zM75 3h1v1h-1zM77 3h1v1h-1zM79 3h1v1h-1zM84 3h1v1h-1zM92 3h1v1h-1zM144 3h1v1h-1zM155 3h1v1h-1zM157 3h1v1h-1zM173 3h1v1h-1zM194 3h1v1h-1zM212 3h1v1h-1zM215 3h1v1h-1zM234 3h1v1h-1zM2 4h1v1h-1zM15 4h1v1h-1zM28 4h1v1h-1zM42 4h1v1h-1zM45 4h1v1h-1zM51 4h1v1h-1zM55 4h1v1h-1zM61 4h1v1h-1zM72 4h1v1h-1zM74 4h1v1h-1zM78 4h1v1h-1zM86 4h2v1h-2zM94 4h1v1h-1zM102 4h2v1h-2zM109 4h1v1h-1zM116 4h1v1h-1zM119 4h1v1h-1zM123 4h1v1h-1zM134 4h1v1h-1zM136 4h1v1h-1zM138 4h2v1h-2zM145 4h1v1h-1zM148 4h1v1h-1zM152 4h1v1h-1zM154 4h1v1h-1zM163 4h1v1h-1zM166 4h2v1h-2zM180 4h1v1h-1zM194 4h1v1h-1zM198 4h1v1h-1zM202 4h1v1h-1zM217 4h1v1h-1zM219 4h1v1h-1zM222 4h1v1h-1zM225 4h1v1h-1zM235 4h1v1h-1zM29 6h1v1h-1zM67 6h1v1h-1zM92 6h1v1h-1zM103 6h1v1h-1zM116 6h1v1h-1zM122 6h1v1h-1zM180 6h1v1h-1zM201 6h1v1h-1zM239 6h1v1h-1zM34 7h1v1h-1zM46 7h1v1h-1zM59 7h1v1h-1zM78 7h1v1h-1zM91 7h1v1h-1zM95 7h1v1h-1zM113 7h1v1h-1zM159 7h1v1h-1zM171 7h1v1h-1zM178 7h1v1h-1zM205 7h1v1h-1zM215 7h1v1h-1zM7 8h1v1h-1zM12 8h1v1h-1zM19 8h3v1h-3zM24 8h1v1h-1zM44 8h1v1h-1zM62 8h1v1h-1zM79 8h1v1h-1zM83 8h1v1h-1zM88 8h1v1h-1zM132 8h1v1h-1zM160 8h1v1h-1zM175 8h1v1h-1zM180 8h1v1h-1zM183 8h1v1h-1zM229 8h1v1h-1zM239 8h1v1h-1zM11 13h1v1h-1zM13 13h1v1h-1zM15 13h1v1h-1zM18 13h2v1h-2zM25 13h2v1h-2zM33 13h1v1h-1zM36 13h1v1h-1zM58 13h1v1h-1zM60 13h1v1h-1zM63 13h2v1h-2zM66 13h2v1h-2zM70 13h2v1h-2zM78 13h1v1h-1zM82 13h2v1h-2zM100 13h2v1h-2zM107 13h1v1h-1zM116 13h1v1h-1zM122 13h1v1h-1zM129 13h1v1h-1zM137 13h2v1h-2zM142 13h1v1h-1zM147 13h1v1h-1zM151 13h1v1h-1zM154 13h1v1h-1zM162 13h1v1h-1zM167 13h1v1h-1zM181 13h1v1h-1zM186 13h1v1h-1zM189 13h1v1h-1zM192 13h1v1h-1zM208 13h1v1h-1zM217 13h1v1h-1zM219 13h3v1h-3zM224 13h1v1h-1zM234 13h1v1h-1zM144 18h1v1h-1zM149 18h1v1h-1zM156 18h1v1h-1zM158 18h1v1h-1zM184 18h2v1h-2zM187 18h1v1h-1zM199 18h1v1h-1zM205 18h1v1h-1zM220 18h1v1h-1zM222 18h2v1h-2z"/><path fill="#a3a300" d="M4 0h1v1h-1zM15 0h1v1h-1zM20 0h1v1h-1zM50 0h1v1h-1zM53 0h1v1h-1zM61 0h1v1h-1zM69 0h1v1h-1zM152 0h1v1h-1zM170 0h1v1h-1zM209 0h1v1h-1zM18 1h1v1h-1zM40 1h1v1h-1zM44 1h1v1h-1zM50 1h1v1h-1zM67 1h1v1h-1zM86 1h1v1h-1zM93 1h1v1h-1zM121 1h1v1h-1zM132 1h1v1h-1zM145 1h1v1h-1zM147 1h1v1h-1zM150 1h1v1h-1zM155 1h1v1h-1zM173 1h1v1h-1zM186 1h1v1h-1zM222 1h1v1h-1zM23 2h1v1h-1zM93 2h1v1h-1zM107 2h1v1h-1zM202 2h1v1h-1zM221 2h1v1h-1zM223 2h1v1h-1zM25 3h1v1h-1zM50 3h1v1h-1zM83 3h1v1h-1zM117 3h1v1h-1zM159 3h1v1h-1zM165 3h1v1h-1zM168 3h1v1h-1zM175 3h1v1h-1zM177 3h1v1h-1zM211 3h1v1h-1zM37 4h1v1h-1zM52 4h1v1h-1zM135 4h1v1h-1zM192 4h1v1h-1zM226 4h1v1h-1zM231 4h2v1h-2zM16 5h1v1h-1zM79 5h1v1h-1zM161 5h1v1h-1zM169 5h1v1h-1zM171 5h1v1h-1zM175 5h1v1h-1zM227 5h1v1h-1zM20 6h1v1h-1zM44 6h1v1h-1zM69 6h1v1h-1zM88 6h1v1h-1zM123 6h1v1h-1zM126 6h1v1h-1zM140 6h1v1h-1zM143 6h1v1h-1zM149 6h1v1h-1zM160 6h2v1h-2zM165 6h1v1h-1zM176 6h2v1h-2zM188 6h1v1h-1zM192 6h1v1h-1zM198 6h1v1h-1zM208 6h1v1h-1zM214 6h1v1h-1zM234 6h2v1h-2zM4 7h1v1h-1zM11 7h1v1h-1zM29 7h1v1h-1zM57 7h1v1h-1zM65 7h1v1h-1zM79 7h1v1h-1zM85 7h1v1h-1zM100 7h2v1h-2zM104 7h1v1h-1zM118 7h1v1h-1zM126 7h2v1h-2zM130 7h1v1h-1zM142 7h1v1h-1zM146 7h1v1h-1zM158 7h1v1h-1zM206 7h1v1h-1zM219 7h1v1h-1zM37 8h1v1h-1zM39 8h1v1h-1zM53 8h1v1h-1zM77 8h1v1h-1zM99 8h1v1h-1zM177 8h1v1h-1zM179 8h1v1h-1zM185 8h1v1h-1zM206 8h1v1h-1zM210 8h1v1h-1zM217 8h1v1h-1zM56 9h1v1h-1zM161 9h1v1h-1zM66 10h1v1h-1zM130 10h1v1h-1zM153 10h1v1h-1zM20 11h1v1h-1zM44 11h1v1h-1zM171 11h1v1h-1zM188 11h1v1h-1zM195 11h1v1h-1zM221 11h1v1h-1zM56 12h1v1h-1zM79 12h1v1h-1zM89 12h1v1h-1zM125 12h1v1h-1zM162 12h1v1h-1zM164 12h1v1h-1zM189 12h1v1h-1zM207 12h1v1h-1zM220 12h2v1h-2zM94 13h1v1h-1zM177 13h1v1h-1zM202 13h1v1h-1zM237 13h2v1h-2zM56 14h1v1h-1zM94 14h1v1h-1zM143 14h1v1h-1zM201 14h2v1h-2zM210 14h1v1h-1zM226 14h1v1h-1zM11 16h1v1h-1zM16 16h1v1h-1zM20 16h1v1h-1zM33 16h1v1h-1zM56 16h1v1h-1zM88 16h1v1h-1zM104 16h1v1h-1zM10 18h1v1h-1zM27 18h1v1h-1zM43 18h1v1h-1zM66 18h1v1h-1zM87 18h1v1h-1zM90 18h1v1h-1zM115 18h1v1h-1zM142 18h1v1h-1zM0 19h1v1h-1zM7 19h1v1h-1zM12 19h1v1h-1zM144 19h1v1h-1zM32 20h1v1h-1zM22 21h1v1h-1zM40 21h1v1h-1zM78 21h1v1h-1zM157 21h1v1h-1zM185 21h1v1h-1zM10 24h1v1h-1zM22 24h1v1h-1zM27 24h1v1h-1zM104 24h1v1h-1zM165 24h1v1h-1zM197 24h1v1h-1zM200 24h1v1h-1zM0 26h1v1h-1zM9 26h1v1h-1zM15 26h1v1h-1zM33 26h1v1h-1zM39 26h1v1h-1zM106 26h1v1h-1zM22 29h1v1h-1zM24 29h1v1h-1zM33 29h1v1h-1zM36 29h2v1h-2zM39 29h1v1h-1zM86 29h1v1h-1zM89 29h2v1h-2zM138 29h1v1h-1z"/><path fill="#525200" d="M5 0h1v1h-1zM31 0h1v1h-1zM42 0h1v1h-1zM82 0h1v1h-1zM112 0h2v1h-2zM156 0h1v1h-1zM163 0h1v1h-1zM194 0h1v1h-1zM231 0h1v1h-1zM11 1h1v1h-1zM56 1h1v1h-1zM60 1h1v1h-1zM69 1h1v1h-1zM133 1h1v1h-1zM143 1h1v1h-1zM160 1h1v1h-1zM181 1h1v1h-1zM199 1h1v1h-1zM210 1h2v1h-2zM229 1h1v1h-1zM27 2h1v1h-1zM51 2h1v1h-1zM86 2h1v1h-1zM89 2h1v1h-1zM162 2h1v1h-1zM188 2h1v1h-1zM190 2h1v1h-1zM197 2h1v1h-1zM203 2h1v1h-1zM211 2h1v1h-1zM218 2h1v1h-1zM226 2h1v1h-1zM11 3h1v1h-1zM16 3h1v1h-1zM33 3h1v1h-1zM41 3h1v1h-1zM48 3h1v1h-1zM55 3h1v1h-1zM104 3h1v1h-1zM112 3h1v1h-1zM127 3h1v1h-1zM130 3h1v1h-1zM151 3h1v1h-1zM166 3h1v1h-1zM179 3h1v1h-1zM187 3h1v1h-1zM189 3h1v1h-1zM201 3h1v1h-1zM205 3h1v1h-1zM214 3h1v1h-1zM217 3h1v1h-1zM221 3h2v1h-2zM235 3h1v1h-1zM238 3h1v1h-1zM47 4h1v1h-1zM69 4h1v1h-1zM81 4h1v1h-1zM101 4h1v1h-1zM127 4h1v1h-1zM133 4h1v1h-1zM169 4h1v1h-1zM183 4h1v1h-1zM197 4h1v1h-1zM218 4h1v1h-1zM36 5h1v1h-1zM58 5h1v1h-1zM111 5h2v1h-2zM119 5h1v1h-1zM122 5h1v1h-1zM156 5h1v1h-1zM162 5h1v1h-1zM181 5h1v1h-1zM187 5h1v1h-1zM190 5h1v1h-1zM13 6h1v1h-1zM26 6h1v1h-1zM36 6h2v1h-2zM40 6h1v1h-1zM45 6h1v1h-1zM54 6h1v1h-1zM66 6h1v1h-1zM73 6h1v1h-1zM84 6h1v1h-1zM99 6h2v1h-2zM121 6h1v1h-1zM130 6h1v1h-1zM169 6h1v1h-1zM185 6h1v1h-1zM195 6h1v1h-1zM203 6h2v1h-2zM212 6h1v1h-1zM219 6h1v1h-1zM221 6h2v1h-2zM230 6h1v1h-1zM236 6h1v1h-1zM7 7h1v1h-1zM47 7h1v1h-1zM49 7h1v1h-1zM56 7h1v1h-1zM93 7h1v1h-1zM117 7h1v1h-1zM120 7h1v1h-1zM131 7h1v1h-1zM148 7h1v1h-1zM153 7h1v1h-1zM168 7h1v1h-1zM208 7h1v1h-1zM210 7h1v1h-1zM217 7h1v1h-1zM221 7h1v1h-1zM233 7h1v1h-1zM1 8h1v1h-1zM32 8h1v1h-1zM34 8h2v1h-2zM61 8h1v1h-1zM67 8h1v1h-1zM76 8h1v1h-1zM86 8h1v1h-1zM89 8h1v1h-1zM100 8h1v1h-1zM106 8h1v1h-1zM129 8h1v1h-1zM131 8h1v1h-1zM134 8h1v1h-1zM146 8h1v1h-1zM149 8h2v1h-2zM159 8h1v1h-1zM161 8h1v1h-1zM165 8h1v1h-1zM169 8h1v1h-1zM176 8h1v1h-1zM191 8h2v1h-2zM203 8h1v1h-1zM208 8h1v1h-1zM214 8h1v1h-1zM224 8h1v1h-1zM227 8h1v1h-1zM26 12h1v1h-1zM38 12h1v1h-1zM41 12h1v1h-1zM77 12h1v1h-1zM108 12h1v1h-1zM110 12h1v1h-1zM127 12h1v1h-1zM154 12h1v1h-1zM157 12h1v1h-1zM208 12h1v1h-1zM2 13h1v1h-1zM7 13h1v1h-1zM10 13h1v1h-1zM21 13h1v1h-1zM34 13h1v1h-1zM39 13h1v1h-1zM53 13h1v1h-1zM56 13h1v1h-1zM69 13h1v1h-1zM86 13h1v1h-1zM98 13h1v1h-1zM118 13h1v1h-1zM171 13h2v1h-2zM178 13h2v1h-2zM211 13h1v1h-1zM231 13h1v1h-1zM17 14h1v1h-1zM49 14h1v1h-1zM136 14h1v1h-1zM148 14h1v1h-1zM206 14h1v1h-1zM9 16h1v1h-1zM28 16h1v1h-1zM73 16h1v1h-1zM82 16h1v1h-1zM127 16h1v1h-1zM169 16h1v1h-1zM221 16h1v1h-1zM12 18h1v1h-1zM37 18h1v1h-1zM56 18h1v1h-1zM67 18h1v1h-1zM80 18h1v1h-1zM86 18h1v1h-1zM131 18h1v1h-1zM2 19h1v1h-1zM4 19h1v1h-1zM2 21h1v1h-1zM6 21h1v1h-1zM28 21h2v1h-2zM64 21h1v1h-1zM36 24h1v1h-1zM38 24h1v1h-1zM49 24h1v1h-1zM55 24h1v1h-1zM143 24h1v1h-1zM149 24h1v1h-1zM162 24h1v1h-1zM168 24h1v1h-1zM183 24h1v1h-1zM1 26h1v1h-1zM22 26h1v1h-1zM37 26h1v1h-1zM44 29h1v1h-1zM50 29h1v1h-1zM67 29h1v1h-1zM83 29h1v1h-1zM140 29h1v1h-1z"/><path fill="#3d3d00" d="M7 0h1v1h-1zM28 0h1v1h-1zM58 0h1v1h-1zM65 0h1v1h-1zM70 0h1v1h-1zM79 0h1v1h-1zM96 0h1v1h-1zM132 0h1v1h-1zM138 0h1v1h-1zM149 0h1v1h-1zM165 0h1v1h-1zM181 0h2v1h-2zM192 0h1v1h-1zM196 0h1v1h-1zM207 0h2v1h-2zM210 0h1v1h-1zM215 0h1v1h-1zM221 0h1v1h-1zM228 0h1v1h-1zM236 0h1v1h-1zM1 2h1v1h-1zM4 2h1v1h-1zM21 2h1v1h-1zM35 2h1v1h-1zM46 2h1v1h-1zM48 2h1v1h-1zM100 2h1v1h-1zM149 2h1v1h-1zM151 2h1v1h-1zM156 2h1v1h-1zM169 2h1v1h-1zM233 2h1v1h-1zM236 2h2v1h-2zM1 3h1v1h-1zM65 3h1v1h-1zM100 3h1v1h-1zM171 3h1v1h-1zM186 3h1v1h-1zM206 3h2v1h-2zM8 4h1v1h-1zM26 4h2v1h-2zM56 4h2v1h-2zM64 4h1v1h-1zM71 4h1v1h-1zM75 4h1v1h-1zM82 4h1v1h-1zM90 4h1v1h-1zM96 4h1v1h-1zM104 4h1v1h-1zM153 4h1v1h-1zM168 4h1v1h-1zM196 4h1v1h-1zM201 4h1v1h-1zM205 4h1v1h-1zM236 4h1v1h-1zM25 6h1v1h-1zM39 6h1v1h-1zM47 6h1v1h-1zM53 6h1v1h-1zM91 6h1v1h-1zM150 6h1v1h-1zM199 6h1v1h-1zM12 7h1v1h-1zM20 7h1v1h-1zM43 7h1v1h-1zM62 7h1v1h-1zM89 7h1v1h-1zM97 7h1v1h-1zM143 7h1v1h-1zM164 7h1v1h-1zM42 8h1v1h-1zM46 8h1v1h-1zM52 8h1v1h-1zM75 8h1v1h-1zM190 8h1v1h-1zM221 8h1v1h-1zM226 8h1v1h-1zM231 8h1v1h-1z"/><path fill="#7a7a00" d="M14 0h1v1h-1zM16 0h1v1h-1zM25 0h1v1h-1zM40 0h1v1h-1zM59 0h1v1h-1zM63 0h1v1h-1zM66 0h1v1h-1zM127 0h1v1h-1zM129 0h1v1h-1zM147 0h1v1h-1zM164 0h1v1h-1zM178 0h1v1h-1zM200 0h1v1h-1zM203 0h1v1h-1zM216 0h1v1h-1zM220 0h1v1h-1zM222 0h1v1h-1zM229 0h1v1h-1zM232 0h1v1h-1zM239 0h1v1h-1zM20 1h1v1h-1zM28 1h1v1h-1zM104 1h1v1h-1zM128 1h1v1h-1zM144 1h1v1h-1zM152 1h1v1h-1zM164 1h1v1h-1zM169 1h1v1h-1zM16 2h1v1h-1zM20 2h1v1h-1zM33 2h1v1h-1zM54 2h1v1h-1zM96 2h1v1h-1zM104 2h1v1h-1zM130 2h1v1h-1zM150 2h1v1h-1zM168 2h1v1h-1zM198 2h1v1h-1zM208 2h1v1h-1zM225 2h1v1h-1zM7 3h1v1h-1zM14 3h1v1h-1zM21 3h1v1h-1zM34 3h1v1h-1zM43 3h1v1h-1zM47 3h1v1h-1zM51 3h1v1h-1zM53 3h1v1h-1zM56 3h1v1h-1zM80 3h1v1h-1zM122 3h1v1h-1zM149 3h1v1h-1zM153 3h1v1h-1zM169 3h1v1h-1zM184 3h1v1h-1zM197 3h1v1h-1zM203 3h1v1h-1zM218 3h1v1h-1zM220 3h1v1h-1zM223 3h1v1h-1zM237 3h1v1h-1zM22 4h1v1h-1zM50 4h1v1h-1zM67 4h1v1h-1zM79 4h1v1h-1zM85 4h1v1h-1zM113 4h1v1h-1zM125 4h1v1h-1zM137 4h1v1h-1zM160 4h1v1h-1zM171 4h1v1h-1zM199 4h1v1h-1zM206 4h1v1h-1zM233 4h1v1h-1zM50 5h1v1h-1zM91 5h2v1h-2zM96 5h1v1h-1zM104 5h1v1h-1zM117 5h1v1h-1zM159 5h1v1h-1zM174 5h1v1h-1zM180 5h1v1h-1zM202 5h1v1h-1zM221 5h1v1h-1zM225 5h1v1h-1zM3 6h1v1h-1zM6 6h1v1h-1zM23 6h1v1h-1zM46 6h1v1h-1zM104 6h1v1h-1zM109 6h1v1h-1zM115 6h1v1h-1zM133 6h1v1h-1zM152 6h2v1h-2zM166 6h2v1h-2zM173 6h3v1h-3zM210 6h1v1h-1zM238 6h1v1h-1zM40 7h1v1h-1zM52 7h1v1h-1zM69 7h1v1h-1zM102 7h2v1h-2zM108 7h1v1h-1zM162 7h1v1h-1zM174 7h1v1h-1zM203 7h2v1h-2zM228 7h1v1h-1zM3 8h1v1h-1zM28 8h1v1h-1zM33 8h1v1h-1zM40 8h1v1h-1zM49 8h1v1h-1zM72 8h1v1h-1zM80 8h1v1h-1zM84 8h1v1h-1zM91 8h1v1h-1zM97 8h1v1h-1zM116 8h1v1h-1zM157 8h1v1h-1zM168 8h1v1h-1zM184 8h1v1h-1zM205 8h1v1h-1zM212 8h2v1h-2zM234 8h1v1h-1zM9 12h1v1h-1zM13 12h1v1h-1zM102 12h2v1h-2zM143 12h1v1h-1zM168 12h1v1h-1zM204 12h1v1h-1zM230 12h1v1h-1zM16 13h1v1h-1zM55 13h1v1h-1zM76 13h1v1h-1zM79 13h1v1h-1zM117 13h1v1h-1zM128 13h1v1h-1zM133 13h1v1h-1zM204 13h1v1h-1zM21 14h1v1h-1zM23 14h1v1h-1zM34 14h1v1h-1zM41 14h1v1h-1zM45 14h1v1h-1zM63 14h1v1h-1zM73 14h1v1h-1zM119 14h1v1h-1zM138 14h1v1h-1zM140 14h1v1h-1zM1 16h1v1h-1zM10 16h1v1h-1zM74 16h1v1h-1zM79 16h1v1h-1zM93 16h1v1h-1zM100 16h1v1h-1zM110 16h1v1h-1zM118 16h1v1h-1zM129 16h1v1h-1zM149 16h1v1h-1zM157 16h1v1h-1zM22 18h1v1h-1zM34 18h1v1h-1zM45 18h1v1h-1zM59 18h1v1h-1zM104 18h1v1h-1zM138 18h2v1h-2zM11 19h1v1h-1zM18 19h1v1h-1zM8 21h1v1h-1zM12 21h1v1h-1zM145 21h1v1h-1zM18 24h1v1h-1zM89 24h1v1h-1zM2 26h1v1h-1zM19 29h1v1h-1zM214 29h1v1h-1z"/><path fill="#e000e0" d="M21 0h2v1h-2zM32 0h1v1h-1zM71 0h1v1h-1zM73 0h1v1h-1zM81 0h1v1h-1zM93 0h2v1h-2zM103 0h1v1h-1zM130 0h1v1h-1zM139 0h1v1h-1zM151 0h1v1h-1zM187 0h1v1h-1zM205 0h1v1h-1zM211 0h1v1h-1zM233 0h1v1h-1zM5 2h1v1h-1zM10 2h1v1h-1zM29 2h1v1h-1zM71 2h1v1h-1zM74 2h2v1h-2zM99 2h1v1h-1zM116 2h1v1h-1zM124 2h1v1h-1zM133 2h2v1h-2zM139 2h1v1h-1zM159 2h1v1h-1zM187 2h1v1h-1zM212 2h1v1h-1zM2 3h1v1h-1zM5 3h2v1h-2zM27 3h1v1h-1zM44 3h1v1h-1zM61 3h1v1h-1zM63 3h1v1h-1zM69 3h1v1h-1zM78 3h1v1h-1zM99 3h1v1h-1zM106 3h1v1h-1zM133 3h1v1h-1zM9 4h1v1h-1zM77 4h1v1h-1zM92 4h2v1h-2zM108 4h1v1h-1zM131 4h1v1h-1zM226 16h1v1h-1zM200 18h1v1h-1zM212 18h1v1h-1z"/><path fill="#b800b8" d="M27 0h1v1h-1zM35 0h1v1h-1zM48 0h1v1h-1zM84 0h1v1h-1zM86 0h1v1h-1zM128 0h1v1h-1zM131 0h1v1h-1zM133 0h1v1h-1zM137 0h1v1h-1zM142 0h1v1h-1zM160 0h1v1h-1zM186 0h1v1h-1zM201 0h1v1h-1zM212 0h2v1h-2zM224 0h1v1h-1zM234 0h1v1h-1zM14 2h1v1h-1zM18 2h2v1h-2zM26 2h1v1h-1zM30 2h1v1h-1zM37 2h1v1h-1zM52 2h1v1h-1zM81 2h1v1h-1zM94 2h1v1h-1zM101 2h2v1h-2zM161 2h1v1h-1zM167 2h1v1h-1zM181 2h1v1h-1zM205 2h1v1h-1zM20 3h1v1h-1zM39 3h1v1h-1zM94 3h1v1h-1zM114 3h1v1h-1zM131 3h1v1h-1zM14 4h1v1h-1zM30 4h1v1h-1zM33 4h1v1h-1zM36 4h1v1h-1zM39 4h1v1h-1zM43 4h1v1h-1zM54 4h1v1h-1zM66 4h1v1h-1zM112 4h1v1h-1zM122 4h1v1h-1zM126 4h1v1h-1zM179 4h1v1h-1zM234 4h1v1h-1zM163 18h1v1h-1zM171 18h1v1h-1zM216 18h1v1h-1z"/><path fill="#666600" d="M33 0h1v1h-1zM54 0h2v1h-2zM72 0h1v1h-1zM80 0h1v1h-1zM89 0h1v1h-1zM108 0h1v1h-1zM154 0h1v1h-1zM161 0h1v1h-1zM198 0h1v1h-1zM225 0h1v1h-1zM230 0h1v1h-1zM238 0h1v1h-1zM78 1h1v1h-1zM91 1h1v1h-1zM110 1h1v1h-1zM137 1h1v1h-1zM149 1h1v1h-1zM151 1h1v1h-1zM156 1h1v1h-1zM165 1h1v1h-1zM188 1h1v1h-1zM201 1h1v1h-1zM212 1h1v1h-1zM219 1h1v1h-1zM221 1h1v1h-1zM225 1h1v1h-1zM232 1h1v1h-1zM0 2h1v1h-1zM7 2h2v1h-2zM17 2h1v1h-1zM34 2h1v1h-1zM39 2h1v1h-1zM44 2h1v1h-1zM58 2h1v1h-1zM108 2h1v1h-1zM113 2h1v1h-1zM128 2h1v1h-1zM135 2h1v1h-1zM153 2h1v1h-1zM183 2h1v1h-1zM191 2h1v1h-1zM210 2h1v1h-1zM228 2h1v1h-1zM231 2h1v1h-1zM239 2h1v1h-1zM37 3h1v1h-1zM42 3h1v1h-1zM88 3h1v1h-1zM97 3h1v1h-1zM108 3h1v1h-1zM110 3h1v1h-1zM118 3h1v1h-1zM124 3h1v1h-1zM140 3h4v1h-4zM161 3h1v1h-1zM172 3h1v1h-1zM174 3h1v1h-1zM176 3h1v1h-1zM185 3h1v1h-1zM191 3h1v1h-1zM213 3h1v1h-1zM239 3h1v1h-1zM5 4h1v1h-1zM21 4h1v1h-1zM49 4h1v1h-1zM59 4h1v1h-1zM89 4h1v1h-1zM115 4h1v1h-1zM117 4h1v1h-1zM130 4h1v1h-1zM132 4h1v1h-1zM141 4h1v1h-1zM143 4h1v1h-1zM149 4h1v1h-1zM159 4h1v1h-1zM185 4h1v1h-1zM200 4h1v1h-1zM212 4h1v1h-1zM44 5h1v1h-1zM86 5h1v1h-1zM129 5h1v1h-1zM131 5h1v1h-1zM203 5h1v1h-1zM212 5h1v1h-1zM218 5h1v1h-1zM220 5h1v1h-1zM4 6h1v1h-1zM33 6h1v1h-1zM38 6h1v1h-1zM41 6h1v1h-1zM61 6h1v1h-1zM63 6h1v1h-1zM72 6h1v1h-1zM74 6h1v1h-1zM78 6h2v1h-2zM85 6h1v1h-1zM89 6h1v1h-1zM93 6h1v1h-1zM108 6h1v1h-1zM111 6h1v1h-1zM117 6h1v1h-1zM151 6h1v1h-1zM163 6h1v1h-1zM194 6h1v1h-1zM206 6h1v1h-1zM215 6h1v1h-1zM224 6h1v1h-1zM226 6h1v1h-1zM233 6h1v1h-1zM5 7h1v1h-1zM8 7h1v1h-1zM22 7h4v1h-4zM54 7h1v1h-1zM71 7h1v1h-1zM73 7h1v1h-1zM76 7h1v1h-1zM82 7h1v1h-1zM92 7h1v1h-1zM99 7h1v1h-1zM124 7h1v1h-1zM138 7h1v1h-1zM149 7h2v1h-2zM161 7h1v1h-1zM169 7h1v1h-1zM180 7h1v1h-1zM193 7h1v1h-1zM196 7h1v1h-1zM199 7h1v1h-1zM218 7h1v1h-1zM222 7h1v1h-1zM0 8h1v1h-1zM5 8h1v1h-1zM10 8h1v1h-1zM22 8h1v1h-1zM54 8h1v1h-1zM60 8h1v1h-1zM78 8h1v1h-1zM110 8h1v1h-1zM142 8h2v1h-2zM151 8h1v1h-1zM171 8h1v1h-1zM178 8h1v1h-1zM196 8h1v1h-1zM215 8h2v1h-2zM219 8h1v1h-1zM223 8h1v1h-1zM225 8h1v1h-1zM235 8h1v1h-1zM69 9h1v1h-1zM148 9h1v1h-1zM213 9h1v1h-1zM64 12h1v1h-1zM66 12h1v1h-1zM71 12h1v1h-1zM97 12h2v1h-2zM136 12h1v1h-1zM142 12h1v1h-1zM150 12h1v1h-1zM155 12h1v1h-1zM165 12h1v1h-1zM175 12h1v1h-1zM190 12h1v1h-1zM203 12h1v1h-1zM209 12h1v1h-1zM5 13h2v1h-2zM27 13h1v1h-1zM73 13h1v1h-1zM110 13h1v1h-1zM126 13h1v1h-1zM130 13h1v1h-1zM143 13h1v1h-1zM149 13h1v1h-1zM35 14h1v1h-1zM79 14h1v1h-1zM108 14h1v1h-1zM149 14h1v1h-1zM177 14h1v1h-1zM237 14h1v1h-1zM8 16h1v1h-1zM51 16h1v1h-1zM57 16h1v1h-1zM119 16h1v1h-1zM128 16h1v1h-1zM136 16h1v1h-1zM166 16h1v1h-1zM15 18h1v1h-1zM30 18h1v1h-1zM39 18h1v1h-1zM63 18h1v1h-1zM88 18h1v1h-1zM137 18h1v1h-1zM19 19h1v1h-1zM35 19h1v1h-1zM40 19h1v1h-1zM104 19h1v1h-1zM116 19h1v1h-1zM131 19h1v1h-1zM104 21h1v1h-1zM127 21h1v1h-1zM150 21h1v1h-1zM102 24h1v1h-1zM116 24h2v1h-2zM10 26h1v1h-1zM30 26h1v1h-1zM57 26h1v1h-1zM11 29h1v1h-1zM25 29h1v1h-1zM52 29h1v1h-1zM59 29h1v1h-1zM69 29h1v1h-1zM71 29h1v1h-1zM126 29h1v1h-1zM199 29h1v1h-1z"/><path fill="#141400" d="M39 0h1v1h-1zM49 0h1v1h-1zM60 0h1v1h-1zM120 0h1v1h-1zM180 0h1v1h-1zM226 0h1v1h-1zM38 2h1v1h-1zM41 2h1v1h-1zM78 2h1v1h-1zM84 2h1v1h-1zM87 2h1v1h-1zM105 2h1v1h-1zM129 2h1v1h-1zM186 2h1v1h-1zM40 3h1v1h-1zM45 3h1v1h-1zM70 3h1v1h-1zM178 3h1v1h-1zM202 3h1v1h-1zM225 3h1v1h-1zM29 4h1v1h-1zM46 4h1v1h-1zM53 4h1v1h-1zM63 4h1v1h-1zM114 4h1v1h-1zM128 4h1v1h-1zM147 4h1v1h-1zM177 4h1v1h-1zM187 4h2v1h-2zM191 4h1v1h-1zM193 4h1v1h-1zM195 4h1v1h-1zM208 4h1v1h-1zM32 7h1v1h-1zM157 7h1v1h-1zM183 7h1v1h-1zM13 8h1v1h-1zM37 13h1v1h-1zM134 13h1v1h-1zM165 13h2v1h-2zM170 13h1v1h-1zM176 13h1v1h-1zM188 13h1v1h-1zM203 13h1v1h-1zM210 13h1v1h-1zM227 13h1v1h-1zM230 13h1v1h-1zM145 18h1v1h-1zM161 18h1v1h-1zM174 18h2v1h-2zM188 18h1v1h-1zM234 18h1v1h-1z"/><path fill="#a300a3" d="M46 0h1v1h-1zM57 0h1v1h-1zM88 0h1v1h-1zM95 0h1v1h-1zM134 0h1v1h-1zM204 0h1v1h-1zM218 0h1v1h-1zM28 2h1v1h-1zM31 2h1v1h-1zM42 2h1v1h-1zM59 2h1v1h-1zM80 2h1v1h-1zM114 2h1v1h-1zM123 2h1v1h-1zM145 2h1v1h-1zM174 2h1v1h-1zM184 2h1v1h-1zM200 2h1v1h-1zM206 2h1v1h-1zM215 2h1v1h-1zM222 2h1v1h-1zM10 3h1v1h-1zM19 3h1v1h-1zM23 3h1v1h-1zM26 3h1v1h-1zM35 3h1v1h-1zM38 3h1v1h-1zM81 3h1v1h-1zM87 3h1v1h-1zM113 3h1v1h-1zM181 3h1v1h-1zM196 3h1v1h-1zM0 4h1v1h-1zM3 4h1v1h-1zM6 4h1v1h-1zM16 4h1v1h-1zM19 4h1v1h-1zM24 4h1v1h-1zM62 4h1v1h-1zM70 4h1v1h-1zM83 4h1v1h-1zM97 4h1v1h-1zM99 4h1v1h-1zM165 4h1v1h-1zM223 4h1v1h-1zM214 16h1v1h-1zM179 18h1v1h-1zM198 18h1v1h-1zM218 18h1v1h-1z"/><path fill="#8f8f00" d="M47 0h1v1h-1zM64 0h1v1h-1zM74 0h1v1h-1zM76 0h1v1h-1zM100 0h1v1h-1zM104 0h1v1h-1zM107 0h1v1h-1zM117 0h1v1h-1zM119 0h1v1h-1zM143 0h1v1h-1zM145 0h1v1h-1zM169 0h1v1h-1zM172 0h1v1h-1zM184 0h2v1h-2zM188 0h1v1h-1zM190 0h1v1h-1zM197 0h1v1h-1zM199 0h1v1h-1zM206 0h1v1h-1zM214 0h1v1h-1zM219 0h1v1h-1zM223 0h1v1h-1zM235 0h1v1h-1zM27 1h1v1h-1zM129 1h1v1h-1zM180 1h1v1h-1zM191 1h1v1h-1zM195 1h1v1h-1zM2 2h1v1h-1zM24 2h1v1h-1zM69 2h1v1h-1zM79 2h1v1h-1zM117 2h2v1h-2zM122 2h1v1h-1zM125 2h1v1h-1zM143 2h1v1h-1zM160 2h1v1h-1zM165 2h1v1h-1zM209 2h1v1h-1zM3 3h1v1h-1zM9 3h1v1h-1zM36 3h1v1h-1zM67 3h1v1h-1zM76 3h1v1h-1zM89 3h1v1h-1zM121 3h1v1h-1zM123 3h1v1h-1zM145 3h1v1h-1zM158 3h1v1h-1zM190 3h1v1h-1zM195 3h1v1h-1zM199 3h2v1h-2zM209 3h2v1h-2zM224 3h1v1h-1zM231 3h1v1h-1zM233 3h1v1h-1zM23 4h1v1h-1zM31 4h1v1h-1zM34 4h2v1h-2zM98 4h1v1h-1zM100 4h1v1h-1zM156 4h1v1h-1zM175 4h1v1h-1zM203 4h1v1h-1zM207 4h1v1h-1zM209 4h3v1h-3zM221 4h1v1h-1zM239 4h1v1h-1zM64 5h1v1h-1zM71 5h1v1h-1zM90 5h1v1h-1zM100 5h1v1h-1zM157 5h2v1h-2zM167 5h2v1h-2zM170 5h1v1h-1zM176 5h1v1h-1zM188 5h1v1h-1zM208 5h1v1h-1zM231 5h1v1h-1zM7 6h1v1h-1zM14 6h1v1h-1zM56 6h1v1h-1zM106 6h1v1h-1zM128 6h1v1h-1zM131 6h2v1h-2zM139 6h1v1h-1zM148 6h1v1h-1zM168 6h1v1h-1zM182 6h1v1h-1zM197 6h1v1h-1zM16 7h1v1h-1zM21 7h1v1h-1zM27 7h1v1h-1zM45 7h1v1h-1zM53 7h1v1h-1zM55 7h1v1h-1zM61 7h1v1h-1zM67 7h1v1h-1zM106 7h1v1h-1zM116 7h1v1h-1zM122 7h1v1h-1zM144 7h1v1h-1zM147 7h1v1h-1zM154 7h1v1h-1zM165 7h1v1h-1zM185 7h1v1h-1zM190 7h1v1h-1zM195 7h1v1h-1zM197 7h2v1h-2zM229 7h2v1h-2zM232 7h1v1h-1zM238 7h1v1h-1zM65 8h1v1h-1zM68 8h1v1h-1zM92 8h1v1h-1zM103 8h1v1h-1zM108 8h2v1h-2zM117 8h1v1h-1zM124 8h1v1h-1zM130 8h1v1h-1zM152 8h1v1h-1zM182 8h1v1h-1zM195 8h1v1h-1zM199 8h2v1h-2zM218 8h1v1h-1zM233 8h1v1h-1zM164 9h1v1h-1zM21 12h1v1h-1zM42 12h1v1h-1zM46 12h1v1h-1zM85 12h1v1h-1zM104 12h1v1h-1zM111 12h1v1h-1zM120 12h1v1h-1zM174 12h1v1h-1zM180 12h1v1h-1zM184 12h1v1h-1zM210 12h1v1h-1zM222 12h1v1h-1zM232 12h1v1h-1zM4 13h1v1h-1zM20 13h1v1h-1zM28 13h1v1h-1zM43 13h1v1h-1zM80 13h1v1h-1zM89 13h1v1h-1zM92 13h1v1h-1zM102 13h2v1h-2zM108 13h1v1h-1zM131 13h1v1h-1zM150 13h1v1h-1zM168 13h1v1h-1zM182 13h1v1h-1zM223 13h1v1h-1zM93 14h1v1h-1zM96 14h1v1h-1zM232 14h2v1h-2zM23 16h1v1h-1zM107 16h2v1h-2zM132 16h1v1h-1zM143 16h1v1h-1zM3 18h1v1h-1zM46 18h1v1h-1zM79 18h1v1h-1zM140 18h1v1h-1zM17 19h1v1h-1zM25 19h1v1h-1zM82 19h1v1h-1zM1 21h1v1h-1zM156 21h1v1h-1zM12 24h1v1h-1zM29 24h1v1h-1zM31 24h1v1h-1zM45 24h1v1h-1zM75 24h1v1h-1zM79 24h1v1h-1zM109 24h1v1h-1zM129 24h1v1h-1zM160 24h1v1h-1zM194 24h1v1h-1zM173 26h1v1h-1zM40 29h1v1h-1zM45 29h1v1h-1zM77 29h1v1h-1z"/><path fill="#cc00cc" d="M75 0h1v1h-1zM87 0h1v1h-1zM217 0h1v1h-1zM15 2h1v1h-1zM25 2h1v1h-1zM36 2h1v1h-1zM40 2h1v1h-1zM65 2h1v1h-1zM67 2h1v1h-1zM70 2h1v1h-1zM85 2h1v1h-1zM110 2h2v1h-2zM144 2h1v1h-1zM154 2h1v1h-1zM163 2h1v1h-1zM179 2h2v1h-2zM201 2h1v1h-1zM17 3h1v1h-1zM72 3h1v1h-1zM82 3h1v1h-1zM91 3h1v1h-1zM96 3h1v1h-1zM120 3h1v1h-1zM128 3h1v1h-1zM132 3h1v1h-1zM160 3h1v1h-1zM7 4h1v1h-1zM25 4h1v1h-1zM118 4h1v1h-1zM174 4h1v1h-1zM199 16h1v1h-1zM168 18h1v1h-1z"/><path fill="#b8b800" d="M87 1h1v1h-1zM148 1h1v1h-1zM142 5h1v1h-1zM149 5h1v1h-1zM165 5h1v1h-1zM222 5h1v1h-1zM43 6h1v1h-1zM50 6h1v1h-1zM0 7h1v1h-1zM39 7h1v1h-1zM140 7h1v1h-1zM207 8h1v1h-1zM16 9h1v1h-1zM171 9h1v1h-1zM184 9h1v1h-1zM72 10h1v1h-1zM136 10h1v1h-1zM158 10h1v1h-1zM220 10h1v1h-1zM0 11h1v1h-1zM102 11h1v1h-1zM149 11h1v1h-1zM165 11h1v1h-1zM177 11h1v1h-1zM182 11h1v1h-1zM206 11h1v1h-1zM228 11h1v1h-1zM236 11h1v1h-1zM238 11h1v1h-1zM205 12h1v1h-1zM17 13h1v1h-1zM85 13h1v1h-1zM104 13h1v1h-1zM136 13h1v1h-1zM174 13h1v1h-1zM191 13h1v1h-1zM233 13h1v1h-1zM22 14h1v1h-1zM86 14h2v1h-2zM109 14h1v1h-1zM130 14h1v1h-1zM146 14h1v1h-1zM163 14h1v1h-1zM228 14h1v1h-1zM2 16h2v1h-2zM6 16h1v1h-1zM18 16h1v1h-1zM26 16h1v1h-1zM37 16h1v1h-1zM42 16h1v1h-1zM123 16h1v1h-1zM19 18h1v1h-1zM21 18h1v1h-1zM24 18h1v1h-1zM33 18h1v1h-1zM5 19h1v1h-1zM9 19h1v1h-1zM13 19h1v1h-1zM16 19h1v1h-1zM22 19h2v1h-2zM29 19h2v1h-2zM0 21h1v1h-1zM14 21h1v1h-1zM16 21h1v1h-1zM21 21h1v1h-1zM30 21h1v1h-1zM33 21h1v1h-1zM143 21h1v1h-1zM151 21h1v1h-1zM7 24h1v1h-1zM16 24h1v1h-1zM25 24h2v1h-2zM30 24h1v1h-1zM37 24h1v1h-1zM44 24h1v1h-1zM47 24h1v1h-1zM51 24h1v1h-1zM103 24h1v1h-1zM203 24h1v1h-1zM4 26h5v1h-5zM16 26h1v1h-1zM18 26h1v1h-1zM21 26h1v1h-1zM23 26h2v1h-2zM26 26h1v1h-1zM81 26h1v1h-1zM3 29h1v1h-1zM31 29h1v1h-1zM34 29h1v1h-1zM55 29h1v1h-1z"/><path fill="#e0e000" d="M100 1h1v1h-1zM140 1h1v1h-1zM167 1h2v1h-2zM183 1h1v1h-1zM203 1h1v1h-1zM213 1h1v1h-1zM223 1h1v1h-1zM60 5h1v1h-1zM146 5h1v1h-1zM210 5h1v1h-1zM214 5h1v1h-1zM90 7h1v1h-1zM181 7h1v1h-1zM231 7h1v1h-1zM56 8h1v1h-1zM69 8h1v1h-1zM158 8h1v1h-1zM237 8h1v1h-1zM97 9h1v1h-1zM104 9h1v1h-1zM130 9h1v1h-1zM176 9h1v1h-1zM199 9h1v1h-1zM202 9h1v1h-1zM210 9h1v1h-1zM229 9h1v1h-1zM237 9h1v1h-1zM5 10h1v1h-1zM168 10h1v1h-1zM170 10h1v1h-1zM225 10h1v1h-1zM153 11h1v1h-1zM164 11h1v1h-1zM168 11h1v1h-1zM173 11h1v1h-1zM224 11h1v1h-1zM234 11h1v1h-1zM95 12h1v1h-1zM116 12h1v1h-1zM169 12h2v1h-2zM206 12h1v1h-1zM211 12h1v1h-1zM145 13h1v1h-1zM212 13h1v1h-1zM225 13h1v1h-1zM6 14h1v1h-1zM67 14h1v1h-1zM69 14h1v1h-1zM89 14h1v1h-1zM144 14h1v1h-1zM190 14h1v1h-1zM192 14h1v1h-1zM205 14h1v1h-1zM217 14h1v1h-1zM238 14h1v1h-1zM3 15h1v1h-1zM143 15h1v1h-1zM167 15h1v1h-1zM5 16h1v1h-1zM13 16h1v1h-1zM25 16h1v1h-1zM30 16h2v1h-2zM39 16h1v1h-1zM45 16h1v1h-1zM2 18h1v1h-1zM11 18h1v1h-1zM28 18h1v1h-1zM130 18h1v1h-1zM1 19h1v1h-1zM10 19h1v1h-1zM26 19h1v1h-1zM34 19h1v1h-1zM38 19h1v1h-1zM3 21h1v1h-1zM11 21h1v1h-1zM13 21h1v1h-1zM19 21h1v1h-1zM23 21h1v1h-1zM95 21h1v1h-1zM135 21h1v1h-1zM17 23h1v1h-1zM0 24h1v1h-1zM3 24h1v1h-1zM5 24h1v1h-1zM9 24h1v1h-1zM11 24h1v1h-1zM24 24h1v1h-1zM28 24h1v1h-1zM35 24h1v1h-1zM40 24h1v1h-1zM42 24h1v1h-1zM50 24h1v1h-1zM56 24h1v1h-1zM135 24h1v1h-1zM11 26h1v1h-1zM14 26h1v1h-1zM25 26h1v1h-1zM29 26h1v1h-1zM31 26h2v1h-2zM35 26h1v1h-1zM36 27h1v1h-1zM205 27h1v1h-1zM178 28h1v1h-1zM1 29h1v1h-1zM4 29h1v1h-1zM8 29h1v1h-1zM10 29h1v1h-1zM14 29h1v1h-1zM26 29h1v1h-1zM57 29h1v1h-1z"/><path fill="#cccc00" d="M146 1h1v1h-1zM214 1h1v1h-1zM61 5h1v1h-1zM89 5h1v1h-1zM133 5h1v1h-1zM166 5h1v1h-1zM26 7h1v1h-1zM72 7h1v1h-1zM75 7h1v1h-1zM128 7h1v1h-1zM141 7h1v1h-1zM167 7h1v1h-1zM26 8h1v1h-1zM39 9h1v1h-1zM47 9h1v1h-1zM89 9h1v1h-1zM99 9h1v1h-1zM109 9h1v1h-1zM128 9h1v1h-1zM178 9h1v1h-1zM225 9h2v1h-2zM233 9h1v1h-1zM61 10h1v1h-1zM121 10h1v1h-1zM193 10h1v1h-1zM206 10h3v1h-3zM211 10h1v1h-1zM122 11h1v1h-1zM136 11h1v1h-1zM146 11h1v1h-1zM179 11h1v1h-1zM181 11h1v1h-1zM193 11h1v1h-1zM213 11h1v1h-1zM233 11h1v1h-1zM239 11h1v1h-1zM149 12h1v1h-1zM223 12h1v1h-1zM169 13h1v1h-1zM206 13h1v1h-1zM222 13h1v1h-1zM9 14h1v1h-1zM26 14h2v1h-2zM37 14h1v1h-1zM51 14h1v1h-1zM110 14h1v1h-1zM127 14h1v1h-1zM135 14h1v1h-1zM175 14h1v1h-1zM179 14h1v1h-1zM187 14h1v1h-1zM203 14h1v1h-1zM215 14h1v1h-1zM221 14h1v1h-1zM230 14h1v1h-1zM235 14h1v1h-1zM0 16h1v1h-1zM7 16h1v1h-1zM122 16h1v1h-1zM1 18h1v1h-1zM5 18h1v1h-1zM9 18h1v1h-1zM16 18h1v1h-1zM29 18h1v1h-1zM32 18h1v1h-1zM35 18h2v1h-2zM74 18h1v1h-1zM8 19h1v1h-1zM20 19h2v1h-2zM24 19h1v1h-1zM28 19h1v1h-1zM31 19h2v1h-2zM36 19h1v1h-1zM90 19h1v1h-1zM186 20h1v1h-1zM4 21h1v1h-1zM17 21h1v1h-1zM20 21h1v1h-1zM26 21h1v1h-1zM32 21h1v1h-1zM100 23h1v1h-1zM8 24h1v1h-1zM13 24h1v1h-1zM20 24h2v1h-2zM43 24h1v1h-1zM52 24h1v1h-1zM54 24h1v1h-1zM158 24h1v1h-1zM206 24h1v1h-1zM12 26h1v1h-1zM19 26h1v1h-1zM34 26h1v1h-1zM144 26h1v1h-1zM143 27h1v1h-1zM221 27h1v1h-1zM71 28h1v1h-1zM2 29h1v1h-1zM5 29h3v1h-3zM15 29h2v1h-2zM21 29h1v1h-1zM23 29h1v1h-1zM28 29h1v1h-1zM32 29h1v1h-1zM35 29h1v1h-1zM38 29h1v1h-1z"/><path fill="#f5f500" d="M196 1h1v1h-1zM208 1h1v1h-1zM82 5h1v1h-1zM109 5h2v1h-2zM155 5h1v1h-1zM179 5h1v1h-1zM206 5h1v1h-1zM96 6h1v1h-1zM186 6h1v1h-1zM189 6h1v1h-1zM33 7h1v1h-1zM35 7h1v1h-1zM212 7h1v1h-1zM104 8h1v1h-1zM2 9h1v1h-1zM152 9h1v1h-1zM160 9h1v1h-1zM182 9h1v1h-1zM186 9h1v1h-1zM239 9h1v1h-1zM70 10h1v1h-1zM113 10h1v1h-1zM146 10h1v1h-1zM152 10h1v1h-1zM199 10h1v1h-1zM152 11h1v1h-1zM157 11h1v1h-1zM160 11h1v1h-1zM183 11h1v1h-1zM216 11h1v1h-1zM225 11h1v1h-1zM43 12h1v1h-1zM73 12h1v1h-1zM119 12h1v1h-1zM121 12h1v1h-1zM141 12h1v1h-1zM229 12h1v1h-1zM65 13h1v1h-1zM16 14h1v1h-1zM33 14h1v1h-1zM47 14h1v1h-1zM61 14h1v1h-1zM84 14h1v1h-1zM88 14h1v1h-1zM100 14h1v1h-1zM156 14h1v1h-1zM169 14h1v1h-1zM188 14h1v1h-1zM211 14h1v1h-1zM214 14h1v1h-1zM19 16h1v1h-1zM21 16h1v1h-1zM35 16h1v1h-1zM38 16h1v1h-1zM105 16h1v1h-1zM7 18h2v1h-2zM13 18h1v1h-1zM18 18h1v1h-1zM20 18h1v1h-1zM23 18h1v1h-1zM26 18h1v1h-1zM69 18h1v1h-1zM3 19h1v1h-1zM14 19h2v1h-2zM27 19h1v1h-1zM33 19h1v1h-1zM37 19h1v1h-1zM39 19h1v1h-1zM5 21h1v1h-1zM7 21h1v1h-1zM15 21h1v1h-1zM34 21h1v1h-1zM68 21h1v1h-1zM112 21h1v1h-1zM4 24h1v1h-1zM15 24h1v1h-1zM17 24h1v1h-1zM32 24h2v1h-2zM53 24h1v1h-1zM130 24h1v1h-1zM3 26h1v1h-1zM13 26h1v1h-1zM20 26h1v1h-1zM27 26h1v1h-1zM38 26h1v1h-1zM40 26h1v1h-1zM167 27h1v1h-1zM0 29h1v1h-1zM9 29h1v1h-1zM12 29h1v1h-1zM17 29h2v1h-2zM20 29h1v1h-1zM30 29h1v1h-1z"/><path fill="#140014" d="M97 2h1v1h-1zM158 2h1v1h-1zM194 2h1v1h-1zM22 3h1v1h-1zM102 3h1v1h-1zM111 3h1v1h-1zM139 3h1v1h-1zM148 3h1v1h-1zM188 3h1v1h-1zM90 6h1v1h-1zM105 6h1v1h-1zM228 6h1v1h-1zM16 8h1v1h-1zM38 8h1v1h-1zM105 8h1v1h-1zM228 8h1v1h-1zM23 13h1v1h-1zM38 13h1v1h-1zM105 13h1v1h-1zM111 13h1v1h-1zM121 13h1v1h-1zM146 13h1v1h-1zM164 13h1v1h-1zM207 13h1v1h-1zM150 18h2v1h-2zM214 18h1v1h-1zM219 18h1v1h-1zM232 18h1v1h-1z"/></g><rect x="1373.2" y="846.6" width="20.799999999999955" height="103.19999999999993" fill="url(#cb)"/><path d="M1373.2 856.9h4M1390.0 856.9h4" stroke="#fff" stroke-width="0.8"/><text x="1401.5" y="861.8" font-size="11" fill="#111">2</text><path d="M1373.2 877.6h4M1390.0 877.6h4" stroke="#fff" stroke-width="0.8"/><text x="1401.5" y="882.5" font-size="11" fill="#111">1</text><path d="M1373.2 898.2h4M1390.0 898.2h4" stroke="#fff" stroke-width="0.8"/><text x="1401.5" y="903.1" font-size="11" fill="#111">0</text><path d="M1373.2 918.8h4M1390.0 918.8h4" stroke="#fff" stroke-width="0.8"/><text x="1401.5" y="923.7" font-size="11" fill="#111">-1</text><path d="M1373.2 939.5h4M1390.0 939.5h4" stroke="#fff" stroke-width="0.8"/><text x="1401.5" y="944.4" font-size="11" fill="#111">-2</text><text x="602.0" y="619.2" font-size="15.8" font-weight="bold" letter-spacing="0.45" fill="#000">PC1</text><text x="1022.5" y="619.2" font-size="15.8" font-weight="bold" letter-spacing="0.45" fill="#000">PC2</text><text x="602.0" y="817.3" font-size="15.8" font-weight="bold" letter-spacing="0.45" fill="#000">PC3</text><text x="1022.5" y="817.3" font-size="15.8" font-weight="bold" letter-spacing="0.45" fill="#000">PC4</text></svg>
<svg class="a" style="left:1411px;top:980px" width="10" height="10" viewBox="0 0 10 10"><path d="M9.5 1 L1 9.5 M9.5 3.5 L3.5 9.5 M9.5 6 L6 9.5 M9.5 8 L8 9.5" stroke="#555" stroke-width="0.9" fill="none"/></svg>
<div class="t" style="left:42.7px;top:18.65px;font-size:20.5px;line-height:20.5px;letter-spacing:0.074px;color:#3a3a3a;text-decoration:underline;text-decoration-thickness:1px;text-underline-offset:2px;">Dimensionality Reduction</div>
<div class="t" style="left:63.02px;top:87.93px;font-size:17.8px;line-height:17.8px;letter-spacing:0.0px;color:#666;transform:scaleX(0.875);transform-origin:0 0;">PCA</div>
<div class="t" style="left:146.08px;top:87.93px;font-size:17.8px;line-height:17.8px;letter-spacing:0.0px;color:#333;transform:scaleX(0.9107);transform-origin:0 0;">ICA</div>
<div class="t" style="left:62.26px;top:167.65px;font-size:20.5px;line-height:20.5px;letter-spacing:0.0px;color:#5e5e5e;transform:scaleX(0.8725);transform-origin:0 0;">PCA</div>
<div class="t" style="left:62.4px;top:225.13px;font-size:15.2px;line-height:15.2px;letter-spacing:0.079px;color:#333;">Select number of components to compute:</div>
<div class="t" style="left:78.4px;top:266.23px;font-size:17.8px;line-height:17.8px;letter-spacing:0.2px;color:#6a6a6a;">50</div>
<div class="t" style="left:62.7px;top:318.93px;font-size:17.8px;line-height:17.8px;letter-spacing:0.371px;color:#333;">Compute ElbowPlot?</div>
<div class="t" style="left:62.7px;top:361.83px;font-size:17.8px;line-height:17.8px;letter-spacing:0.148px;color:#333;">Compute JackStrawPlot?</div>
<div class="t" style="left:62.7px;top:405.03px;font-size:17.8px;line-height:17.8px;letter-spacing:0.493px;color:#333;">Compute Heatmap?</div>
<div class="t" style="left:62.4px;top:449.53px;font-size:15.2px;line-height:15.2px;letter-spacing:0.082px;color:#333;">Set number of features for heatmap:</div>
<div class="t" style="left:78.4px;top:490.73px;font-size:17.8px;line-height:17.8px;letter-spacing:0.2px;color:#6a6a6a;">30</div>
<div class="t" style="left:78.4px;top:553.73px;font-size:17.8px;line-height:17.8px;letter-spacing:-0.583px;color:#333;">Run PCA</div>
<div class="t" style="left:62.6px;top:624.15px;font-size:20.5px;line-height:20.5px;letter-spacing:-0.074px;color:#5e5e5e;">Select No. of Components</div>
<div class="t" style="left:62.6px;top:680.23px;font-size:17.8px;line-height:17.8px;letter-spacing:0.58px;color:#333;">Number of significant components suggested by</div>
<div class="t" style="left:62.6px;top:705.13px;font-size:17.8px;line-height:17.8px;letter-spacing:0.422px;color:#333;">ElbowPlot:</div>
<div class="t" style="left:155.19px;top:705.13px;font-size:17.8px;line-height:17.8px;letter-spacing:0.0px;color:#ff0000;transform:scaleX(0.9125);transform-origin:0 0;">8</div>
<div class="t" style="left:62.4px;top:778.63px;font-size:15.2px;line-height:15.2px;letter-spacing:0.085px;color:#333;">Select number of components for downstream</div>
<div class="t" style="left:62.4px;top:797.63px;font-size:15.2px;line-height:15.2px;letter-spacing:-0.188px;color:#333;">analysis:</div>
<div class="t" style="left:78.4px;top:839.23px;font-size:17.8px;line-height:17.8px;letter-spacing:0.0px;color:#6a6a6a;">8</div>
<div class="t" style="left:566.9px;top:172.33px;font-size:17.8px;line-height:17.8px;letter-spacing:-0.129px;color:#333;">PCA Plot</div>
<div class="t" style="left:688.2px;top:172.33px;font-size:17.8px;line-height:17.8px;letter-spacing:0.322px;color:#333;">Elbow Plot</div>
<div class="t" style="left:826.9px;top:172.33px;font-size:17.8px;line-height:17.8px;letter-spacing:0.591px;color:#666;">Heatmap Plot</div>
<div class="t" style="left:565.9px;top:226.05px;font-size:20.5px;line-height:20.5px;letter-spacing:0.082px;color:#5e5e5e;">Heatmap Plot</div>
<div class="t" style="left:585.6px;top:291.05px;font-size:20.5px;line-height:20.5px;letter-spacing:0.136px;color:#5e5e5e;">Plot Options</div>
<div class="t" style="left:586.2px;top:347.23px;font-size:15.2px;line-height:15.2px;letter-spacing:0.023px;color:#333;">Select principal components to plot:</div>
<div class="t" style="left:602.48px;top:387.33px;font-size:17.8px;line-height:17.8px;letter-spacing:0.0px;color:#333;transform:scaleX(0.9169);transform-origin:0 0;">PC1, PC2</div>
<div class="t" style="left:602.4px;top:476.93px;font-size:17.8px;line-height:17.8px;letter-spacing:0.0px;color:#333;">Plot</div>
<div class="t" style="left:1051.9px;top:347.63px;font-size:15.2px;line-height:15.2px;letter-spacing:0.157px;color:#333;">Number of columns for the plot:</div>
<div class="t" style="left:585.8px;top:547.95px;font-size:20.5px;line-height:20.5px;letter-spacing:-0.067px;color:#5e5e5e;">Plot</div>
<div class="a" style="left:523px;top:200px;width:1010px;height:876px;border:5px solid #ff0000;"></div>
<svg class="a" style="left:1528px;top:600px" width="105" height="80" viewBox="0 0 105 80"><path d="M0 33.9 L50 33.0 L50 38.6 L0 39.6 Z" fill="#ff0000"/><circle cx="72.3" cy="36.5" r="22.2" fill="#ff0000" stroke="#2f5597" stroke-width="2.2"/></svg>
<div class="t" style="left:1580px;top:619.6px;width:40px;text-align:center;font-size:34px;line-height:34px;color:#fff">9</div>
</body></html>
